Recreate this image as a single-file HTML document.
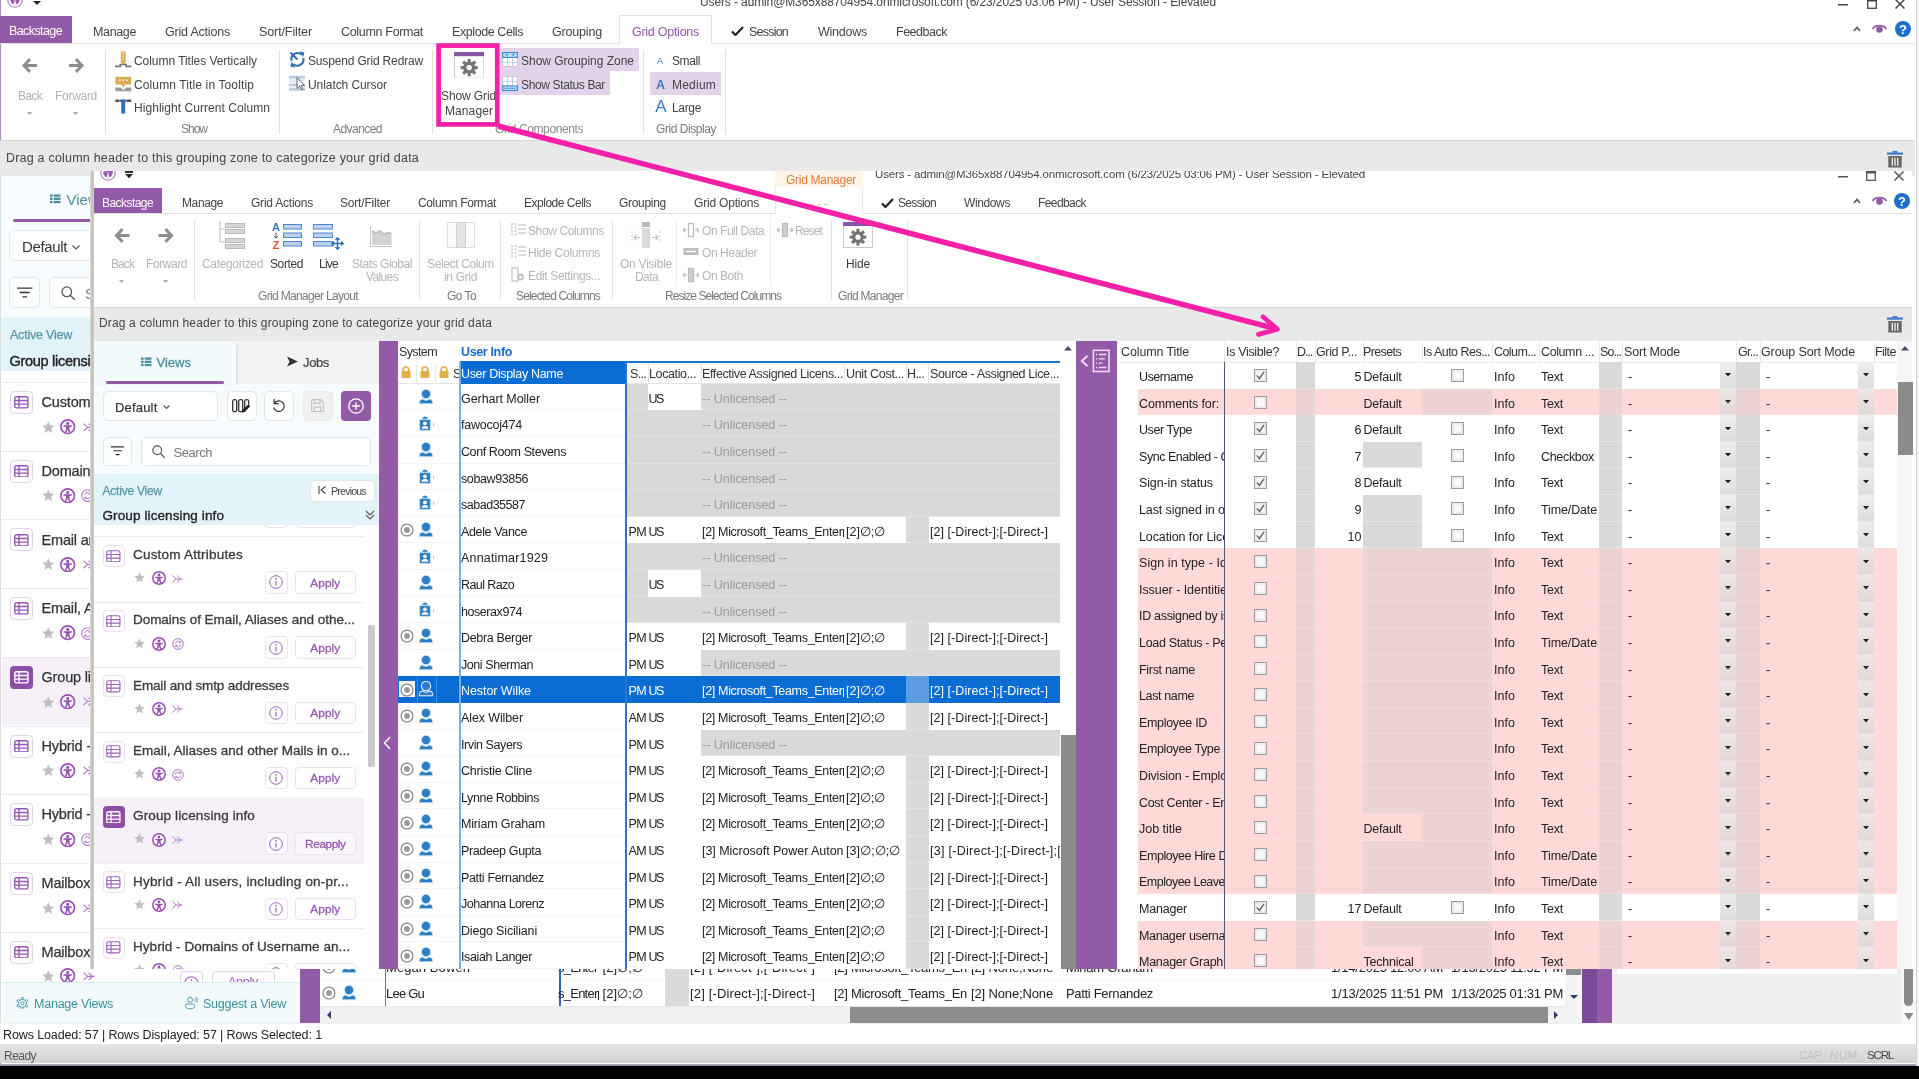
<!DOCTYPE html><html><head><meta charset="utf-8"><title>Grid Manager</title><style>html,body{margin:0;padding:0;background:#fff}
body{width:1919px;height:1079px;position:relative;overflow:hidden;font-family:"Liberation Sans",sans-serif}
#root{position:absolute;left:0;top:0;width:1919px;height:1079px;will-change:transform}
.t{position:absolute;white-space:nowrap}
.r{position:absolute;display:block}
#inner{position:absolute;left:0;top:0;width:1912.7px;height:969px;overflow:hidden;clip-path:inset(171px 0 0 90px)}
</style></head><body><div id="root">
<!-- outer window -->
<div class="r" style="left:0px;top:0px;width:1px;height:1065px;background:#b08cc0;"></div>
<svg class="r" style="left:6.5px;top:-8.5px;" width="16" height="16" viewBox="0 0 20 20"><circle cx="10" cy="10" r="9" fill="#fff" stroke="#b48bc8" stroke-width="1.600"/><circle cx="10" cy="4.800" r="1.800" fill="#9a5db3"/><path d="M4 7.500h12v1.600l-3.200.600z M4 7.500l3.200 2.200-.200 0z" fill="#9a5db3"/><path d="M3.800 8.300Q4 13 8 15.700L9.500 12 9.300 8.300z" fill="#9a5db3"/><path d="M16.200 8.300Q16 13 12 15.700L10.500 12 10.700 8.300z" fill="#9a5db3"/><path d="M9.300 15.800l.7-1.800.7 1.800z" fill="#9a5db3"/></svg>
<svg class="r" style="left:33px;top:1px;" width="8" height="4" viewBox="0 0 8 4"><path d="M0 0h8 L4 4 z" fill="#222"/></svg>
<div class="t" style="left:700.0px;top:-6.3px;font-size:12px;line-height:16px;color:#444;letter-spacing:-0.116px;">Users - admin@M365x88704954.onmicrosoft.com (6/23/2025 03:06 PM) - User Session - Elevated</div>
<svg class="r" style="left:1838px;top:3.5px;" width="10" height="2" viewBox="0 0 10 2"><rect width="10" height="1.500" fill="#444"/></svg><svg class="r" style="left:1867px;top:-1.5px;" width="10" height="10" viewBox="0 0 10 10"><rect x="0.700" y="0.700" width="8.600" height="8.600" fill="none" stroke="#444" stroke-width="1.300"/><rect x="0" y="0" width="10" height="2.500" fill="#444"/></svg><svg class="r" style="left:1895px;top:-1.5px;" width="10" height="10" viewBox="0 0 10 10"><path d="M0.500 0.500l9 9M9.500 0.500l-9 9" stroke="#444" stroke-width="1.500"/></svg>
<div class="r" style="left:0px;top:16px;width:71.6px;height:27px;background:#935ba7;"></div>
<div class="t" style="left:9.0px;top:22.7px;font-size:12.5px;line-height:16px;color:#fff;letter-spacing:-0.597px;">Backstage</div>
<div class="t" style="left:93.0px;top:23.7px;font-size:12.5px;line-height:16px;color:#444;letter-spacing:-0.362px;">Manage</div>
<div class="t" style="left:165.0px;top:23.7px;font-size:12.5px;line-height:16px;color:#444;letter-spacing:-0.199px;">Grid Actions</div>
<div class="t" style="left:259.0px;top:23.7px;font-size:12.5px;line-height:16px;color:#444;letter-spacing:-0.107px;">Sort/Filter</div>
<div class="t" style="left:341.0px;top:23.7px;font-size:12.5px;line-height:16px;color:#444;letter-spacing:-0.318px;">Column Format</div>
<div class="t" style="left:452.0px;top:23.7px;font-size:12.5px;line-height:16px;color:#444;letter-spacing:-0.418px;">Explode Cells</div>
<div class="t" style="left:552.0px;top:23.7px;font-size:12.5px;line-height:16px;color:#444;letter-spacing:-0.178px;">Grouping</div>
<div class="r" style="left:0px;top:43px;width:1915px;height:1px;background:#e0e0e0;"></div>
<div class="r" style="left:619px;top:15px;width:93px;height:29px;background:#fff;border:1px solid #e4e4e4;border-bottom:none;box-sizing:border-box;"></div>
<div class="t" style="left:632.0px;top:23.7px;font-size:12.5px;line-height:16px;color:#9257a8;letter-spacing:-0.264px;">Grid Options</div>
<svg class="r" style="left:731px;top:26px;" width="13" height="10" viewBox="0 0 13 10"><path d="M1 5.500l3.500 3.500L12 1" fill="none" stroke="#222" stroke-width="2.200"/></svg>
<div class="t" style="left:749.0px;top:23.7px;font-size:12.5px;line-height:16px;color:#444;letter-spacing:-0.782px;">Session</div>
<div class="t" style="left:818.0px;top:23.7px;font-size:12.5px;line-height:16px;color:#444;letter-spacing:-0.244px;">Windows</div>
<div class="t" style="left:896.0px;top:23.7px;font-size:12.5px;line-height:16px;color:#444;letter-spacing:-0.487px;">Feedback</div>
<svg class="r" style="left:1853px;top:26px;" width="8" height="6" viewBox="0 0 8 6"><path d="M1 5l3-3.500L7 5" fill="none" stroke="#555" stroke-width="1.600"/></svg>
<svg class="r" style="left:1872px;top:23px;" width="15" height="11" viewBox="0 0 15 11"><path d="M0.500 6C3 1.500 12 1.500 14.500 6" fill="none" stroke="#935ba7" stroke-width="1.600"/><circle cx="7.500" cy="6.500" r="3.300" fill="#935ba7"/></svg>
<svg class="r" style="left:1895px;top:21px;" width="16" height="16" viewBox="0 0 16 16"><circle cx="8" cy="8" r="8" fill="#1e6fcc"/><text x="8" y="12.500" font-size="13" font-weight="700" fill="#fff" text-anchor="middle" font-family="Liberation Sans,sans-serif">?</text></svg>
<svg class="r" style="left:22px;top:58px;" width="15" height="15" viewBox="0 0 15 15"><path d="M15 6H5.5l3.6-3.8L7 0 0 7.5 7 15l2.100-2.200L5.500 9H15z" fill="#8c8c8c"/></svg>
<svg class="r" style="left:69px;top:58px;" width="15" height="15" viewBox="0 0 15 15"><path d="M0 6h9.500L5.900 2.200 8 0l7 7.500L8 15l-2.100-2.200L9.500 9H0z" fill="#8c8c8c"/></svg>
<div class="t" style="left:18.0px;top:87.7px;font-size:12px;line-height:16px;color:#b3b3b3;letter-spacing:-0.670px;">Back</div>
<div class="t" style="left:55.0px;top:87.7px;font-size:12px;line-height:16px;color:#b3b3b3;letter-spacing:-0.287px;">Forward</div>
<svg class="r" style="left:26.5px;top:111.5px;" width="5" height="3" viewBox="0 0 5 3"><path d="M0 0h5 L2.5 3 z" fill="#aaa"/></svg>
<svg class="r" style="left:72.5px;top:111.5px;" width="5" height="3" viewBox="0 0 5 3"><path d="M0 0h5 L2.5 3 z" fill="#aaa"/></svg>
<div class="r" style="left:105px;top:50px;width:1px;height:84px;background:#e1e1e1;"></div>
<div class="r" style="left:279px;top:50px;width:1px;height:84px;background:#e1e1e1;"></div>
<div class="r" style="left:432px;top:50px;width:1px;height:84px;background:#e1e1e1;"></div>
<div class="r" style="left:643px;top:50px;width:1px;height:84px;background:#e1e1e1;"></div>
<div class="r" style="left:725px;top:50px;width:1px;height:84px;background:#e1e1e1;"></div>
<svg class="r" style="left:115px;top:50.5px;" width="17" height="17" viewBox="0 0 17 17"><rect x="5.800" y="0.500" width="4.800" height="10" fill="#dcaa52"/><circle cx="8.200" cy="2.600" r="0.800" fill="#fff"/><circle cx="8.200" cy="5.300" r="0.800" fill="#fff"/><circle cx="8.200" cy="8" r="0.800" fill="#fff"/><path d="M4.800 10.300h6.800L8.200 13.800z" fill="#dcaa52"/><path d="M0 15.300h5.300v-1.800h5.800v1.800h5.300" fill="none" stroke="#777" stroke-width="1.700"/></svg>
<svg class="r" style="left:115px;top:75.5px;" width="17" height="17" viewBox="0 0 17 17"><rect x="0.300" y="0.800" width="16" height="7.700" fill="#dcaa52"/><circle cx="4.700" cy="4.200" r="0.900" fill="#fff"/><circle cx="8.300" cy="4.200" r="0.900" fill="#fff"/><circle cx="11.900" cy="4.200" r="0.900" fill="#fff"/><path d="M5.800 8.400h5L8.300 11.200z" fill="#dcaa52"/><path d="M0.300 11.500h5.200l2.800 2.600 2.800-2.600h5.200v3.800h-16z" fill="#9b9b9b"/></svg>
<svg class="r" style="left:115px;top:99px;" width="17" height="16" viewBox="0 0 17 16"><path d="M0.300 1.800h4.200M12 1.800h4.300" stroke="#555" stroke-width="2.400"/><rect x="6.200" y="0.600" width="4" height="14" fill="#3b6fb3"/><rect x="4.800" y="0.600" width="6.800" height="2.400" fill="#3b6fb3"/></svg>
<div class="t" style="left:134.0px;top:52.7px;font-size:12px;line-height:16px;color:#444;letter-spacing:-0.044px;">Column Titles Vertically</div>
<div class="t" style="left:134.0px;top:76.7px;font-size:12px;line-height:16px;color:#444;letter-spacing:0.123px;">Column Title in Tooltip</div>
<div class="t" style="left:134.0px;top:99.7px;font-size:12px;line-height:16px;color:#444;letter-spacing:0.053px;">Highlight Current Column</div>
<div class="t" style="left:181.0px;top:120.7px;font-size:12px;line-height:16px;color:#7a7a7a;letter-spacing:-1.005px;">Show</div>
<svg class="r" style="left:289px;top:51px;" width="17" height="17" viewBox="0 0 17 17"><path d="M2.600 9.800A6 6 0 0 1 12.300 3.600M14.200 7A6 6 0 0 1 4.600 13.300" fill="none" stroke="#2f6cb5" stroke-width="2"/><path d="M10.500 0.500l5 1-1.500 4.800z" fill="#2f6cb5"/><path d="M6.300 16.400l-5-1 1.500-4.800z" fill="#2f6cb5"/><path d="M1.500 1.500l7 7" stroke="#2f6cb5" stroke-width="2"/></svg>
<svg class="r" style="left:289px;top:75px;" width="17" height="17" viewBox="0 0 17 17"><rect x="0" y="0.500" width="16" height="15.500" fill="#e6edf5"/><path d="M0 2.200h16M0 10h16M0 14.300h16" stroke="#b9cbe0" stroke-width="2.200"/><path d="M8 2.500v11l2.600-2.400 1.900 3.900 1.500-.700-1.900-3.800h3.400z" fill="#fff" stroke="#667" stroke-width="1"/></svg>
<div class="t" style="left:308.0px;top:52.7px;font-size:12px;line-height:16px;color:#444;letter-spacing:-0.161px;">Suspend Grid Redraw</div>
<div class="t" style="left:308.0px;top:76.7px;font-size:12px;line-height:16px;color:#444;letter-spacing:-0.074px;">Unlatch Cursor</div>
<div class="t" style="left:333.0px;top:120.7px;font-size:12px;line-height:16px;color:#7a7a7a;letter-spacing:-0.547px;">Advanced</div>
<svg class="r" style="left:453.6px;top:51.7px;opacity:1;" width="30.4" height="26.8" viewBox="0 0 32 28"><rect x="0.5" y="0.5" width="31" height="27" fill="#fff" stroke="#c6c6c6"/><rect x="0" y="0" width="32" height="4.300" fill="#8a52a6"/>
<g transform="translate(16,16.300)" fill="#757575"><circle r="6.300"/><rect x="-1.700" y="-9" width="3.400" height="18" rx="0.500" transform="rotate(0)"/><rect x="-1.700" y="-9" width="3.400" height="18" rx="0.500" transform="rotate(45)"/><rect x="-1.700" y="-9" width="3.400" height="18" rx="0.500" transform="rotate(90)"/><rect x="-1.700" y="-9" width="3.400" height="18" rx="0.500" transform="rotate(135)"/><circle r="2.800" fill="#fff"/></g></svg>
<div class="t" style="left:441.0px;top:87.7px;font-size:12px;line-height:16px;color:#444;letter-spacing:-0.114px;">Show Grid</div>
<div class="t" style="left:445.0px;top:102.7px;font-size:12px;line-height:16px;color:#444;letter-spacing:0.091px;">Manager</div>
<div class="r" style="left:500px;top:48px;width:139px;height:23px;background:#e2d3ea;"></div>
<div class="r" style="left:500px;top:71px;width:110px;height:23.5px;background:#e2d3ea;"></div>
<svg class="r" style="left:502px;top:52px;" width="16" height="15" viewBox="0 0 16 15"><rect x="0.5" y="0.5" width="15" height="14" fill="#fff" stroke="#c5ccd6"/><path d="M0 10.300h16M5.500 5.500v9.500M10.500 5.500v9.500" stroke="#c5ccd6" fill="none"/><rect x="0.600" y="0.600" width="14.800" height="4.800" fill="#c4e3f7" stroke="#3c8ad6" stroke-width="1.200"/><path d="M3 2.300h3.500l-1.700 1.600zM9.500 2.300H13l-1.700 1.600z" fill="#2f6fb8"/></svg>
<svg class="r" style="left:502px;top:76px;" width="16" height="15" viewBox="0 0 16 15"><rect x="0.5" y="0.5" width="15" height="14" fill="#fff" stroke="#c5ccd6"/><path d="M0 5.300h16M5.500 0v10M10.500 0v10" stroke="#c5ccd6" fill="none"/><rect x="0.600" y="10" width="14.800" height="4.500" fill="#c4e3f7" stroke="#3c8ad6" stroke-width="1.200"/><path d="M2.500 12.300h11" stroke="#5a9ee0" stroke-width="1.200"/></svg>
<div class="t" style="left:521.0px;top:52.7px;font-size:12px;line-height:16px;color:#444;letter-spacing:-0.023px;">Show Grouping Zone</div>
<div class="t" style="left:521.0px;top:76.7px;font-size:12px;line-height:16px;color:#444;letter-spacing:-0.359px;">Show Status Bar</div>
<div class="t" style="left:495.0px;top:120.7px;font-size:12px;line-height:16px;color:#8a8a8a;letter-spacing:-0.403px;">Grid Components</div>
<div class="r" style="left:650px;top:72px;width:71px;height:22.5px;background:#e2d3ea;"></div>
<div class="t" style="left:656.8px;top:54.7px;font-size:9.5px;line-height:12px;color:#3b78c4;">A</div>
<div class="t" style="left:656.0px;top:76.7px;font-size:12.5px;line-height:16px;color:#3b78c4;font-weight:700;">A</div>
<div class="t" style="left:655.3px;top:95.7px;font-size:17px;line-height:22px;color:#3b78c4;">A</div>
<div class="t" style="left:672.0px;top:52.7px;font-size:12px;line-height:16px;color:#444;letter-spacing:-0.402px;">Small</div>
<div class="t" style="left:672.0px;top:76.7px;font-size:12px;line-height:16px;color:#444;letter-spacing:0.220px;">Medium</div>
<div class="t" style="left:672.0px;top:99.7px;font-size:12px;line-height:16px;color:#444;letter-spacing:-0.339px;">Large</div>
<div class="t" style="left:656.0px;top:120.7px;font-size:12px;line-height:16px;color:#7a7a7a;letter-spacing:-0.446px;">Grid Display</div>
<div class="r" style="left:0px;top:140px;width:1915px;height:1px;background:#d4d4d4;"></div>
<div class="r" style="left:0px;top:141px;width:1915px;height:35px;background:#e9e9e9;"></div>
<div class="t" style="left:6.0px;top:149.7px;font-size:12.5px;line-height:16px;color:#444;letter-spacing:0.209px;">Drag a column header to this grouping zone to categorize your grid data</div>
<svg class="r" style="left:1886.5px;top:150.8px;" width="16" height="17" viewBox="0 0 16 17"><path d="M5.500 0h5v1.800h-5z" fill="#3d7cc9"/><rect x="0" y="1.500" width="16" height="2.200" fill="#3d7cc9"/><rect x="1.300" y="5" width="13.400" height="11.500" fill="#666"/><path d="M5.300 6.800v8M8 6.800v8M10.700 6.800v8" stroke="#f2f2f2" stroke-width="1.300"/></svg>
<div class="r" style="left:1px;top:176px;width:299px;height:806px;background:#fff;"></div>
<div class="r" style="left:0px;top:176px;width:1px;height:847px;background:#dcdcdc;"></div>
<div class="r" style="left:1px;top:176px;width:299px;height:141px;background:#f7fcfe;"></div>
<svg class="r" style="left:50px;top:194px;" width="10.5" height="9.625" viewBox="0 0 12 11"><rect x="0" y="0.5" width="3" height="2.600" fill="#4a8c9c"/><rect x="4.200" y="0.5" width="7.800" height="2.600" fill="#4a8c9c"/><rect x="0" y="4.2" width="3" height="2.600" fill="#4a8c9c"/><rect x="4.200" y="4.2" width="7.800" height="2.600" fill="#4a8c9c"/><rect x="0" y="7.9" width="3" height="2.600" fill="#4a8c9c"/><rect x="4.200" y="7.9" width="7.800" height="2.600" fill="#4a8c9c"/></svg>
<div class="t" style="left:66.5px;top:190.2px;font-size:15px;line-height:20px;color:#4d8e9e;">Views</div>
<div class="r" style="left:13px;top:219px;width:117px;height:3px;background:#935ba7;border-radius:2px;"></div>
<div class="r" style="left:9px;top:230px;width:131px;height:31px;background:#fff;border:1px solid #e2e6e8;border-radius:6px;box-sizing:border-box;"></div>
<div class="t" style="left:22.0px;top:236.7px;font-size:15px;line-height:20px;color:#333;letter-spacing:-0.361px;">Default</div>
<svg class="r" style="left:72px;top:245px;" width="8" height="5" viewBox="0 0 8 5"><path d="M0.500 0.500L4 4 L7.5 0.500" fill="none" stroke="#555" stroke-width="1.100"/></svg>
<div class="r" style="left:9px;top:277px;width:31px;height:31px;background:#fff;border:1px solid #e2e6e8;border-radius:6px;box-sizing:border-box;"></div>
<svg class="r" style="left:17.3px;top:287px;" width="15.4" height="11" viewBox="0 0 14 10"><path d="M0 1h14M2.500 5h9M5 9h4" stroke="#333" stroke-width="1.300"/></svg>
<div class="r" style="left:49px;top:277px;width:241px;height:31px;background:#fff;border:1px solid #e2e6e8;border-radius:6px;box-sizing:border-box;"></div>
<svg class="r" style="left:60.65px;top:285.65px;" width="14.7" height="14.7" viewBox="0 0 14 14"><circle cx="5.500" cy="5.500" r="4.600" fill="none" stroke="#555" stroke-width="1.200"/><path d="M9 9l4.500 4.500" stroke="#555" stroke-width="1.300"/></svg>
<div class="t" style="left:85.0px;top:284.7px;font-size:14px;line-height:18px;color:#777;">Search</div>
<div class="r" style="left:1px;top:317px;width:299px;height:54px;background:#e3f3fa;"></div>
<div class="t" style="left:10.0px;top:327.0px;font-size:12.5px;line-height:16px;color:#5797a6;letter-spacing:-0.217px;-webkit-text-stroke:0.25px #5797a6;">Active View</div>
<div class="t" style="left:9.5px;top:351.7px;font-size:14.5px;line-height:19px;color:#222;letter-spacing:-0.288px;-webkit-text-stroke:0.4px #222;">Group licensing info</div>
<div class="r" style="left:2px;top:382px;width:298px;height:1px;background:#ececec;"></div>
<div class="r" style="left:10px;top:391px;width:23px;height:23px;background:#fff;border:1px solid #e3d3ea;border-radius:4px;box-sizing:border-box;"></div>
<svg class="r" style="left:14.15px;top:396.2px;" width="14.7" height="12.6" viewBox="0 0 14 12"><rect x="0.700" y="0.700" width="12.600" height="10.600" rx="1.800" fill="none" stroke="#9a55b3" stroke-width="1.3"/><path d="M0.700 4.300h12.600M0.700 7.800h12.600M4.800 0.700v10.600" stroke="#9a55b3" stroke-width="1.3" fill="none"/></svg>
<div class="t" style="left:41.5px;top:393.2px;font-size:14.5px;line-height:19px;color:#333;letter-spacing:-0.168px;-webkit-text-stroke:0.25px #333;">Custom Attributes</div>
<svg class="r" style="left:41.7px;top:420.7px;" width="12.6" height="12.6" viewBox="0 0 12 12"><path d="M6 0.300l1.700 3.800 4.100.4-3.100 2.800.9 4.100L6 9.300 2.400 11.400l.9-4.100L.2 4.500l4.100-.4z" fill="#c0c0c0"/></svg>
<svg class="r" style="left:60.3px;top:419.3px;" width="15.4" height="15.4" viewBox="0 0 14 14"><circle cx="7" cy="7" r="6.200" fill="#fff" stroke="#9b4fb5" stroke-width="1.500"/><circle cx="7" cy="4" r="1.400" fill="#9b4fb5"/><path d="M3.200 5.700h7.600v1.100l-2.300.6v1.700l1.100 3h-1.400L7 9.500 5.800 12.100H4.400l1.100-3V7.400l-2.300-.6z" fill="#9b4fb5"/></svg>
<svg class="r" style="left:82.95px;top:422.6px;" width="12.1" height="8.8" viewBox="0 0 11 8"><path d="M0.500 0.500l3.700 3.500-3.700 3.500M5 0.500l3.700 3.500L5 7.500M4 4h6.500" fill="none" stroke="#b277c9" stroke-width="1"/></svg>
<div class="r" style="left:2px;top:450.7px;width:298px;height:1px;background:#ececec;"></div>
<div class="r" style="left:10px;top:459.7px;width:23px;height:23px;background:#fff;border:1px solid #e3d3ea;border-radius:4px;box-sizing:border-box;"></div>
<svg class="r" style="left:14.15px;top:464.9px;" width="14.7" height="12.6" viewBox="0 0 14 12"><rect x="0.700" y="0.700" width="12.600" height="10.600" rx="1.800" fill="none" stroke="#9a55b3" stroke-width="1.3"/><path d="M0.700 4.300h12.600M0.700 7.800h12.600M4.800 0.700v10.600" stroke="#9a55b3" stroke-width="1.3" fill="none"/></svg>
<div class="t" style="left:41.5px;top:461.9px;font-size:14.5px;line-height:19px;color:#333;letter-spacing:-0.178px;-webkit-text-stroke:0.25px #333;">Domains of Email</div>
<svg class="r" style="left:41.7px;top:489.4px;" width="12.6" height="12.6" viewBox="0 0 12 12"><path d="M6 0.300l1.700 3.800 4.100.4-3.100 2.800.9 4.100L6 9.300 2.400 11.400l.9-4.100L.2 4.500l4.100-.4z" fill="#c0c0c0"/></svg>
<svg class="r" style="left:60.3px;top:488px;" width="15.4" height="15.4" viewBox="0 0 14 14"><circle cx="7" cy="7" r="6.200" fill="#fff" stroke="#9b4fb5" stroke-width="1.500"/><circle cx="7" cy="4" r="1.400" fill="#9b4fb5"/><path d="M3.200 5.700h7.600v1.100l-2.300.6v1.700l1.100 3h-1.400L7 9.500 5.800 12.100H4.400l1.100-3V7.400l-2.300-.6z" fill="#9b4fb5"/></svg>
<svg class="r" style="left:81.4px;top:489.1px;" width="13.2" height="13.2" viewBox="0 0 12 12"><circle cx="6" cy="6" r="5.300" fill="none" stroke="#b277c9" stroke-width="1"/><path d="M3.300 5.500a2.800 2.800 0 0 1 5-1.200M8.700 6.500a2.800 2.800 0 0 1-5 1.200" fill="none" stroke="#b277c9" stroke-width="0.900"/><path d="M8.600 2.800v1.800H6.800M3.400 9.200V7.400h1.800" fill="none" stroke="#b277c9" stroke-width="0.900"/></svg>
<div class="r" style="left:2px;top:519.4px;width:298px;height:1px;background:#ececec;"></div>
<div class="r" style="left:10px;top:528.4px;width:23px;height:23px;background:#fff;border:1px solid #e3d3ea;border-radius:4px;box-sizing:border-box;"></div>
<svg class="r" style="left:14.15px;top:533.6px;" width="14.7" height="12.6" viewBox="0 0 14 12"><rect x="0.700" y="0.700" width="12.600" height="10.600" rx="1.800" fill="none" stroke="#9a55b3" stroke-width="1.3"/><path d="M0.700 4.300h12.600M0.700 7.800h12.600M4.800 0.700v10.600" stroke="#9a55b3" stroke-width="1.3" fill="none"/></svg>
<div class="t" style="left:41.5px;top:530.6px;font-size:14.5px;line-height:19px;color:#333;letter-spacing:-0.178px;-webkit-text-stroke:0.25px #333;">Email and smtp</div>
<svg class="r" style="left:41.7px;top:558.1px;" width="12.6" height="12.6" viewBox="0 0 12 12"><path d="M6 0.300l1.700 3.800 4.100.4-3.100 2.800.9 4.100L6 9.300 2.400 11.400l.9-4.100L.2 4.500l4.100-.4z" fill="#c0c0c0"/></svg>
<svg class="r" style="left:60.3px;top:556.7px;" width="15.4" height="15.4" viewBox="0 0 14 14"><circle cx="7" cy="7" r="6.200" fill="#fff" stroke="#9b4fb5" stroke-width="1.500"/><circle cx="7" cy="4" r="1.400" fill="#9b4fb5"/><path d="M3.200 5.700h7.600v1.100l-2.300.6v1.700l1.100 3h-1.400L7 9.500 5.800 12.100H4.400l1.100-3V7.400l-2.300-.6z" fill="#9b4fb5"/></svg>
<svg class="r" style="left:82.95px;top:560px;" width="12.1" height="8.8" viewBox="0 0 11 8"><path d="M0.500 0.500l3.700 3.500-3.700 3.500M5 0.500l3.700 3.500L5 7.500M4 4h6.500" fill="none" stroke="#b277c9" stroke-width="1"/></svg>
<div class="r" style="left:2px;top:588.1px;width:298px;height:1px;background:#ececec;"></div>
<div class="r" style="left:10px;top:597.1px;width:23px;height:23px;background:#fff;border:1px solid #e3d3ea;border-radius:4px;box-sizing:border-box;"></div>
<svg class="r" style="left:14.15px;top:602.3px;" width="14.7" height="12.6" viewBox="0 0 14 12"><rect x="0.700" y="0.700" width="12.600" height="10.600" rx="1.800" fill="none" stroke="#9a55b3" stroke-width="1.3"/><path d="M0.700 4.300h12.600M0.700 7.800h12.600M4.800 0.700v10.600" stroke="#9a55b3" stroke-width="1.3" fill="none"/></svg>
<div class="t" style="left:41.5px;top:599.3px;font-size:14.5px;line-height:19px;color:#333;letter-spacing:-0.161px;-webkit-text-stroke:0.25px #333;">Email, Aliases</div>
<svg class="r" style="left:41.7px;top:626.8px;" width="12.6" height="12.6" viewBox="0 0 12 12"><path d="M6 0.300l1.700 3.800 4.100.4-3.100 2.800.9 4.100L6 9.300 2.400 11.400l.9-4.100L.2 4.500l4.100-.4z" fill="#c0c0c0"/></svg>
<svg class="r" style="left:60.3px;top:625.4px;" width="15.4" height="15.4" viewBox="0 0 14 14"><circle cx="7" cy="7" r="6.200" fill="#fff" stroke="#9b4fb5" stroke-width="1.500"/><circle cx="7" cy="4" r="1.400" fill="#9b4fb5"/><path d="M3.200 5.700h7.600v1.100l-2.300.6v1.700l1.100 3h-1.400L7 9.500 5.800 12.100H4.400l1.100-3V7.400l-2.300-.6z" fill="#9b4fb5"/></svg>
<svg class="r" style="left:81.4px;top:626.5px;" width="13.2" height="13.2" viewBox="0 0 12 12"><circle cx="6" cy="6" r="5.300" fill="none" stroke="#b277c9" stroke-width="1"/><path d="M3.300 5.500a2.800 2.800 0 0 1 5-1.200M8.700 6.500a2.800 2.800 0 0 1-5 1.200" fill="none" stroke="#b277c9" stroke-width="0.900"/><path d="M8.600 2.800v1.800H6.800M3.400 9.200V7.400h1.800" fill="none" stroke="#b277c9" stroke-width="0.900"/></svg>
<div class="r" style="left:2px;top:656.8px;width:298px;height:68.7px;background:#f6f0f9;"></div>
<div class="r" style="left:2px;top:656.8px;width:298px;height:1px;background:#ececec;"></div>
<div class="r" style="left:10px;top:665.8px;width:23px;height:23px;background:#8f4fa9;border-radius:4px;"></div>
<svg class="r" style="left:14.15px;top:671px;" width="14.7" height="12.6" viewBox="0 0 14 12"><rect x="0.700" y="0.700" width="12.600" height="10.600" rx="1.800" fill="none" stroke="#fff" stroke-width="1.3"/><path d="M0.700 4.300h12.600M0.700 7.800h12.600M4.800 0.700v10.600" stroke="#fff" stroke-width="1.3" fill="none"/></svg>
<div class="t" style="left:41.5px;top:668.0px;font-size:14.5px;line-height:19px;color:#333;letter-spacing:-0.168px;-webkit-text-stroke:0.25px #333;">Group licensing</div>
<svg class="r" style="left:41.7px;top:695.5px;" width="12.6" height="12.6" viewBox="0 0 12 12"><path d="M6 0.300l1.700 3.800 4.100.4-3.100 2.800.9 4.100L6 9.300 2.400 11.400l.9-4.100L.2 4.500l4.100-.4z" fill="#c0c0c0"/></svg>
<svg class="r" style="left:60.3px;top:694.1px;" width="15.4" height="15.4" viewBox="0 0 14 14"><circle cx="7" cy="7" r="6.200" fill="#fff" stroke="#9b4fb5" stroke-width="1.500"/><circle cx="7" cy="4" r="1.400" fill="#9b4fb5"/><path d="M3.200 5.700h7.600v1.100l-2.300.6v1.700l1.100 3h-1.400L7 9.500 5.800 12.100H4.400l1.100-3V7.400l-2.300-.6z" fill="#9b4fb5"/></svg>
<svg class="r" style="left:82.95px;top:697.4px;" width="12.1" height="8.8" viewBox="0 0 11 8"><path d="M0.500 0.500l3.700 3.500-3.700 3.500M5 0.500l3.700 3.500L5 7.500M4 4h6.500" fill="none" stroke="#b277c9" stroke-width="1"/></svg>
<div class="r" style="left:2px;top:725.5px;width:298px;height:1px;background:#ececec;"></div>
<div class="r" style="left:10px;top:734.5px;width:23px;height:23px;background:#fff;border:1px solid #e3d3ea;border-radius:4px;box-sizing:border-box;"></div>
<svg class="r" style="left:14.15px;top:739.7px;" width="14.7" height="12.6" viewBox="0 0 14 12"><rect x="0.700" y="0.700" width="12.600" height="10.600" rx="1.800" fill="none" stroke="#9a55b3" stroke-width="1.3"/><path d="M0.700 4.300h12.600M0.700 7.800h12.600M4.800 0.700v10.600" stroke="#9a55b3" stroke-width="1.3" fill="none"/></svg>
<div class="t" style="left:41.5px;top:736.7px;font-size:14.5px;line-height:19px;color:#333;letter-spacing:-0.146px;-webkit-text-stroke:0.25px #333;">Hybrid - All</div>
<svg class="r" style="left:41.7px;top:764.2px;" width="12.6" height="12.6" viewBox="0 0 12 12"><path d="M6 0.300l1.700 3.800 4.100.4-3.100 2.800.9 4.100L6 9.300 2.400 11.400l.9-4.100L.2 4.500l4.100-.4z" fill="#c0c0c0"/></svg>
<svg class="r" style="left:60.3px;top:762.8px;" width="15.4" height="15.4" viewBox="0 0 14 14"><circle cx="7" cy="7" r="6.200" fill="#fff" stroke="#9b4fb5" stroke-width="1.500"/><circle cx="7" cy="4" r="1.400" fill="#9b4fb5"/><path d="M3.200 5.700h7.600v1.100l-2.300.6v1.700l1.100 3h-1.400L7 9.500 5.800 12.100H4.400l1.100-3V7.400l-2.300-.6z" fill="#9b4fb5"/></svg>
<svg class="r" style="left:82.95px;top:766.1px;" width="12.1" height="8.8" viewBox="0 0 11 8"><path d="M0.500 0.500l3.700 3.500-3.700 3.500M5 0.500l3.700 3.500L5 7.500M4 4h6.500" fill="none" stroke="#b277c9" stroke-width="1"/></svg>
<div class="r" style="left:2px;top:794.2px;width:298px;height:1px;background:#ececec;"></div>
<div class="r" style="left:10px;top:803.2px;width:23px;height:23px;background:#fff;border:1px solid #e3d3ea;border-radius:4px;box-sizing:border-box;"></div>
<svg class="r" style="left:14.15px;top:808.4px;" width="14.7" height="12.6" viewBox="0 0 14 12"><rect x="0.700" y="0.700" width="12.600" height="10.600" rx="1.800" fill="none" stroke="#9a55b3" stroke-width="1.3"/><path d="M0.700 4.300h12.600M0.700 7.800h12.600M4.800 0.700v10.600" stroke="#9a55b3" stroke-width="1.3" fill="none"/></svg>
<div class="t" style="left:41.5px;top:805.4px;font-size:14.5px;line-height:19px;color:#333;letter-spacing:-0.175px;-webkit-text-stroke:0.25px #333;">Hybrid - Domains</div>
<svg class="r" style="left:41.7px;top:832.9px;" width="12.6" height="12.6" viewBox="0 0 12 12"><path d="M6 0.300l1.700 3.800 4.100.4-3.100 2.800.9 4.100L6 9.300 2.400 11.400l.9-4.100L.2 4.500l4.100-.4z" fill="#c0c0c0"/></svg>
<svg class="r" style="left:60.3px;top:831.5px;" width="15.4" height="15.4" viewBox="0 0 14 14"><circle cx="7" cy="7" r="6.200" fill="#fff" stroke="#9b4fb5" stroke-width="1.500"/><circle cx="7" cy="4" r="1.400" fill="#9b4fb5"/><path d="M3.200 5.700h7.600v1.100l-2.300.6v1.700l1.100 3h-1.400L7 9.500 5.800 12.100H4.400l1.100-3V7.400l-2.300-.6z" fill="#9b4fb5"/></svg>
<svg class="r" style="left:81.4px;top:832.6px;" width="13.2" height="13.2" viewBox="0 0 12 12"><circle cx="6" cy="6" r="5.300" fill="none" stroke="#b277c9" stroke-width="1"/><path d="M3.300 5.500a2.800 2.800 0 0 1 5-1.200M8.700 6.500a2.800 2.800 0 0 1-5 1.200" fill="none" stroke="#b277c9" stroke-width="0.900"/><path d="M8.600 2.800v1.800H6.800M3.400 9.200V7.400h1.800" fill="none" stroke="#b277c9" stroke-width="0.900"/></svg>
<div class="r" style="left:2px;top:862.9px;width:298px;height:1px;background:#ececec;"></div>
<div class="r" style="left:10px;top:871.9px;width:23px;height:23px;background:#fff;border:1px solid #e3d3ea;border-radius:4px;box-sizing:border-box;"></div>
<svg class="r" style="left:14.15px;top:877.1px;" width="14.7" height="12.6" viewBox="0 0 14 12"><rect x="0.700" y="0.700" width="12.600" height="10.600" rx="1.800" fill="none" stroke="#9a55b3" stroke-width="1.3"/><path d="M0.700 4.300h12.600M0.700 7.800h12.600M4.800 0.700v10.600" stroke="#9a55b3" stroke-width="1.3" fill="none"/></svg>
<div class="t" style="left:41.5px;top:874.1px;font-size:14.5px;line-height:19px;color:#333;letter-spacing:-0.178px;-webkit-text-stroke:0.25px #333;">Mailbox</div>
<svg class="r" style="left:41.7px;top:901.6px;" width="12.6" height="12.6" viewBox="0 0 12 12"><path d="M6 0.300l1.700 3.800 4.100.4-3.100 2.800.9 4.100L6 9.300 2.400 11.400l.9-4.100L.2 4.500l4.100-.4z" fill="#c0c0c0"/></svg>
<svg class="r" style="left:60.3px;top:900.2px;" width="15.4" height="15.4" viewBox="0 0 14 14"><circle cx="7" cy="7" r="6.200" fill="#fff" stroke="#9b4fb5" stroke-width="1.500"/><circle cx="7" cy="4" r="1.400" fill="#9b4fb5"/><path d="M3.200 5.700h7.600v1.100l-2.300.6v1.700l1.100 3h-1.400L7 9.500 5.800 12.100H4.400l1.100-3V7.400l-2.300-.6z" fill="#9b4fb5"/></svg>
<svg class="r" style="left:82.95px;top:903.5px;" width="12.1" height="8.8" viewBox="0 0 11 8"><path d="M0.500 0.500l3.700 3.500-3.700 3.500M5 0.500l3.700 3.500L5 7.500M4 4h6.500" fill="none" stroke="#b277c9" stroke-width="1"/></svg>
<div class="r" style="left:2px;top:931.6px;width:298px;height:1px;background:#ececec;"></div>
<div class="r" style="left:10px;top:940.6px;width:23px;height:23px;background:#fff;border:1px solid #e3d3ea;border-radius:4px;box-sizing:border-box;"></div>
<svg class="r" style="left:14.15px;top:945.8px;" width="14.7" height="12.6" viewBox="0 0 14 12"><rect x="0.700" y="0.700" width="12.600" height="10.600" rx="1.800" fill="none" stroke="#9a55b3" stroke-width="1.3"/><path d="M0.700 4.300h12.600M0.700 7.800h12.600M4.800 0.700v10.600" stroke="#9a55b3" stroke-width="1.3" fill="none"/></svg>
<div class="t" style="left:41.5px;top:942.8px;font-size:14.5px;line-height:19px;color:#333;letter-spacing:-0.178px;-webkit-text-stroke:0.25px #333;">Mailbox</div>
<svg class="r" style="left:41.7px;top:970.3px;" width="12.6" height="12.6" viewBox="0 0 12 12"><path d="M6 0.300l1.700 3.800 4.100.4-3.100 2.800.9 4.100L6 9.300 2.400 11.400l.9-4.100L.2 4.500l4.100-.4z" fill="#c0c0c0"/></svg>
<svg class="r" style="left:60.3px;top:968.9px;" width="15.4" height="15.4" viewBox="0 0 14 14"><circle cx="7" cy="7" r="6.200" fill="#fff" stroke="#9b4fb5" stroke-width="1.500"/><circle cx="7" cy="4" r="1.400" fill="#9b4fb5"/><path d="M3.200 5.700h7.600v1.100l-2.300.6v1.700l1.100 3h-1.400L7 9.500 5.800 12.100H4.400l1.100-3V7.400l-2.300-.6z" fill="#9b4fb5"/></svg>
<svg class="r" style="left:82.95px;top:972.2px;" width="12.1" height="8.8" viewBox="0 0 11 8"><path d="M0.500 0.500l3.700 3.500-3.700 3.500M5 0.500l3.700 3.500L5 7.500M4 4h6.500" fill="none" stroke="#b277c9" stroke-width="1"/></svg>
<!-- inner window -->
<div id="inner">
<div class="r" style="left:90.3px;top:171px;width:3.7px;height:798px;background:linear-gradient(90deg,#e2e2e0,#bcbab0 55%,#d2d2d0);"></div>
<div class="r" style="left:94px;top:171px;width:1818px;height:798px;background:#fff;"></div>
<svg class="r" style="left:99.5px;top:164.7px;" width="16" height="16" viewBox="0 0 20 20"><circle cx="10" cy="10" r="9" fill="#fff" stroke="#b48bc8" stroke-width="1.600"/><circle cx="10" cy="4.800" r="1.800" fill="#9a5db3"/><path d="M4 7.500h12v1.600l-3.200.600z M4 7.500l3.200 2.200-.200 0z" fill="#9a5db3"/><path d="M3.800 8.300Q4 13 8 15.700L9.500 12 9.300 8.300z" fill="#9a5db3"/><path d="M16.200 8.300Q16 13 12 15.700L10.500 12 10.700 8.300z" fill="#9a5db3"/><path d="M9.300 15.800l.7-1.800.7 1.800z" fill="#9a5db3"/></svg>
<svg class="r" style="left:124.8px;top:173.7px;" width="8" height="4.2" viewBox="0 0 8 4.2"><path d="M0 0h8 L4 4.2 z" fill="#222"/></svg>
<div class="r" style="left:124.8px;top:171px;width:8px;height:1.6px;background:#333;"></div>
<div class="r" style="left:775px;top:171px;width:88px;height:16px;background:#fef4e8;"></div>
<div class="t" style="left:786.0px;top:171.7px;font-size:12px;line-height:16px;color:#e07b39;letter-spacing:-0.281px;">Grid Manager</div>
<div class="t" style="left:875.0px;top:167.0px;font-size:11.5px;line-height:15px;color:#444;letter-spacing:-0.161px;">Users - admin@M365x88704954.onmicrosoft.com (6/23/2025 03:06 PM) - User Session - Elevated</div>
<svg class="r" style="left:1838px;top:175.5px;" width="10" height="2" viewBox="0 0 10 2"><rect width="10" height="1.500" fill="#555"/></svg><svg class="r" style="left:1866px;top:170.5px;" width="10" height="10" viewBox="0 0 10 10"><rect x="0.700" y="0.700" width="8.600" height="8.600" fill="none" stroke="#555" stroke-width="1.300"/><rect x="0" y="0" width="10" height="2.500" fill="#555"/></svg><svg class="r" style="left:1894px;top:170.5px;" width="10" height="10" viewBox="0 0 10 10"><path d="M0.500 0.500l9 9M9.500 0.500l-9 9" stroke="#555" stroke-width="1.500"/></svg>
<div class="r" style="left:94px;top:188px;width:67.7px;height:25.5px;background:#935ba7;"></div>
<div class="t" style="left:102.0px;top:194.7px;font-size:12px;line-height:16px;color:#fff;letter-spacing:-0.559px;">Backstage</div>
<div class="t" style="left:182.0px;top:194.7px;font-size:12px;line-height:16px;color:#444;letter-spacing:-0.394px;">Manage</div>
<div class="t" style="left:251.0px;top:194.7px;font-size:12px;line-height:16px;color:#444;letter-spacing:-0.225px;">Grid Actions</div>
<div class="t" style="left:340.0px;top:194.7px;font-size:12px;line-height:16px;color:#444;letter-spacing:-0.183px;">Sort/Filter</div>
<div class="t" style="left:418.0px;top:194.7px;font-size:12px;line-height:16px;color:#444;letter-spacing:-0.361px;">Column Format</div>
<div class="t" style="left:524.0px;top:194.7px;font-size:12px;line-height:16px;color:#444;letter-spacing:-0.490px;">Explode Cells</div>
<div class="t" style="left:619.0px;top:194.7px;font-size:12px;line-height:16px;color:#444;letter-spacing:-0.296px;">Grouping</div>
<div class="t" style="left:694.0px;top:194.7px;font-size:12px;line-height:16px;color:#444;letter-spacing:-0.197px;">Grid Options</div>
<div class="t" style="left:898.0px;top:194.7px;font-size:12px;line-height:16px;color:#444;letter-spacing:-0.670px;">Session</div>
<div class="t" style="left:964.0px;top:194.7px;font-size:12px;line-height:16px;color:#444;letter-spacing:-0.383px;">Windows</div>
<div class="t" style="left:1038.0px;top:194.7px;font-size:12px;line-height:16px;color:#444;letter-spacing:-0.588px;">Feedback</div>
<svg class="r" style="left:881px;top:197.5px;" width="13" height="10" viewBox="0 0 13 10"><path d="M1 5.500l3.500 3.500L12 1" fill="none" stroke="#222" stroke-width="2.200"/></svg>
<div class="r" style="left:94px;top:213px;width:1818.7px;height:1px;background:#e0e0e0;"></div>
<div class="r" style="left:775px;top:187px;width:88px;height:27px;background:#fff;border:1px solid #f6e8d8;border-bottom:none;border-top:none;box-sizing:border-box;"></div>
<div class="t" style="left:810.4px;top:195.7px;font-size:11px;line-height:14px;color:#e6b58f;">- - -</div>
<svg class="r" style="left:1853px;top:198px;" width="8" height="6" viewBox="0 0 8 6"><path d="M1 5l3-3.500L7 5" fill="none" stroke="#555" stroke-width="1.600"/></svg>
<svg class="r" style="left:1872px;top:195px;" width="15" height="11" viewBox="0 0 15 11"><path d="M0.500 6C3 1.500 12 1.500 14.500 6" fill="none" stroke="#935ba7" stroke-width="1.600"/><circle cx="7.500" cy="6.500" r="3.300" fill="#935ba7"/></svg>
<svg class="r" style="left:1894px;top:193px;" width="16" height="16" viewBox="0 0 16 16"><circle cx="8" cy="8" r="8" fill="#1e6fcc"/><text x="8" y="12.500" font-size="13" font-weight="700" fill="#fff" text-anchor="middle" font-family="Liberation Sans,sans-serif">?</text></svg>
<svg class="r" style="left:114px;top:228px;" width="16" height="15" viewBox="0 0 15 15"><path d="M15 6H5.5l3.6-3.8L7 0 0 7.5 7 15l2.100-2.200L5.500 9H15z" fill="#8c8c8c"/></svg>
<svg class="r" style="left:158px;top:228px;" width="16" height="15" viewBox="0 0 15 15"><path d="M0 6h9.500L5.900 2.200 8 0l7 7.500L8 15l-2.100-2.200L9.500 9H0z" fill="#8c8c8c"/></svg>
<div class="t" style="left:111.0px;top:255.7px;font-size:12px;line-height:16px;color:#b5b5b5;letter-spacing:-0.920px;">Back</div>
<div class="t" style="left:146.0px;top:255.7px;font-size:12px;line-height:16px;color:#b5b5b5;letter-spacing:-0.430px;">Forward</div>
<svg class="r" style="left:118.5px;top:279.5px;" width="5" height="3" viewBox="0 0 5 3"><path d="M0 0h5 L2.5 3 z" fill="#aaa"/></svg>
<svg class="r" style="left:162.5px;top:279.5px;" width="5" height="3" viewBox="0 0 5 3"><path d="M0 0h5 L2.5 3 z" fill="#aaa"/></svg>
<div class="r" style="left:194px;top:220px;width:1px;height:80px;background:#e1e1e1;"></div>
<div class="r" style="left:419px;top:220px;width:1px;height:80px;background:#e1e1e1;"></div>
<div class="r" style="left:500px;top:220px;width:1px;height:80px;background:#e1e1e1;"></div>
<div class="r" style="left:612px;top:220px;width:1px;height:80px;background:#e1e1e1;"></div>
<div class="r" style="left:831px;top:220px;width:1px;height:80px;background:#e1e1e1;"></div>
<div class="r" style="left:907px;top:220px;width:1px;height:80px;background:#e1e1e1;"></div>
<div class="r" style="left:676px;top:220px;width:1px;height:66px;background:#ececec;"></div>
<div class="r" style="left:770px;top:220px;width:1px;height:66px;background:#ececec;"></div>
<svg class="r" style="left:219px;top:221px;" width="27" height="29" viewBox="0 0 27 29"><path d="M1 0v21h5M1 8h5" fill="none" stroke="#bbb"/><g fill="#d6d6d6" stroke="#bcbcbc"><rect x="6.500" y="2.500" width="19" height="4"/><rect x="6.500" y="8.500" width="19" height="4"/><rect x="6.500" y="17.500" width="19" height="4"/><rect x="6.500" y="23.500" width="19" height="4"/></g></svg>
<div class="t" style="left:202.0px;top:255.7px;font-size:12px;line-height:16px;color:#b5b5b5;letter-spacing:-0.337px;">Categorized</div>
<svg class="r" style="left:272px;top:221px;" width="31" height="29" viewBox="0 0 31 29"><g fill="#bcd3ee" stroke="#4f86c6"><rect x="11.500" y="3.500" width="18" height="4.500"/><rect x="11.500" y="12" width="18" height="4.500"/><rect x="11.500" y="20.500" width="18" height="4.500"/></g><text x="0" y="10" font-size="11" font-weight="700" fill="#3b78c4" font-family="Liberation Sans,sans-serif">A</text><text x="0.500" y="27.500" font-size="11" font-weight="700" fill="#d9532c" font-family="Liberation Sans,sans-serif">Z</text><path d="M4 11.500v5M2.300 15l1.700 2.200L5.700 15" fill="none" stroke="#555" stroke-width="1"/></svg>
<div class="t" style="left:270.0px;top:255.7px;font-size:12px;line-height:16px;color:#3a3a3a;letter-spacing:-0.393px;">Sorted</div>
<svg class="r" style="left:313px;top:222px;" width="32" height="29" viewBox="0 0 32 29"><g fill="#bcd3ee" stroke="#4f86c6"><rect x="0.500" y="2.500" width="19" height="4.500"/><rect x="0.500" y="11" width="19" height="4.500"/><rect x="0.500" y="19.500" width="19" height="4.500"/></g><g stroke="#2f6fb8" stroke-width="1.400" fill="none"><path d="M24.500 16v11M19 21.500h11"/><path d="M22.500 18l2-2.200 2 2.200M22.500 25l2 2.200 2-2.200M21 19.500l-2.200 2 2.200 2M28 19.500l2.200 2-2.200 2"/></g></svg>
<div class="t" style="left:319.0px;top:255.7px;font-size:12px;line-height:16px;color:#3a3a3a;letter-spacing:-0.754px;">Live</div>
<svg class="r" style="left:370px;top:226px;" width="22" height="21" viewBox="0 0 22 21"><path d="M0.500 0v20.500H22" fill="none" stroke="#c4c4c4"/><path d="M2 5l4 2 4-2 4 3 4-1.500 3.500 1V19H2z" fill="#d2d2d2"/><path d="M2 5l4 2 4-2 4 3 4-1.500 3.500 1" fill="none" stroke="#bbb" stroke-width="1.500"/></svg>
<div class="t" style="left:352.0px;top:255.7px;font-size:12px;line-height:16px;color:#b5b5b5;letter-spacing:-0.447px;">Stats Global</div>
<div class="t" style="left:366.0px;top:269.0px;font-size:12px;line-height:16px;color:#b5b5b5;letter-spacing:-0.634px;">Values</div>
<div class="t" style="left:258.0px;top:287.7px;font-size:12px;line-height:16px;color:#7a7a7a;letter-spacing:-0.670px;">Grid Manager Layout</div>
<svg class="r" style="left:447px;top:222px;" width="28" height="27" viewBox="0 0 28 27"><rect x="0.500" y="0.500" width="27" height="25" fill="#fbfbfb" stroke="#dcdcdc"/><rect x="9.500" y="0.500" width="9" height="25" fill="#e3e3e3" stroke="#d0d0d0"/></svg>
<div class="t" style="left:427.0px;top:255.7px;font-size:12px;line-height:16px;color:#b5b5b5;letter-spacing:-0.364px;">Select Colum</div>
<div class="t" style="left:444.0px;top:269.0px;font-size:12px;line-height:16px;color:#b5b5b5;letter-spacing:-0.335px;">in Grid</div>
<div class="t" style="left:447.0px;top:287.7px;font-size:12px;line-height:16px;color:#7a7a7a;letter-spacing:-0.560px;">Go To</div>
<svg class="r" style="left:511px;top:222px;" width="16" height="16" viewBox="0 0 16 16"><path d="M1 1v14M4.500 1v14" stroke="#c6c6c6" stroke-width="1.500" stroke-dasharray="2 1.500"/><path d="M7 3h8M7 7h8M7 11h8" stroke="#cfcfcf" stroke-width="1.500"/></svg>
<svg class="r" style="left:511px;top:244px;" width="16" height="16" viewBox="0 0 16 16"><path d="M1 1v14M4.500 1v14" stroke="#c6c6c6" stroke-width="1.500" stroke-dasharray="2 1.500"/><path d="M7 3h8M7 7h8M7 11h8" stroke="#cfcfcf" stroke-width="1.500"/></svg>
<svg class="r" style="left:511px;top:267px;" width="16" height="16" viewBox="0 0 16 16"><rect x="1" y="1" width="6" height="13" fill="none" stroke="#c6c6c6" stroke-width="1.400"/><circle cx="9.500" cy="10" r="3.600" fill="#c6c6c6"/><circle cx="9.500" cy="10" r="1.300" fill="#fff"/></svg>
<div class="t" style="left:528.0px;top:222.7px;font-size:12px;line-height:16px;color:#b5b5b5;letter-spacing:-0.392px;">Show Columns</div>
<div class="t" style="left:528.0px;top:245.2px;font-size:12px;line-height:16px;color:#b5b5b5;letter-spacing:-0.280px;">Hide Columns</div>
<div class="t" style="left:528.0px;top:267.7px;font-size:12px;line-height:16px;color:#b5b5b5;letter-spacing:-0.336px;">Edit Settings...</div>
<div class="t" style="left:516.0px;top:287.7px;font-size:12px;line-height:16px;color:#7a7a7a;letter-spacing:-0.837px;">Selected Columns</div>
<svg class="r" style="left:631px;top:222px;" width="30" height="28" viewBox="0 0 30 28"><rect x="11" y="0" width="8" height="5" fill="#b8b8b8"/><rect x="11" y="6" width="8" height="20" fill="#d9d9d9"/><path d="M1 9v12M29 9v12" stroke="#c6c6c6" stroke-dasharray="2 2"/><path d="M3 15.500h6M21 15.500h6" stroke="#c0c0c0" stroke-width="1.200"/><path d="M5.500 13L3 15.500 5.500 18M24.500 13l2.500 2.500-2.500 2.500" fill="none" stroke="#c0c0c0" stroke-width="1.200"/></svg>
<div class="t" style="left:620.0px;top:255.7px;font-size:12px;line-height:16px;color:#b5b5b5;letter-spacing:-0.248px;">On Visible</div>
<div class="t" style="left:635.0px;top:269.0px;font-size:12px;line-height:16px;color:#b5b5b5;letter-spacing:-0.587px;">Data</div>
<svg class="r" style="left:683px;top:222px;" width="16" height="16" viewBox="0 0 16 16"><rect x="5.500" y="1.500" width="5" height="13" fill="none" stroke="#bdbdbd" stroke-width="1.300"/><path d="M0 8h4M12 8h4M2 6l-2 2 2 2M14 6l2 2-2 2" fill="none" stroke="#bdbdbd" stroke-width="1.200"/></svg>
<svg class="r" style="left:683px;top:246px;" width="16" height="12" viewBox="0 0 16 12"><rect x="0.500" y="2" width="15" height="7" fill="#bdbdbd"/><path d="M3 5.500h10" stroke="#fff" stroke-width="1.400"/></svg>
<svg class="r" style="left:683px;top:267px;" width="16" height="16" viewBox="0 0 16 16"><rect x="5.500" y="1.500" width="5" height="13" fill="#cfcfcf" stroke="#bdbdbd" stroke-width="1.300"/><path d="M0 8h4M12 8h4M2 6l-2 2 2 2M14 6l2 2-2 2" fill="none" stroke="#bdbdbd" stroke-width="1.200"/></svg>
<div class="t" style="left:702.0px;top:222.7px;font-size:12px;line-height:16px;color:#b5b5b5;letter-spacing:-0.447px;">On Full Data</div>
<div class="t" style="left:702.0px;top:245.2px;font-size:12px;line-height:16px;color:#b5b5b5;letter-spacing:-0.411px;">On Header</div>
<div class="t" style="left:702.0px;top:267.7px;font-size:12px;line-height:16px;color:#b5b5b5;letter-spacing:-0.433px;">On Both</div>
<svg class="r" style="left:777px;top:222px;" width="16" height="16" viewBox="0 0 16 16"><rect x="5.500" y="1.500" width="5" height="13" fill="#cfcfcf" stroke="#bdbdbd" stroke-width="1.300"/><path d="M0 8h4M12 8h4M2 6l-2 2 2 2M14 6l2 2-2 2" fill="none" stroke="#bdbdbd" stroke-width="1.200"/></svg>
<div class="t" style="left:795.0px;top:222.7px;font-size:12px;line-height:16px;color:#b5b5b5;letter-spacing:-0.870px;">Reset</div>
<div class="t" style="left:665.0px;top:287.7px;font-size:12px;line-height:16px;color:#7a7a7a;letter-spacing:-0.930px;">Resize Selected Columns</div>
<svg class="r" style="left:843px;top:222px;opacity:1;" width="30" height="26" viewBox="0 0 32 28"><rect x="0.5" y="0.5" width="31" height="27" fill="#fff" stroke="#c6c6c6"/><rect x="0" y="0" width="32" height="4.300" fill="#8a52a6"/>
<g transform="translate(16,16.300)" fill="#757575"><circle r="6.300"/><rect x="-1.700" y="-9" width="3.400" height="18" rx="0.500" transform="rotate(0)"/><rect x="-1.700" y="-9" width="3.400" height="18" rx="0.500" transform="rotate(45)"/><rect x="-1.700" y="-9" width="3.400" height="18" rx="0.500" transform="rotate(90)"/><rect x="-1.700" y="-9" width="3.400" height="18" rx="0.500" transform="rotate(135)"/><circle r="2.800" fill="#fff"/></g></svg>
<div class="t" style="left:846.0px;top:255.7px;font-size:12px;line-height:16px;color:#3a3a3a;letter-spacing:-0.170px;">Hide</div>
<div class="t" style="left:838.0px;top:287.7px;font-size:12px;line-height:16px;color:#7a7a7a;letter-spacing:-0.697px;">Grid Manager</div>
<div class="r" style="left:94px;top:306.5px;width:1818px;height:1px;background:#d4d4d4;"></div>
<div class="r" style="left:94px;top:307.5px;width:1818px;height:33px;background:#e9e9e9;"></div>
<div class="t" style="left:99.0px;top:315.2px;font-size:12px;line-height:16px;color:#444;letter-spacing:0.152px;">Drag a column header to this grouping zone to categorize your grid data</div>
<svg class="r" style="left:1886.5px;top:315.5px;" width="16" height="17" viewBox="0 0 16 17"><path d="M5.500 0h5v1.800h-5z" fill="#3d7cc9"/><rect x="0" y="1.500" width="16" height="2.200" fill="#3d7cc9"/><rect x="1.300" y="5" width="13.400" height="11.500" fill="#666"/><path d="M5.300 6.800v8M8 6.800v8M10.700 6.800v8" stroke="#f2f2f2" stroke-width="1.300"/></svg>
<div class="r" style="left:94px;top:340.5px;width:285px;height:628.5px;background:#fff;"></div>
<div class="r" style="left:94px;top:384px;width:285px;height:90px;background:#f7fcfe;"></div>
<div class="r" style="left:236px;top:340.5px;width:143px;height:43.5px;background:#f3f3f3;"></div>
<div class="r" style="left:94px;top:340.5px;width:142px;height:43.5px;background:#f3fbfd;border-radius:0 5px 0 0;box-shadow:1px 0 2px rgba(0,0,0,.12);"></div>
<svg class="r" style="left:141px;top:357px;" width="10.5" height="9.625" viewBox="0 0 12 11"><rect x="0" y="0.5" width="3" height="2.600" fill="#4a8e9f"/><rect x="4.200" y="0.5" width="7.800" height="2.600" fill="#4a8e9f"/><rect x="0" y="4.2" width="3" height="2.600" fill="#4a8e9f"/><rect x="4.200" y="4.2" width="7.800" height="2.600" fill="#4a8e9f"/><rect x="0" y="7.9" width="3" height="2.600" fill="#4a8e9f"/><rect x="4.200" y="7.9" width="7.800" height="2.600" fill="#4a8e9f"/></svg>
<div class="t" style="left:156.5px;top:354.4px;font-size:13px;line-height:17px;color:#4a8e9f;letter-spacing:0.011px;-webkit-text-stroke:0.3px #4a8e9f;">Views</div>
<div class="r" style="left:106px;top:381px;width:118px;height:3px;background:#935ba7;border-radius:2px;"></div>
<svg class="r" style="left:287px;top:356px;" width="11" height="11" viewBox="0 0 12 12"><path d="M0 0.500L12 6 0 11.500l2.800-5.500z" fill="#333"/></svg>
<div class="t" style="left:303.0px;top:353.7px;font-size:13px;line-height:17px;color:#444;letter-spacing:-0.365px;-webkit-text-stroke:0.2px #444;">Jobs</div>
<div class="r" style="left:102.5px;top:391px;width:115.5px;height:29.5px;background:#fff;border:1px solid #e2e6e8;border-radius:5px;box-sizing:border-box;"></div>
<div class="t" style="left:115.0px;top:398.5px;font-size:13px;line-height:17px;color:#333;letter-spacing:0.187px;-webkit-text-stroke:0.2px #333;">Default</div>
<svg class="r" style="left:163px;top:405.25px;" width="7" height="4.5" viewBox="0 0 7 4.5"><path d="M0.500 0.500L3.5 3.5 L6.5 0.500" fill="none" stroke="#555" stroke-width="1.100"/></svg>
<div class="r" style="left:226.5px;top:391px;width:30px;height:29.5px;background:#fff;border:1px solid #e2e6e8;border-radius:5px;box-sizing:border-box;"></div>
<svg class="r" style="left:232px;top:398.8px;" width="18" height="14" viewBox="0 0 18 14"><rect x="0.700" y="0.700" width="4" height="12" rx="1.500" fill="none" stroke="#333" stroke-width="1.300"/><rect x="6.700" y="0.700" width="4" height="12" rx="1.500" fill="none" stroke="#333" stroke-width="1.300"/><path d="M12.700 12.700V2.200q0-1.500 2-1.500t2 1.500V5" fill="none" stroke="#333" stroke-width="1.300"/><path d="M10 14l1-3.500 5.500-5.500 2 2-5.500 5.500z" fill="#222"/></svg>
<div class="r" style="left:264px;top:391px;width:30px;height:29.5px;background:#fff;border:1px solid #e2e6e8;border-radius:5px;box-sizing:border-box;"></div>
<svg class="r" style="left:272.35px;top:398.375px;" width="13.3" height="14.25" viewBox="0 0 14 15"><path d="M2.500 5.500A5.600 5.600 0 1 1 1.800 10" fill="none" stroke="#333" stroke-width="1.300"/><path d="M2.300 1v4.800h4.800" fill="none" stroke="#333" stroke-width="1.300"/></svg>
<div class="r" style="left:302.5px;top:391px;width:30.5px;height:29.5px;background:#f1f1f1;border:1px solid #ececec;border-radius:4px;box-sizing:border-box;"></div>
<svg class="r" style="left:310.85px;top:399.15px;" width="13.3" height="13.3" viewBox="0 0 14 14"><path d="M1.700 0.700h8.600l3 3v8.600q0 1-1 1H1.700q-1 0-1-1V1.700q0-1 1-1z" fill="none" stroke="#c4c4c4" stroke-width="1.300"/><path d="M3.500 0.700v3.800h6V0.700M3.500 13.300V8.500h7v4.800" fill="none" stroke="#c4c4c4" stroke-width="1.300"/></svg>
<div class="r" style="left:340.5px;top:391px;width:30.5px;height:29.5px;background:#935ba7;border-radius:4px;"></div>
<svg class="r" style="left:347.5px;top:397.8px;" width="16" height="16" viewBox="0 0 16 16"><circle cx="8" cy="8" r="7.200" fill="none" stroke="#fff" stroke-width="1.300"/><path d="M8 4.200v7.600M4.200 8h7.600" stroke="#fff" stroke-width="1.300"/></svg>
<div class="r" style="left:102.5px;top:436.5px;width:29.5px;height:29.5px;background:#fff;border:1px solid #e2e6e8;border-radius:5px;box-sizing:border-box;"></div>
<svg class="r" style="left:110.85px;top:446.25px;" width="13.3" height="9.5" viewBox="0 0 14 10"><path d="M0 1h14M2.500 5h9M5 9h4" stroke="#333" stroke-width="1.300"/></svg>
<div class="r" style="left:140.5px;top:436.5px;width:230.5px;height:29.5px;background:#fff;border:1px solid #e2e6e8;border-radius:5px;box-sizing:border-box;"></div>
<svg class="r" style="left:151.85px;top:444.85px;" width="13.3" height="13.3" viewBox="0 0 14 14"><circle cx="5.500" cy="5.500" r="4.600" fill="none" stroke="#555" stroke-width="1.200"/><path d="M9 9l4.500 4.500" stroke="#555" stroke-width="1.300"/></svg>
<div class="t" style="left:173.5px;top:444.0px;font-size:13px;line-height:17px;color:#777;letter-spacing:-0.449px;">Search</div>
<div class="r" style="left:94px;top:536.3px;width:270px;height:1px;background:#ececec;"></div>
<div class="r" style="left:102.5px;top:544.8px;width:22.5px;height:22px;background:#fff;border:1px solid #ebe1f0;border-radius:4px;box-sizing:border-box;"></div>
<svg class="r" style="left:106.35px;top:549.5px;" width="14.7" height="12.6" viewBox="0 0 14 12"><rect x="0.700" y="0.700" width="12.600" height="10.600" rx="1.800" fill="none" stroke="#a062b8" stroke-width="1.1"/><path d="M0.700 4.300h12.600M0.700 7.800h12.600M4.800 0.700v10.600" stroke="#a062b8" stroke-width="1.1" fill="none"/></svg>
<div class="t" style="left:133.0px;top:546.0px;font-size:13.5px;line-height:18px;color:#3a3a3a;letter-spacing:0.203px;-webkit-text-stroke:0.3px #3a3a3a;">Custom Attributes</div>
<svg class="r" style="left:134.18px;top:572.28px;" width="11.04" height="11.04" viewBox="0 0 12 12"><path d="M6 0.300l1.700 3.800 4.100.4-3.100 2.800.9 4.100L6 9.300 2.400 11.400l.9-4.100L.2 4.500l4.100-.4z" fill="#c0c0c0"/></svg>
<svg class="r" style="left:151.6px;top:571.3px;" width="14" height="14" viewBox="0 0 14 14"><circle cx="7" cy="7" r="6.200" fill="#fff" stroke="#9b4fb5" stroke-width="1.500"/><circle cx="7" cy="4" r="1.400" fill="#9b4fb5"/><path d="M3.200 5.700h7.600v1.100l-2.300.6v1.700l1.100 3h-1.400L7 9.500 5.800 12.100H4.400l1.100-3V7.400l-2.300-.6z" fill="#9b4fb5"/></svg>
<svg class="r" style="left:172px;top:574.8px;" width="11" height="8" viewBox="0 0 11 8"><path d="M0.500 0.500l3.700 3.500-3.700 3.500M5 0.500l3.700 3.500L5 7.500M4 4h6.500" fill="none" stroke="#b277c9" stroke-width="1"/></svg>
<div class="r" style="left:264.5px;top:571px;width:23px;height:22.6px;background:#fff;border:1px solid #ebe1f0;border-radius:4px;box-sizing:border-box;"></div>
<svg class="r" style="left:269px;top:575.3px;" width="14" height="14" viewBox="0 0 14 14"><circle cx="7" cy="7" r="6.300" fill="none" stroke="#a062b8" stroke-width="1"/><path d="M7 6v4.500" stroke="#a062b8" stroke-width="1.200"/><circle cx="7" cy="3.900" r="0.800" fill="#a062b8"/></svg>
<div class="r" style="left:295px;top:571px;width:60.7px;height:22.6px;background:#fff;border:1px solid #ebe1f0;border-radius:4px;box-sizing:border-box;"></div>
<div class="t" style="left:310.3px;top:575.5px;font-size:11.8px;line-height:15px;color:#9a55b3;letter-spacing:0.096px;-webkit-text-stroke:0.3px #9a55b3;">Apply</div>
<div class="r" style="left:94px;top:601.6px;width:270px;height:1px;background:#ececec;"></div>
<div class="r" style="left:102.5px;top:610.1px;width:22.5px;height:22px;background:#fff;border:1px solid #ebe1f0;border-radius:4px;box-sizing:border-box;"></div>
<svg class="r" style="left:106.35px;top:614.8px;" width="14.7" height="12.6" viewBox="0 0 14 12"><rect x="0.700" y="0.700" width="12.600" height="10.600" rx="1.800" fill="none" stroke="#a062b8" stroke-width="1.1"/><path d="M0.700 4.300h12.600M0.700 7.800h12.600M4.800 0.700v10.600" stroke="#a062b8" stroke-width="1.1" fill="none"/></svg>
<div class="t" style="left:133.0px;top:611.3px;font-size:13.5px;line-height:18px;color:#3a3a3a;letter-spacing:-0.044px;-webkit-text-stroke:0.3px #3a3a3a;">Domains of Email, Aliases and othe...</div>
<svg class="r" style="left:134.18px;top:637.58px;" width="11.04" height="11.04" viewBox="0 0 12 12"><path d="M6 0.300l1.700 3.800 4.100.4-3.100 2.800.9 4.100L6 9.300 2.400 11.400l.9-4.100L.2 4.500l4.100-.4z" fill="#c0c0c0"/></svg>
<svg class="r" style="left:151.6px;top:636.6px;" width="14" height="14" viewBox="0 0 14 14"><circle cx="7" cy="7" r="6.200" fill="#fff" stroke="#9b4fb5" stroke-width="1.500"/><circle cx="7" cy="4" r="1.400" fill="#9b4fb5"/><path d="M3.200 5.700h7.600v1.100l-2.300.6v1.700l1.100 3h-1.400L7 9.500 5.800 12.100H4.400l1.100-3V7.400l-2.300-.6z" fill="#9b4fb5"/></svg>
<svg class="r" style="left:171.5px;top:638.1px;" width="12" height="12" viewBox="0 0 12 12"><circle cx="6" cy="6" r="5.300" fill="none" stroke="#b277c9" stroke-width="1"/><path d="M3.300 5.500a2.800 2.800 0 0 1 5-1.200M8.700 6.500a2.800 2.800 0 0 1-5 1.200" fill="none" stroke="#b277c9" stroke-width="0.900"/><path d="M8.600 2.800v1.800H6.800M3.400 9.200V7.400h1.800" fill="none" stroke="#b277c9" stroke-width="0.900"/></svg>
<div class="r" style="left:264.5px;top:636.3px;width:23px;height:22.6px;background:#fff;border:1px solid #ebe1f0;border-radius:4px;box-sizing:border-box;"></div>
<svg class="r" style="left:269px;top:640.6px;" width="14" height="14" viewBox="0 0 14 14"><circle cx="7" cy="7" r="6.300" fill="none" stroke="#a062b8" stroke-width="1"/><path d="M7 6v4.500" stroke="#a062b8" stroke-width="1.200"/><circle cx="7" cy="3.900" r="0.800" fill="#a062b8"/></svg>
<div class="r" style="left:295px;top:636.3px;width:60.7px;height:22.6px;background:#fff;border:1px solid #ebe1f0;border-radius:4px;box-sizing:border-box;"></div>
<div class="t" style="left:310.3px;top:640.8px;font-size:11.8px;line-height:15px;color:#9a55b3;letter-spacing:0.096px;-webkit-text-stroke:0.3px #9a55b3;">Apply</div>
<div class="r" style="left:94px;top:666.9px;width:270px;height:1px;background:#ececec;"></div>
<div class="r" style="left:102.5px;top:675.4px;width:22.5px;height:22px;background:#fff;border:1px solid #ebe1f0;border-radius:4px;box-sizing:border-box;"></div>
<svg class="r" style="left:106.35px;top:680.1px;" width="14.7" height="12.6" viewBox="0 0 14 12"><rect x="0.700" y="0.700" width="12.600" height="10.600" rx="1.800" fill="none" stroke="#a062b8" stroke-width="1.1"/><path d="M0.700 4.300h12.600M0.700 7.800h12.600M4.800 0.700v10.600" stroke="#a062b8" stroke-width="1.1" fill="none"/></svg>
<div class="t" style="left:133.0px;top:676.6px;font-size:13.5px;line-height:18px;color:#3a3a3a;letter-spacing:-0.128px;-webkit-text-stroke:0.3px #3a3a3a;">Email and smtp addresses</div>
<svg class="r" style="left:134.18px;top:702.88px;" width="11.04" height="11.04" viewBox="0 0 12 12"><path d="M6 0.300l1.700 3.800 4.100.4-3.100 2.800.9 4.100L6 9.300 2.400 11.400l.9-4.100L.2 4.500l4.100-.4z" fill="#c0c0c0"/></svg>
<svg class="r" style="left:151.6px;top:701.9px;" width="14" height="14" viewBox="0 0 14 14"><circle cx="7" cy="7" r="6.200" fill="#fff" stroke="#9b4fb5" stroke-width="1.500"/><circle cx="7" cy="4" r="1.400" fill="#9b4fb5"/><path d="M3.200 5.700h7.600v1.100l-2.300.6v1.700l1.100 3h-1.400L7 9.500 5.800 12.100H4.400l1.100-3V7.400l-2.300-.6z" fill="#9b4fb5"/></svg>
<svg class="r" style="left:172px;top:705.4px;" width="11" height="8" viewBox="0 0 11 8"><path d="M0.500 0.500l3.700 3.500-3.700 3.500M5 0.500l3.700 3.500L5 7.500M4 4h6.500" fill="none" stroke="#b277c9" stroke-width="1"/></svg>
<div class="r" style="left:264.5px;top:701.6px;width:23px;height:22.6px;background:#fff;border:1px solid #ebe1f0;border-radius:4px;box-sizing:border-box;"></div>
<svg class="r" style="left:269px;top:705.9px;" width="14" height="14" viewBox="0 0 14 14"><circle cx="7" cy="7" r="6.300" fill="none" stroke="#a062b8" stroke-width="1"/><path d="M7 6v4.500" stroke="#a062b8" stroke-width="1.200"/><circle cx="7" cy="3.900" r="0.800" fill="#a062b8"/></svg>
<div class="r" style="left:295px;top:701.6px;width:60.7px;height:22.6px;background:#fff;border:1px solid #ebe1f0;border-radius:4px;box-sizing:border-box;"></div>
<div class="t" style="left:310.3px;top:706.1px;font-size:11.8px;line-height:15px;color:#9a55b3;letter-spacing:0.096px;-webkit-text-stroke:0.3px #9a55b3;">Apply</div>
<div class="r" style="left:94px;top:732.2px;width:270px;height:1px;background:#ececec;"></div>
<div class="r" style="left:102.5px;top:740.7px;width:22.5px;height:22px;background:#fff;border:1px solid #ebe1f0;border-radius:4px;box-sizing:border-box;"></div>
<svg class="r" style="left:106.35px;top:745.4px;" width="14.7" height="12.6" viewBox="0 0 14 12"><rect x="0.700" y="0.700" width="12.600" height="10.600" rx="1.800" fill="none" stroke="#a062b8" stroke-width="1.1"/><path d="M0.700 4.300h12.600M0.700 7.800h12.600M4.800 0.700v10.600" stroke="#a062b8" stroke-width="1.1" fill="none"/></svg>
<div class="t" style="left:133.0px;top:741.9px;font-size:13.5px;line-height:18px;color:#3a3a3a;letter-spacing:0.004px;-webkit-text-stroke:0.3px #3a3a3a;">Email, Aliases and other Mails in o...</div>
<svg class="r" style="left:134.18px;top:768.18px;" width="11.04" height="11.04" viewBox="0 0 12 12"><path d="M6 0.300l1.700 3.800 4.100.4-3.100 2.800.9 4.100L6 9.300 2.400 11.400l.9-4.100L.2 4.500l4.100-.4z" fill="#c0c0c0"/></svg>
<svg class="r" style="left:151.6px;top:767.2px;" width="14" height="14" viewBox="0 0 14 14"><circle cx="7" cy="7" r="6.200" fill="#fff" stroke="#9b4fb5" stroke-width="1.500"/><circle cx="7" cy="4" r="1.400" fill="#9b4fb5"/><path d="M3.200 5.700h7.600v1.100l-2.300.6v1.700l1.100 3h-1.400L7 9.500 5.800 12.100H4.400l1.100-3V7.400l-2.300-.6z" fill="#9b4fb5"/></svg>
<svg class="r" style="left:171.5px;top:768.7px;" width="12" height="12" viewBox="0 0 12 12"><circle cx="6" cy="6" r="5.300" fill="none" stroke="#b277c9" stroke-width="1"/><path d="M3.300 5.500a2.800 2.800 0 0 1 5-1.200M8.700 6.500a2.800 2.800 0 0 1-5 1.200" fill="none" stroke="#b277c9" stroke-width="0.900"/><path d="M8.600 2.800v1.800H6.800M3.400 9.200V7.400h1.800" fill="none" stroke="#b277c9" stroke-width="0.900"/></svg>
<div class="r" style="left:264.5px;top:766.9px;width:23px;height:22.6px;background:#fff;border:1px solid #ebe1f0;border-radius:4px;box-sizing:border-box;"></div>
<svg class="r" style="left:269px;top:771.2px;" width="14" height="14" viewBox="0 0 14 14"><circle cx="7" cy="7" r="6.300" fill="none" stroke="#a062b8" stroke-width="1"/><path d="M7 6v4.500" stroke="#a062b8" stroke-width="1.200"/><circle cx="7" cy="3.900" r="0.800" fill="#a062b8"/></svg>
<div class="r" style="left:295px;top:766.9px;width:60.7px;height:22.6px;background:#fff;border:1px solid #ebe1f0;border-radius:4px;box-sizing:border-box;"></div>
<div class="t" style="left:310.3px;top:771.4px;font-size:11.8px;line-height:15px;color:#9a55b3;letter-spacing:0.096px;-webkit-text-stroke:0.3px #9a55b3;">Apply</div>
<div class="r" style="left:94px;top:797.5px;width:270px;height:65.3px;background:#f6f0f9;"></div>
<div class="r" style="left:94px;top:797.5px;width:270px;height:1px;background:#ececec;"></div>
<div class="r" style="left:102.5px;top:806px;width:22.5px;height:22px;background:#8f4fa9;border-radius:4px;"></div>
<svg class="r" style="left:106.35px;top:810.7px;" width="14.7" height="12.6" viewBox="0 0 14 12"><rect x="0.700" y="0.700" width="12.600" height="10.600" rx="1.800" fill="none" stroke="#fff" stroke-width="1.25"/><path d="M0.700 4.300h12.600M0.700 7.800h12.600M4.800 0.700v10.600" stroke="#fff" stroke-width="1.25" fill="none"/></svg>
<div class="t" style="left:133.0px;top:807.2px;font-size:13.5px;line-height:18px;color:#3a3a3a;letter-spacing:0.134px;-webkit-text-stroke:0.3px #3a3a3a;">Group licensing info</div>
<svg class="r" style="left:134.18px;top:833.48px;" width="11.04" height="11.04" viewBox="0 0 12 12"><path d="M6 0.300l1.700 3.800 4.100.4-3.100 2.800.9 4.100L6 9.300 2.400 11.400l.9-4.100L.2 4.500l4.100-.4z" fill="#c0c0c0"/></svg>
<svg class="r" style="left:151.6px;top:832.5px;" width="14" height="14" viewBox="0 0 14 14"><circle cx="7" cy="7" r="6.200" fill="#fff" stroke="#9b4fb5" stroke-width="1.500"/><circle cx="7" cy="4" r="1.400" fill="#9b4fb5"/><path d="M3.200 5.700h7.600v1.100l-2.300.6v1.700l1.100 3h-1.400L7 9.500 5.800 12.100H4.400l1.100-3V7.400l-2.300-.6z" fill="#9b4fb5"/></svg>
<svg class="r" style="left:172px;top:836px;" width="11" height="8" viewBox="0 0 11 8"><path d="M0.500 0.500l3.700 3.500-3.700 3.500M5 0.500l3.700 3.500L5 7.500M4 4h6.500" fill="none" stroke="#b277c9" stroke-width="1"/></svg>
<div class="r" style="left:264.5px;top:832.2px;width:23px;height:22.6px;background:#fbf8fd;border:1px solid #ebe1f0;border-radius:4px;box-sizing:border-box;"></div>
<svg class="r" style="left:269px;top:836.5px;" width="14" height="14" viewBox="0 0 14 14"><circle cx="7" cy="7" r="6.300" fill="none" stroke="#a062b8" stroke-width="1"/><path d="M7 6v4.500" stroke="#a062b8" stroke-width="1.200"/><circle cx="7" cy="3.900" r="0.800" fill="#a062b8"/></svg>
<div class="r" style="left:295px;top:832.2px;width:60.7px;height:22.6px;background:#fbf8fd;border:1px solid #ebe1f0;border-radius:4px;box-sizing:border-box;"></div>
<div class="t" style="left:305.1px;top:836.7px;font-size:11.8px;line-height:15px;color:#9a55b3;letter-spacing:-0.399px;-webkit-text-stroke:0.3px #9a55b3;">Reapply</div>
<div class="r" style="left:94px;top:862.8px;width:270px;height:1px;background:#ececec;"></div>
<div class="r" style="left:102.5px;top:871.3px;width:22.5px;height:22px;background:#fff;border:1px solid #ebe1f0;border-radius:4px;box-sizing:border-box;"></div>
<svg class="r" style="left:106.35px;top:876px;" width="14.7" height="12.6" viewBox="0 0 14 12"><rect x="0.700" y="0.700" width="12.600" height="10.600" rx="1.800" fill="none" stroke="#a062b8" stroke-width="1.1"/><path d="M0.700 4.300h12.600M0.700 7.800h12.600M4.800 0.700v10.600" stroke="#a062b8" stroke-width="1.1" fill="none"/></svg>
<div class="t" style="left:133.0px;top:872.5px;font-size:13.5px;line-height:18px;color:#3a3a3a;letter-spacing:0.195px;-webkit-text-stroke:0.3px #3a3a3a;">Hybrid - All users, including on-pr...</div>
<svg class="r" style="left:134.18px;top:898.78px;" width="11.04" height="11.04" viewBox="0 0 12 12"><path d="M6 0.300l1.700 3.800 4.100.4-3.100 2.800.9 4.100L6 9.300 2.400 11.400l.9-4.100L.2 4.500l4.100-.4z" fill="#c0c0c0"/></svg>
<svg class="r" style="left:151.6px;top:897.8px;" width="14" height="14" viewBox="0 0 14 14"><circle cx="7" cy="7" r="6.200" fill="#fff" stroke="#9b4fb5" stroke-width="1.500"/><circle cx="7" cy="4" r="1.400" fill="#9b4fb5"/><path d="M3.200 5.700h7.600v1.100l-2.300.6v1.700l1.100 3h-1.400L7 9.500 5.800 12.100H4.400l1.100-3V7.400l-2.300-.6z" fill="#9b4fb5"/></svg>
<svg class="r" style="left:172px;top:901.3px;" width="11" height="8" viewBox="0 0 11 8"><path d="M0.500 0.500l3.700 3.500-3.700 3.500M5 0.500l3.700 3.500L5 7.500M4 4h6.500" fill="none" stroke="#b277c9" stroke-width="1"/></svg>
<div class="r" style="left:264.5px;top:897.5px;width:23px;height:22.6px;background:#fff;border:1px solid #ebe1f0;border-radius:4px;box-sizing:border-box;"></div>
<svg class="r" style="left:269px;top:901.8px;" width="14" height="14" viewBox="0 0 14 14"><circle cx="7" cy="7" r="6.300" fill="none" stroke="#a062b8" stroke-width="1"/><path d="M7 6v4.500" stroke="#a062b8" stroke-width="1.200"/><circle cx="7" cy="3.900" r="0.800" fill="#a062b8"/></svg>
<div class="r" style="left:295px;top:897.5px;width:60.7px;height:22.6px;background:#fff;border:1px solid #ebe1f0;border-radius:4px;box-sizing:border-box;"></div>
<div class="t" style="left:310.3px;top:902.0px;font-size:11.8px;line-height:15px;color:#9a55b3;letter-spacing:0.096px;-webkit-text-stroke:0.3px #9a55b3;">Apply</div>
<div class="r" style="left:94px;top:928.1px;width:270px;height:1px;background:#ececec;"></div>
<div class="r" style="left:102.5px;top:936.6px;width:22.5px;height:22px;background:#fff;border:1px solid #ebe1f0;border-radius:4px;box-sizing:border-box;"></div>
<svg class="r" style="left:106.35px;top:941.3px;" width="14.7" height="12.6" viewBox="0 0 14 12"><rect x="0.700" y="0.700" width="12.600" height="10.600" rx="1.800" fill="none" stroke="#a062b8" stroke-width="1.1"/><path d="M0.700 4.300h12.600M0.700 7.800h12.600M4.800 0.700v10.600" stroke="#a062b8" stroke-width="1.1" fill="none"/></svg>
<div class="t" style="left:133.0px;top:937.8px;font-size:13.5px;line-height:18px;color:#3a3a3a;letter-spacing:0.049px;-webkit-text-stroke:0.3px #3a3a3a;">Hybrid - Domains of Username an...</div>
<svg class="r" style="left:134.18px;top:964.08px;" width="11.04" height="11.04" viewBox="0 0 12 12"><path d="M6 0.300l1.700 3.800 4.100.4-3.100 2.800.9 4.100L6 9.300 2.400 11.400l.9-4.100L.2 4.500l4.100-.4z" fill="#c0c0c0"/></svg>
<svg class="r" style="left:151.6px;top:963.1px;" width="14" height="14" viewBox="0 0 14 14"><circle cx="7" cy="7" r="6.200" fill="#fff" stroke="#9b4fb5" stroke-width="1.500"/><circle cx="7" cy="4" r="1.400" fill="#9b4fb5"/><path d="M3.200 5.700h7.600v1.100l-2.300.6v1.700l1.100 3h-1.400L7 9.500 5.800 12.100H4.400l1.100-3V7.400l-2.300-.6z" fill="#9b4fb5"/></svg>
<svg class="r" style="left:171.5px;top:964.6px;" width="12" height="12" viewBox="0 0 12 12"><circle cx="6" cy="6" r="5.300" fill="none" stroke="#b277c9" stroke-width="1"/><path d="M3.300 5.500a2.800 2.800 0 0 1 5-1.200M8.700 6.500a2.800 2.800 0 0 1-5 1.200" fill="none" stroke="#b277c9" stroke-width="0.900"/><path d="M8.600 2.800v1.800H6.800M3.400 9.200V7.400h1.800" fill="none" stroke="#b277c9" stroke-width="0.900"/></svg>
<div class="r" style="left:264.5px;top:962.8px;width:23px;height:22.6px;background:#fff;border:1px solid #ebe1f0;border-radius:4px;box-sizing:border-box;"></div>
<svg class="r" style="left:269px;top:967.1px;" width="14" height="14" viewBox="0 0 14 14"><circle cx="7" cy="7" r="6.300" fill="none" stroke="#a062b8" stroke-width="1"/><path d="M7 6v4.500" stroke="#a062b8" stroke-width="1.200"/><circle cx="7" cy="3.900" r="0.800" fill="#a062b8"/></svg>
<div class="r" style="left:295px;top:962.8px;width:60.7px;height:22.6px;background:#fff;border:1px solid #ebe1f0;border-radius:4px;box-sizing:border-box;"></div>
<div class="t" style="left:310.3px;top:967.3px;font-size:11.8px;line-height:15px;color:#9a55b3;letter-spacing:0.096px;-webkit-text-stroke:0.3px #9a55b3;">Apply</div>
<div class="r" style="left:264.5px;top:515px;width:23px;height:12.5px;background:#fff;border:1px solid #ebe1f0;border-radius:4px;box-sizing:border-box;"></div>
<div class="r" style="left:295px;top:515px;width:60.7px;height:12.5px;background:#fff;border:1px solid #ebe1f0;border-radius:4px;box-sizing:border-box;"></div>
<div class="r" style="left:94px;top:474px;width:285px;height:50.5px;background:#e3f3fa;"></div>
<div class="t" style="left:102.5px;top:483.0px;font-size:12px;line-height:16px;color:#5797a6;letter-spacing:-0.210px;-webkit-text-stroke:0.25px #5797a6;">Active View</div>
<div class="r" style="left:310px;top:480px;width:64.5px;height:21.5px;background:#fff;border:1px solid #e2e6e8;border-radius:5px;box-sizing:border-box;"></div>
<svg class="r" style="left:318px;top:486px;" width="8" height="8" viewBox="0 0 8 8"><path d="M1 0v8" stroke="#444" stroke-width="1.100"/><path d="M7.500 0.500L3 4l4.500 3.500" fill="none" stroke="#444" stroke-width="1.100"/></svg>
<div class="t" style="left:331.0px;top:484.0px;font-size:10.5px;line-height:14px;color:#444;letter-spacing:-0.732px;">Previous</div>
<div class="t" style="left:102.5px;top:506.7px;font-size:13.5px;line-height:18px;color:#222;letter-spacing:0.109px;-webkit-text-stroke:0.35px #222;">Group licensing info</div>
<svg class="r" style="left:364.5px;top:510px;" width="10" height="10" viewBox="0 0 10 10"><path d="M1 1l4 4 4-4M1 5l4 4 4-4" fill="none" stroke="#555" stroke-width="1.100"/></svg>
<div class="r" style="left:364px;top:524.5px;width:15px;height:444.5px;background:#fff;"></div>
<div class="r" style="left:367.5px;top:625px;width:7.2px;height:142px;background:#c9c9c9;border-radius:2px;"></div>
<div class="r" style="left:379px;top:340.5px;width:18.5px;height:628.5px;background:#935ba7;"></div>
<svg class="r" style="left:383px;top:736px;" width="8" height="14" viewBox="0 0 8 14"><path d="M7 1L1.500 7 7 13" fill="none" stroke="#fff" stroke-width="1.400"/></svg>
<div class="r" style="left:397.5px;top:340.5px;width:678.5px;height:628.5px;background:#fff;"></div>
<div class="t" style="left:399.0px;top:344.2px;font-size:12.5px;line-height:16px;color:#333;letter-spacing:-0.613px;">System</div>
<div class="t" style="left:461.0px;top:344.2px;font-size:12.5px;line-height:16px;color:#1769c8;font-weight:700;letter-spacing:-0.353px;">User Info</div>
<div class="r" style="left:460px;top:360.5px;width:600px;height:2px;background:#1a73d6;"></div>
<div class="r" style="left:397.5px;top:383px;width:662.5px;height:1px;background:#e4e4e4;"></div>
<svg class="r" style="left:401px;top:366.3px;" width="10" height="12" viewBox="0 0 10 12"><path d="M2.200 5.500V3.800a2.800 2.800 0 0 1 5.600 0v1.700" fill="none" stroke="#e2b04a" stroke-width="1.700"/><rect x="0.500" y="5" width="9" height="7" rx="1" fill="#e2b04a"/></svg>
<svg class="r" style="left:420px;top:366.3px;" width="10" height="12" viewBox="0 0 10 12"><path d="M2.200 5.500V3.800a2.800 2.800 0 0 1 5.600 0v1.700" fill="none" stroke="#e2b04a" stroke-width="1.700"/><rect x="0.500" y="5" width="9" height="7" rx="1" fill="#e2b04a"/></svg>
<svg class="r" style="left:439px;top:366.3px;" width="10" height="12" viewBox="0 0 10 12"><path d="M2.200 5.500V3.800a2.800 2.800 0 0 1 5.600 0v1.700" fill="none" stroke="#e2b04a" stroke-width="1.700"/><rect x="0.500" y="5" width="9" height="7" rx="1" fill="#e2b04a"/></svg>
<div class="r" style="left:416px;top:364px;width:1px;height:20px;background:#e6e6e6;"></div>
<div class="r" style="left:435px;top:364px;width:1px;height:20px;background:#e6e6e6;"></div>
<div class="t" style="left:453.0px;top:365.7px;font-size:12.5px;line-height:16px;color:#333;">S</div>
<div class="r" style="left:460px;top:361px;width:166px;height:23px;background:#0b6cd4;"></div>
<div class="t" style="left:461.0px;top:365.7px;font-size:12.5px;line-height:16px;color:#fff;letter-spacing:-0.333px;">User Display Name</div>
<div class="t" style="left:630.0px;top:365.7px;font-size:12.5px;line-height:16px;color:#333;letter-spacing:-0.689px;">S...</div>
<div class="t" style="left:649.0px;top:365.7px;font-size:12.5px;line-height:16px;color:#333;letter-spacing:-0.373px;">Locatio...</div>
<div class="t" style="left:702.0px;top:365.7px;font-size:12.5px;line-height:16px;color:#333;letter-spacing:-0.391px;">Effective Assigned Licens...</div>
<div class="t" style="left:846.0px;top:365.7px;font-size:12.5px;line-height:16px;color:#333;letter-spacing:-0.319px;">Unit Cost...</div>
<div class="t" style="left:907.0px;top:365.7px;font-size:12.5px;line-height:16px;color:#333;letter-spacing:-0.611px;">H...</div>
<div class="t" style="left:930.0px;top:365.7px;font-size:12.5px;line-height:16px;color:#333;letter-spacing:-0.371px;">Source - Assigned Lice...</div>
<div class="r" style="left:647.5px;top:364px;width:1px;height:20px;background:#e6e6e6;"></div>
<div class="r" style="left:700.5px;top:364px;width:1px;height:20px;background:#e6e6e6;"></div>
<div class="r" style="left:844px;top:364px;width:1px;height:20px;background:#e6e6e6;"></div>
<div class="r" style="left:905.5px;top:364px;width:1px;height:20px;background:#e6e6e6;"></div>
<div class="r" style="left:928px;top:364px;width:1px;height:20px;background:#e6e6e6;"></div>
<div class="r" style="left:627px;top:384px;width:20.5px;height:26px;background:#d9d9d9;"></div>
<div class="r" style="left:700.5px;top:384px;width:359.5px;height:26px;background:#d9d9d9;"></div>
<div class="r" style="left:397.5px;top:409px;width:662.5px;height:1px;background:rgba(255,255,255,.3);"></div>
<div class="r" style="left:397.5px;top:409px;width:229.5px;height:1px;background:#f3f3f3;"></div>
<svg class="r" style="left:417.5px;top:388.7px;" width="16" height="16" viewBox="0 0 16 16"><g stroke="#cfe6f7" stroke-width="1.800" stroke-linejoin="round"><circle cx="8" cy="5" r="4.300" fill="#2b7ec3"/><path d="M1.600 14.300q0-3.300 2.700-3.900L8 12l3.700-1.600q2.700.6 2.700 3.900z" fill="#2b7ec3"/></g><circle cx="8" cy="5" r="4.150" fill="#2b7ec3"/><path d="M1.600 14.300q0-3.300 2.700-3.900L8 12l3.700-1.600q2.700.6 2.700 3.900z" fill="#2b7ec3"/></svg>
<div class="t" style="left:461.0px;top:390.7px;font-size:12.5px;line-height:16px;color:#222;letter-spacing:-0.063px;">Gerhart Moller</div>
<div class="t" style="left:648.5px;top:390.7px;font-size:12.5px;line-height:16px;color:#222;letter-spacing:-1.433px;">US</div>
<div class="t" style="left:702.0px;top:390.7px;font-size:12.5px;line-height:16px;color:#9a9a9a;letter-spacing:-0.028px;">-- Unlicensed --</div>
<div class="r" style="left:627px;top:410px;width:20.5px;height:27px;background:#d9d9d9;"></div>
<div class="r" style="left:647.5px;top:410px;width:53px;height:27px;background:#d9d9d9;"></div>
<div class="r" style="left:700.5px;top:410px;width:359.5px;height:27px;background:#d9d9d9;"></div>
<div class="r" style="left:397.5px;top:436px;width:662.5px;height:1px;background:rgba(255,255,255,.3);"></div>
<div class="r" style="left:397.5px;top:436px;width:229.5px;height:1px;background:#f3f3f3;"></div>
<svg class="r" style="left:418.5px;top:415.6px;" width="16" height="16" viewBox="0 0 16 16"><path d="M3.500 1.500L6 3.500 8.500 1.500" fill="none" stroke="#2b7ec3" stroke-width="1.400"/><circle cx="6" cy="1.600" r="1.100" fill="#2b7ec3"/><rect x="0.600" y="3.600" width="10.800" height="10.800" rx="1" fill="#2b7ec3" stroke="#cfe6f7" stroke-width="0.800"/><circle cx="6" cy="7.400" r="1.900" fill="#fff"/><path d="M2.600 12.700q0-2.700 3.400-2.700t3.400 2.700z" fill="#fff"/><rect x="14.300" y="7" width="0.800" height="3" fill="#aab"/></svg>
<div class="t" style="left:461.0px;top:417.3px;font-size:12.5px;line-height:16px;color:#222;letter-spacing:-0.224px;">fawocoj474</div>
<div class="t" style="left:702.0px;top:417.3px;font-size:12.5px;line-height:16px;color:#9a9a9a;letter-spacing:-0.028px;">-- Unlicensed --</div>
<div class="r" style="left:627px;top:437px;width:20.5px;height:27px;background:#d9d9d9;"></div>
<div class="r" style="left:647.5px;top:437px;width:53px;height:27px;background:#d9d9d9;"></div>
<div class="r" style="left:700.5px;top:437px;width:359.5px;height:27px;background:#d9d9d9;"></div>
<div class="r" style="left:397.5px;top:463px;width:662.5px;height:1px;background:rgba(255,255,255,.3);"></div>
<div class="r" style="left:397.5px;top:463px;width:229.5px;height:1px;background:#f3f3f3;"></div>
<svg class="r" style="left:417.5px;top:441.9px;" width="16" height="16" viewBox="0 0 16 16"><g stroke="#cfe6f7" stroke-width="1.800" stroke-linejoin="round"><circle cx="8" cy="5" r="4.300" fill="#2b7ec3"/><path d="M1.600 14.300q0-3.300 2.700-3.900L8 12l3.700-1.600q2.700.6 2.700 3.900z" fill="#2b7ec3"/></g><circle cx="8" cy="5" r="4.150" fill="#2b7ec3"/><path d="M1.600 14.300q0-3.300 2.700-3.900L8 12l3.700-1.600q2.700.6 2.700 3.900z" fill="#2b7ec3"/></svg>
<div class="t" style="left:461.0px;top:443.9px;font-size:12.5px;line-height:16px;color:#222;letter-spacing:-0.404px;">Conf Room Stevens</div>
<div class="t" style="left:702.0px;top:443.9px;font-size:12.5px;line-height:16px;color:#9a9a9a;letter-spacing:-0.028px;">-- Unlicensed --</div>
<div class="r" style="left:627px;top:464px;width:20.5px;height:26px;background:#d9d9d9;"></div>
<div class="r" style="left:647.5px;top:464px;width:53px;height:26px;background:#d9d9d9;"></div>
<div class="r" style="left:700.5px;top:464px;width:359.5px;height:26px;background:#d9d9d9;"></div>
<div class="r" style="left:397.5px;top:489px;width:662.5px;height:1px;background:rgba(255,255,255,.3);"></div>
<div class="r" style="left:397.5px;top:489px;width:229.5px;height:1px;background:#f3f3f3;"></div>
<svg class="r" style="left:418.5px;top:468.8px;" width="16" height="16" viewBox="0 0 16 16"><path d="M3.500 1.500L6 3.500 8.500 1.500" fill="none" stroke="#2b7ec3" stroke-width="1.400"/><circle cx="6" cy="1.600" r="1.100" fill="#2b7ec3"/><rect x="0.600" y="3.600" width="10.800" height="10.800" rx="1" fill="#2b7ec3" stroke="#cfe6f7" stroke-width="0.800"/><circle cx="6" cy="7.400" r="1.900" fill="#fff"/><path d="M2.600 12.700q0-2.700 3.400-2.700t3.400 2.700z" fill="#fff"/><rect x="14.300" y="7" width="0.800" height="3" fill="#aab"/></svg>
<div class="t" style="left:461.0px;top:470.5px;font-size:12.5px;line-height:16px;color:#222;letter-spacing:-0.389px;">sobaw93856</div>
<div class="t" style="left:702.0px;top:470.5px;font-size:12.5px;line-height:16px;color:#9a9a9a;letter-spacing:-0.028px;">-- Unlicensed --</div>
<div class="r" style="left:627px;top:490px;width:20.5px;height:27px;background:#d9d9d9;"></div>
<div class="r" style="left:647.5px;top:490px;width:53px;height:27px;background:#d9d9d9;"></div>
<div class="r" style="left:700.5px;top:490px;width:359.5px;height:27px;background:#d9d9d9;"></div>
<div class="r" style="left:397.5px;top:516px;width:662.5px;height:1px;background:rgba(255,255,255,.3);"></div>
<div class="r" style="left:397.5px;top:516px;width:229.5px;height:1px;background:#f3f3f3;"></div>
<svg class="r" style="left:418.5px;top:495.4px;" width="16" height="16" viewBox="0 0 16 16"><path d="M3.500 1.500L6 3.500 8.500 1.500" fill="none" stroke="#2b7ec3" stroke-width="1.400"/><circle cx="6" cy="1.600" r="1.100" fill="#2b7ec3"/><rect x="0.600" y="3.600" width="10.800" height="10.800" rx="1" fill="#2b7ec3" stroke="#cfe6f7" stroke-width="0.800"/><circle cx="6" cy="7.400" r="1.900" fill="#fff"/><path d="M2.600 12.700q0-2.700 3.400-2.700t3.400 2.700z" fill="#fff"/><rect x="14.300" y="7" width="0.800" height="3" fill="#aab"/></svg>
<div class="t" style="left:461.0px;top:497.1px;font-size:12.5px;line-height:16px;color:#222;letter-spacing:-0.482px;">sabad35587</div>
<div class="t" style="left:702.0px;top:497.1px;font-size:12.5px;line-height:16px;color:#9a9a9a;letter-spacing:-0.028px;">-- Unlicensed --</div>
<div class="r" style="left:906px;top:517px;width:22.5px;height:26px;background:#d9d9d9;"></div>
<div class="r" style="left:397.5px;top:542px;width:662.5px;height:1px;background:rgba(255,255,255,.3);"></div>
<div class="r" style="left:397.5px;top:542px;width:229.5px;height:1px;background:#f3f3f3;"></div>
<svg class="r" style="left:399.5px;top:523px;" width="14" height="14" viewBox="0 0 14 14"><circle cx="7" cy="7" r="5.900" fill="#fff" stroke="#8c8c8c" stroke-width="1.300"/><circle cx="7" cy="7" r="2.900" fill="#9a9a9a"/></svg>
<svg class="r" style="left:417.5px;top:521.7px;" width="16" height="16" viewBox="0 0 16 16"><g stroke="#cfe6f7" stroke-width="1.800" stroke-linejoin="round"><circle cx="8" cy="5" r="4.300" fill="#2b7ec3"/><path d="M1.600 14.300q0-3.300 2.700-3.900L8 12l3.700-1.600q2.700.6 2.700 3.900z" fill="#2b7ec3"/></g><circle cx="8" cy="5" r="4.150" fill="#2b7ec3"/><path d="M1.600 14.300q0-3.300 2.700-3.900L8 12l3.700-1.600q2.700.6 2.700 3.900z" fill="#2b7ec3"/></svg>
<div class="t" style="left:461.0px;top:523.7px;font-size:12.5px;line-height:16px;color:#222;letter-spacing:-0.360px;">Adele Vance</div>
<div class="t" style="left:628.5px;top:523.7px;font-size:12.5px;line-height:16px;color:#222;letter-spacing:-0.625px;">PM</div>
<div class="t" style="left:648.5px;top:523.7px;font-size:12.5px;line-height:16px;color:#222;letter-spacing:-1.433px;">US</div>
<div class="t" style="left:702.0px;top:523.7px;font-size:12.5px;line-height:16px;color:#222;letter-spacing:-0.327px;">[2] Microsoft_Teams_Enter</div>
<div class="r" style="left:842.8px;top:528.5px;width:1.1px;height:8.5px;background:#222;"></div>
<div class="t" style="left:846.0px;top:523.7px;font-size:12.5px;line-height:16px;color:#222;letter-spacing:-0.020px;">[2]∅;∅</div>
<div class="t" style="left:930.0px;top:523.7px;font-size:12.5px;line-height:16px;color:#222;letter-spacing:0.053px;">[2] [-Direct-];[-Direct-]</div>
<div class="r" style="left:627px;top:543px;width:20.5px;height:27px;background:#d9d9d9;"></div>
<div class="r" style="left:647.5px;top:543px;width:53px;height:27px;background:#d9d9d9;"></div>
<div class="r" style="left:700.5px;top:543px;width:359.5px;height:27px;background:#d9d9d9;"></div>
<div class="r" style="left:397.5px;top:569px;width:662.5px;height:1px;background:rgba(255,255,255,.3);"></div>
<div class="r" style="left:397.5px;top:569px;width:229.5px;height:1px;background:#f3f3f3;"></div>
<svg class="r" style="left:418.5px;top:548.6px;" width="16" height="16" viewBox="0 0 16 16"><path d="M3.500 1.500L6 3.500 8.500 1.500" fill="none" stroke="#2b7ec3" stroke-width="1.400"/><circle cx="6" cy="1.600" r="1.100" fill="#2b7ec3"/><rect x="0.600" y="3.600" width="10.800" height="10.800" rx="1" fill="#2b7ec3" stroke="#cfe6f7" stroke-width="0.800"/><circle cx="6" cy="7.400" r="1.900" fill="#fff"/><path d="M2.600 12.700q0-2.700 3.400-2.700t3.400 2.700z" fill="#fff"/><rect x="14.300" y="7" width="0.800" height="3" fill="#aab"/></svg>
<div class="t" style="left:461.0px;top:550.3px;font-size:12.5px;line-height:16px;color:#222;letter-spacing:0.171px;">Annatimar1929</div>
<div class="t" style="left:702.0px;top:550.3px;font-size:12.5px;line-height:16px;color:#9a9a9a;letter-spacing:-0.028px;">-- Unlicensed --</div>
<div class="r" style="left:627px;top:570px;width:20.5px;height:27px;background:#d9d9d9;"></div>
<div class="r" style="left:700.5px;top:570px;width:359.5px;height:27px;background:#d9d9d9;"></div>
<div class="r" style="left:397.5px;top:596px;width:662.5px;height:1px;background:rgba(255,255,255,.3);"></div>
<div class="r" style="left:397.5px;top:596px;width:229.5px;height:1px;background:#f3f3f3;"></div>
<svg class="r" style="left:417.5px;top:574.9px;" width="16" height="16" viewBox="0 0 16 16"><g stroke="#cfe6f7" stroke-width="1.800" stroke-linejoin="round"><circle cx="8" cy="5" r="4.300" fill="#2b7ec3"/><path d="M1.600 14.300q0-3.300 2.700-3.900L8 12l3.700-1.600q2.700.6 2.700 3.900z" fill="#2b7ec3"/></g><circle cx="8" cy="5" r="4.150" fill="#2b7ec3"/><path d="M1.600 14.300q0-3.300 2.700-3.900L8 12l3.700-1.600q2.700.6 2.700 3.900z" fill="#2b7ec3"/></svg>
<div class="t" style="left:461.0px;top:576.9px;font-size:12.5px;line-height:16px;color:#222;letter-spacing:-0.596px;">Raul Razo</div>
<div class="t" style="left:648.5px;top:576.9px;font-size:12.5px;line-height:16px;color:#222;letter-spacing:-1.433px;">US</div>
<div class="t" style="left:702.0px;top:576.9px;font-size:12.5px;line-height:16px;color:#9a9a9a;letter-spacing:-0.028px;">-- Unlicensed --</div>
<div class="r" style="left:627px;top:597px;width:20.5px;height:26px;background:#d9d9d9;"></div>
<div class="r" style="left:647.5px;top:597px;width:53px;height:26px;background:#d9d9d9;"></div>
<div class="r" style="left:700.5px;top:597px;width:359.5px;height:26px;background:#d9d9d9;"></div>
<div class="r" style="left:397.5px;top:622px;width:662.5px;height:1px;background:rgba(255,255,255,.3);"></div>
<div class="r" style="left:397.5px;top:622px;width:229.5px;height:1px;background:#f3f3f3;"></div>
<svg class="r" style="left:418.5px;top:601.8px;" width="16" height="16" viewBox="0 0 16 16"><path d="M3.500 1.500L6 3.500 8.500 1.500" fill="none" stroke="#2b7ec3" stroke-width="1.400"/><circle cx="6" cy="1.600" r="1.100" fill="#2b7ec3"/><rect x="0.600" y="3.600" width="10.800" height="10.800" rx="1" fill="#2b7ec3" stroke="#cfe6f7" stroke-width="0.800"/><circle cx="6" cy="7.400" r="1.900" fill="#fff"/><path d="M2.600 12.700q0-2.700 3.400-2.700t3.400 2.700z" fill="#fff"/><rect x="14.300" y="7" width="0.800" height="3" fill="#aab"/></svg>
<div class="t" style="left:461.0px;top:603.5px;font-size:12.5px;line-height:16px;color:#222;letter-spacing:-0.433px;">hoserax974</div>
<div class="t" style="left:702.0px;top:603.5px;font-size:12.5px;line-height:16px;color:#9a9a9a;letter-spacing:-0.028px;">-- Unlicensed --</div>
<div class="r" style="left:906px;top:623px;width:22.5px;height:27px;background:#d9d9d9;"></div>
<div class="r" style="left:397.5px;top:649px;width:662.5px;height:1px;background:rgba(255,255,255,.3);"></div>
<div class="r" style="left:397.5px;top:649px;width:229.5px;height:1px;background:#f3f3f3;"></div>
<svg class="r" style="left:399.5px;top:629.4px;" width="14" height="14" viewBox="0 0 14 14"><circle cx="7" cy="7" r="5.900" fill="#fff" stroke="#8c8c8c" stroke-width="1.300"/><circle cx="7" cy="7" r="2.900" fill="#9a9a9a"/></svg>
<svg class="r" style="left:417.5px;top:628.1px;" width="16" height="16" viewBox="0 0 16 16"><g stroke="#cfe6f7" stroke-width="1.800" stroke-linejoin="round"><circle cx="8" cy="5" r="4.300" fill="#2b7ec3"/><path d="M1.600 14.300q0-3.300 2.700-3.900L8 12l3.700-1.600q2.700.6 2.700 3.900z" fill="#2b7ec3"/></g><circle cx="8" cy="5" r="4.150" fill="#2b7ec3"/><path d="M1.600 14.300q0-3.300 2.700-3.900L8 12l3.700-1.600q2.700.6 2.700 3.900z" fill="#2b7ec3"/></svg>
<div class="t" style="left:461.0px;top:630.1px;font-size:12.5px;line-height:16px;color:#222;letter-spacing:-0.337px;">Debra Berger</div>
<div class="t" style="left:628.5px;top:630.1px;font-size:12.5px;line-height:16px;color:#222;letter-spacing:-0.625px;">PM</div>
<div class="t" style="left:648.5px;top:630.1px;font-size:12.5px;line-height:16px;color:#222;letter-spacing:-1.433px;">US</div>
<div class="t" style="left:702.0px;top:630.1px;font-size:12.5px;line-height:16px;color:#222;letter-spacing:-0.327px;">[2] Microsoft_Teams_Enter</div>
<div class="r" style="left:842.8px;top:634.9px;width:1.1px;height:8.5px;background:#222;"></div>
<div class="t" style="left:846.0px;top:630.1px;font-size:12.5px;line-height:16px;color:#222;letter-spacing:-0.020px;">[2]∅;∅</div>
<div class="t" style="left:930.0px;top:630.1px;font-size:12.5px;line-height:16px;color:#222;letter-spacing:0.053px;">[2] [-Direct-];[-Direct-]</div>
<div class="r" style="left:700.5px;top:650px;width:359.5px;height:26px;background:#d9d9d9;"></div>
<div class="r" style="left:397.5px;top:675px;width:662.5px;height:1px;background:rgba(255,255,255,.3);"></div>
<div class="r" style="left:397.5px;top:675px;width:229.5px;height:1px;background:#f3f3f3;"></div>
<svg class="r" style="left:417.5px;top:654.7px;" width="16" height="16" viewBox="0 0 16 16"><g stroke="#cfe6f7" stroke-width="1.800" stroke-linejoin="round"><circle cx="8" cy="5" r="4.300" fill="#2b7ec3"/><path d="M1.600 14.300q0-3.300 2.700-3.900L8 12l3.700-1.600q2.700.6 2.700 3.900z" fill="#2b7ec3"/></g><circle cx="8" cy="5" r="4.150" fill="#2b7ec3"/><path d="M1.600 14.300q0-3.300 2.700-3.900L8 12l3.700-1.600q2.700.6 2.700 3.900z" fill="#2b7ec3"/></svg>
<div class="t" style="left:461.0px;top:656.7px;font-size:12.5px;line-height:16px;color:#222;letter-spacing:-0.427px;">Joni Sherman</div>
<div class="t" style="left:628.5px;top:656.7px;font-size:12.5px;line-height:16px;color:#222;letter-spacing:-0.625px;">PM</div>
<div class="t" style="left:648.5px;top:656.7px;font-size:12.5px;line-height:16px;color:#222;letter-spacing:-1.433px;">US</div>
<div class="t" style="left:702.0px;top:656.7px;font-size:12.5px;line-height:16px;color:#9a9a9a;letter-spacing:-0.028px;">-- Unlicensed --</div>
<div class="r" style="left:397.5px;top:676px;width:662.5px;height:27px;background:#0b6cd4;"></div>
<div class="r" style="left:906px;top:676px;width:22.5px;height:27px;background:#5c9ce2;"></div>
<div class="r" style="left:399px;top:681px;width:15.5px;height:16px;background:#f6f6f6;"></div>
<div class="r" style="left:416.5px;top:676px;width:1px;height:27px;background:#3f8be0;"></div>
<div class="r" style="left:435.5px;top:676px;width:1px;height:27px;background:#3f8be0;"></div>
<svg class="r" style="left:399.5px;top:682.6px;" width="14" height="14" viewBox="0 0 14 14"><circle cx="7" cy="7" r="5.900" fill="#fff" stroke="#8c8c8c" stroke-width="1.300"/><circle cx="7" cy="7" r="2.900" fill="#9a9a9a"/></svg>
<svg class="r" style="left:417.5px;top:681.3px;" width="16" height="16" viewBox="0 0 16 16"><g stroke="#e8f2fc" stroke-width="1.800" stroke-linejoin="round"><circle cx="8" cy="5" r="4.300" fill="#2e7cc6"/><path d="M1.600 14.300q0-3.300 2.700-3.900L8 12l3.700-1.600q2.700.6 2.700 3.900z" fill="#2e7cc6"/></g><circle cx="8" cy="5" r="4.150" fill="#2e7cc6"/><path d="M1.600 14.300q0-3.300 2.700-3.900L8 12l3.700-1.600q2.700.6 2.700 3.900z" fill="#2e7cc6"/></svg>
<div class="t" style="left:461.0px;top:683.3px;font-size:12.5px;line-height:16px;color:#fff;letter-spacing:-0.070px;">Nestor Wilke</div>
<div class="t" style="left:628.5px;top:683.3px;font-size:12.5px;line-height:16px;color:#fff;letter-spacing:-0.625px;">PM</div>
<div class="t" style="left:648.5px;top:683.3px;font-size:12.5px;line-height:16px;color:#fff;letter-spacing:-1.433px;">US</div>
<div class="t" style="left:702.0px;top:683.3px;font-size:12.5px;line-height:16px;color:#fff;letter-spacing:-0.327px;">[2] Microsoft_Teams_Enter</div>
<div class="r" style="left:842.8px;top:688.1px;width:1.1px;height:8.5px;background:#fff;"></div>
<div class="t" style="left:846.0px;top:683.3px;font-size:12.5px;line-height:16px;color:#fff;letter-spacing:-0.020px;">[2]∅;∅</div>
<div class="t" style="left:930.0px;top:683.3px;font-size:12.5px;line-height:16px;color:#fff;letter-spacing:0.053px;">[2] [-Direct-];[-Direct-]</div>
<div class="r" style="left:906px;top:703px;width:22.5px;height:27px;background:#d9d9d9;"></div>
<div class="r" style="left:397.5px;top:729px;width:662.5px;height:1px;background:rgba(255,255,255,.3);"></div>
<div class="r" style="left:397.5px;top:729px;width:229.5px;height:1px;background:#f3f3f3;"></div>
<svg class="r" style="left:399.5px;top:709.2px;" width="14" height="14" viewBox="0 0 14 14"><circle cx="7" cy="7" r="5.900" fill="#fff" stroke="#8c8c8c" stroke-width="1.300"/><circle cx="7" cy="7" r="2.900" fill="#9a9a9a"/></svg>
<svg class="r" style="left:417.5px;top:707.9px;" width="16" height="16" viewBox="0 0 16 16"><g stroke="#cfe6f7" stroke-width="1.800" stroke-linejoin="round"><circle cx="8" cy="5" r="4.300" fill="#2b7ec3"/><path d="M1.600 14.300q0-3.300 2.700-3.900L8 12l3.700-1.600q2.700.6 2.700 3.900z" fill="#2b7ec3"/></g><circle cx="8" cy="5" r="4.150" fill="#2b7ec3"/><path d="M1.600 14.300q0-3.300 2.700-3.900L8 12l3.700-1.600q2.700.6 2.700 3.900z" fill="#2b7ec3"/></svg>
<div class="t" style="left:461.0px;top:709.9px;font-size:12.5px;line-height:16px;color:#222;letter-spacing:-0.110px;">Alex Wilber</div>
<div class="t" style="left:628.5px;top:709.9px;font-size:12.5px;line-height:16px;color:#222;letter-spacing:-0.625px;">AM</div>
<div class="t" style="left:648.5px;top:709.9px;font-size:12.5px;line-height:16px;color:#222;letter-spacing:-1.433px;">US</div>
<div class="t" style="left:702.0px;top:709.9px;font-size:12.5px;line-height:16px;color:#222;letter-spacing:-0.327px;">[2] Microsoft_Teams_Enter</div>
<div class="r" style="left:842.8px;top:714.7px;width:1.1px;height:8.5px;background:#222;"></div>
<div class="t" style="left:846.0px;top:709.9px;font-size:12.5px;line-height:16px;color:#222;letter-spacing:-0.020px;">[2]∅;∅</div>
<div class="t" style="left:930.0px;top:709.9px;font-size:12.5px;line-height:16px;color:#222;letter-spacing:0.053px;">[2] [-Direct-];[-Direct-]</div>
<div class="r" style="left:700.5px;top:730px;width:359.5px;height:26px;background:#d9d9d9;"></div>
<div class="r" style="left:397.5px;top:755px;width:662.5px;height:1px;background:rgba(255,255,255,.3);"></div>
<div class="r" style="left:397.5px;top:755px;width:229.5px;height:1px;background:#f3f3f3;"></div>
<svg class="r" style="left:417.5px;top:734.5px;" width="16" height="16" viewBox="0 0 16 16"><g stroke="#cfe6f7" stroke-width="1.800" stroke-linejoin="round"><circle cx="8" cy="5" r="4.300" fill="#2b7ec3"/><path d="M1.600 14.300q0-3.300 2.700-3.900L8 12l3.700-1.600q2.700.6 2.700 3.900z" fill="#2b7ec3"/></g><circle cx="8" cy="5" r="4.150" fill="#2b7ec3"/><path d="M1.600 14.300q0-3.300 2.700-3.900L8 12l3.700-1.600q2.700.6 2.700 3.900z" fill="#2b7ec3"/></svg>
<div class="t" style="left:461.0px;top:736.5px;font-size:12.5px;line-height:16px;color:#222;letter-spacing:-0.416px;">Irvin Sayers</div>
<div class="t" style="left:628.5px;top:736.5px;font-size:12.5px;line-height:16px;color:#222;letter-spacing:-0.625px;">PM</div>
<div class="t" style="left:648.5px;top:736.5px;font-size:12.5px;line-height:16px;color:#222;letter-spacing:-1.433px;">US</div>
<div class="t" style="left:702.0px;top:736.5px;font-size:12.5px;line-height:16px;color:#9a9a9a;letter-spacing:-0.028px;">-- Unlicensed --</div>
<div class="r" style="left:906px;top:756px;width:22.5px;height:27px;background:#d9d9d9;"></div>
<div class="r" style="left:397.5px;top:782px;width:662.5px;height:1px;background:rgba(255,255,255,.3);"></div>
<div class="r" style="left:397.5px;top:782px;width:229.5px;height:1px;background:#f3f3f3;"></div>
<svg class="r" style="left:399.5px;top:762.4px;" width="14" height="14" viewBox="0 0 14 14"><circle cx="7" cy="7" r="5.900" fill="#fff" stroke="#8c8c8c" stroke-width="1.300"/><circle cx="7" cy="7" r="2.900" fill="#9a9a9a"/></svg>
<svg class="r" style="left:417.5px;top:761.1px;" width="16" height="16" viewBox="0 0 16 16"><g stroke="#cfe6f7" stroke-width="1.800" stroke-linejoin="round"><circle cx="8" cy="5" r="4.300" fill="#2b7ec3"/><path d="M1.600 14.300q0-3.300 2.700-3.900L8 12l3.700-1.600q2.700.6 2.700 3.900z" fill="#2b7ec3"/></g><circle cx="8" cy="5" r="4.150" fill="#2b7ec3"/><path d="M1.600 14.300q0-3.300 2.700-3.900L8 12l3.700-1.600q2.700.6 2.700 3.900z" fill="#2b7ec3"/></svg>
<div class="t" style="left:461.0px;top:763.1px;font-size:12.5px;line-height:16px;color:#222;letter-spacing:-0.238px;">Christie Cline</div>
<div class="t" style="left:628.5px;top:763.1px;font-size:12.5px;line-height:16px;color:#222;letter-spacing:-0.625px;">PM</div>
<div class="t" style="left:648.5px;top:763.1px;font-size:12.5px;line-height:16px;color:#222;letter-spacing:-1.433px;">US</div>
<div class="t" style="left:702.0px;top:763.1px;font-size:12.5px;line-height:16px;color:#222;letter-spacing:-0.327px;">[2] Microsoft_Teams_Enter</div>
<div class="r" style="left:842.8px;top:767.9px;width:1.1px;height:8.5px;background:#222;"></div>
<div class="t" style="left:846.0px;top:763.1px;font-size:12.5px;line-height:16px;color:#222;letter-spacing:-0.020px;">[2]∅;∅</div>
<div class="t" style="left:930.0px;top:763.1px;font-size:12.5px;line-height:16px;color:#222;letter-spacing:0.053px;">[2] [-Direct-];[-Direct-]</div>
<div class="r" style="left:906px;top:783px;width:22.5px;height:26px;background:#d9d9d9;"></div>
<div class="r" style="left:397.5px;top:808px;width:662.5px;height:1px;background:rgba(255,255,255,.3);"></div>
<div class="r" style="left:397.5px;top:808px;width:229.5px;height:1px;background:#f3f3f3;"></div>
<svg class="r" style="left:399.5px;top:789px;" width="14" height="14" viewBox="0 0 14 14"><circle cx="7" cy="7" r="5.900" fill="#fff" stroke="#8c8c8c" stroke-width="1.300"/><circle cx="7" cy="7" r="2.900" fill="#9a9a9a"/></svg>
<svg class="r" style="left:417.5px;top:787.7px;" width="16" height="16" viewBox="0 0 16 16"><g stroke="#cfe6f7" stroke-width="1.800" stroke-linejoin="round"><circle cx="8" cy="5" r="4.300" fill="#2b7ec3"/><path d="M1.600 14.300q0-3.300 2.700-3.900L8 12l3.700-1.600q2.700.6 2.700 3.900z" fill="#2b7ec3"/></g><circle cx="8" cy="5" r="4.150" fill="#2b7ec3"/><path d="M1.600 14.300q0-3.300 2.700-3.900L8 12l3.700-1.600q2.700.6 2.700 3.900z" fill="#2b7ec3"/></svg>
<div class="t" style="left:461.0px;top:789.7px;font-size:12.5px;line-height:16px;color:#222;letter-spacing:-0.379px;">Lynne Robbins</div>
<div class="t" style="left:628.5px;top:789.7px;font-size:12.5px;line-height:16px;color:#222;letter-spacing:-0.625px;">PM</div>
<div class="t" style="left:648.5px;top:789.7px;font-size:12.5px;line-height:16px;color:#222;letter-spacing:-1.433px;">US</div>
<div class="t" style="left:702.0px;top:789.7px;font-size:12.5px;line-height:16px;color:#222;letter-spacing:-0.327px;">[2] Microsoft_Teams_Enter</div>
<div class="r" style="left:842.8px;top:794.5px;width:1.1px;height:8.5px;background:#222;"></div>
<div class="t" style="left:846.0px;top:789.7px;font-size:12.5px;line-height:16px;color:#222;letter-spacing:-0.020px;">[2]∅;∅</div>
<div class="t" style="left:930.0px;top:789.7px;font-size:12.5px;line-height:16px;color:#222;letter-spacing:0.053px;">[2] [-Direct-];[-Direct-]</div>
<div class="r" style="left:906px;top:809px;width:22.5px;height:27px;background:#d9d9d9;"></div>
<div class="r" style="left:397.5px;top:835px;width:662.5px;height:1px;background:rgba(255,255,255,.3);"></div>
<div class="r" style="left:397.5px;top:835px;width:229.5px;height:1px;background:#f3f3f3;"></div>
<svg class="r" style="left:399.5px;top:815.6px;" width="14" height="14" viewBox="0 0 14 14"><circle cx="7" cy="7" r="5.900" fill="#fff" stroke="#8c8c8c" stroke-width="1.300"/><circle cx="7" cy="7" r="2.900" fill="#9a9a9a"/></svg>
<svg class="r" style="left:417.5px;top:814.3px;" width="16" height="16" viewBox="0 0 16 16"><g stroke="#cfe6f7" stroke-width="1.800" stroke-linejoin="round"><circle cx="8" cy="5" r="4.300" fill="#2b7ec3"/><path d="M1.600 14.300q0-3.300 2.700-3.900L8 12l3.700-1.600q2.700.6 2.700 3.900z" fill="#2b7ec3"/></g><circle cx="8" cy="5" r="4.150" fill="#2b7ec3"/><path d="M1.600 14.300q0-3.300 2.700-3.900L8 12l3.700-1.600q2.700.6 2.700 3.900z" fill="#2b7ec3"/></svg>
<div class="t" style="left:461.0px;top:816.3px;font-size:12.5px;line-height:16px;color:#222;letter-spacing:-0.163px;">Miriam Graham</div>
<div class="t" style="left:628.5px;top:816.3px;font-size:12.5px;line-height:16px;color:#222;letter-spacing:-0.625px;">PM</div>
<div class="t" style="left:648.5px;top:816.3px;font-size:12.5px;line-height:16px;color:#222;letter-spacing:-1.433px;">US</div>
<div class="t" style="left:702.0px;top:816.3px;font-size:12.5px;line-height:16px;color:#222;letter-spacing:-0.327px;">[2] Microsoft_Teams_Enter</div>
<div class="r" style="left:842.8px;top:821.1px;width:1.1px;height:8.5px;background:#222;"></div>
<div class="t" style="left:846.0px;top:816.3px;font-size:12.5px;line-height:16px;color:#222;letter-spacing:-0.020px;">[2]∅;∅</div>
<div class="t" style="left:930.0px;top:816.3px;font-size:12.5px;line-height:16px;color:#222;letter-spacing:0.053px;">[2] [-Direct-];[-Direct-]</div>
<div class="r" style="left:906px;top:836px;width:22.5px;height:27px;background:#d9d9d9;"></div>
<div class="r" style="left:397.5px;top:862px;width:662.5px;height:1px;background:rgba(255,255,255,.3);"></div>
<div class="r" style="left:397.5px;top:862px;width:229.5px;height:1px;background:#f3f3f3;"></div>
<svg class="r" style="left:399.5px;top:842.2px;" width="14" height="14" viewBox="0 0 14 14"><circle cx="7" cy="7" r="5.900" fill="#fff" stroke="#8c8c8c" stroke-width="1.300"/><circle cx="7" cy="7" r="2.900" fill="#9a9a9a"/></svg>
<svg class="r" style="left:417.5px;top:840.9px;" width="16" height="16" viewBox="0 0 16 16"><g stroke="#cfe6f7" stroke-width="1.800" stroke-linejoin="round"><circle cx="8" cy="5" r="4.300" fill="#2b7ec3"/><path d="M1.600 14.300q0-3.300 2.700-3.900L8 12l3.700-1.600q2.700.6 2.700 3.900z" fill="#2b7ec3"/></g><circle cx="8" cy="5" r="4.150" fill="#2b7ec3"/><path d="M1.600 14.300q0-3.300 2.700-3.900L8 12l3.700-1.600q2.700.6 2.700 3.900z" fill="#2b7ec3"/></svg>
<div class="t" style="left:461.0px;top:842.9px;font-size:12.5px;line-height:16px;color:#222;letter-spacing:-0.368px;">Pradeep Gupta</div>
<div class="t" style="left:628.5px;top:842.9px;font-size:12.5px;line-height:16px;color:#222;letter-spacing:-0.625px;">AM</div>
<div class="t" style="left:648.5px;top:842.9px;font-size:12.5px;line-height:16px;color:#222;letter-spacing:-1.433px;">US</div>
<div class="t" style="left:702.0px;top:842.9px;font-size:12.5px;line-height:16px;color:#222;letter-spacing:-0.037px;">[3] Microsoft Power Auton</div>
<div class="t" style="left:846.0px;top:842.9px;font-size:12.5px;line-height:16px;color:#222;letter-spacing:0.067px;">[3]∅;∅;∅</div>
<div class="r" style="left:930px;top:836px;width:130px;height:26px;overflow:hidden"><div class="t" style="left:0.0px;top:6.9px;font-size:12.5px;line-height:16px;color:#222;letter-spacing:0.276px;">[3] [-Direct-];[-Direct-];[-Direct-]</div></div>
<div class="r" style="left:906px;top:863px;width:22.5px;height:26px;background:#d9d9d9;"></div>
<div class="r" style="left:397.5px;top:888px;width:662.5px;height:1px;background:rgba(255,255,255,.3);"></div>
<div class="r" style="left:397.5px;top:888px;width:229.5px;height:1px;background:#f3f3f3;"></div>
<svg class="r" style="left:399.5px;top:868.8px;" width="14" height="14" viewBox="0 0 14 14"><circle cx="7" cy="7" r="5.900" fill="#fff" stroke="#8c8c8c" stroke-width="1.300"/><circle cx="7" cy="7" r="2.900" fill="#9a9a9a"/></svg>
<svg class="r" style="left:417.5px;top:867.5px;" width="16" height="16" viewBox="0 0 16 16"><g stroke="#cfe6f7" stroke-width="1.800" stroke-linejoin="round"><circle cx="8" cy="5" r="4.300" fill="#2b7ec3"/><path d="M1.600 14.300q0-3.300 2.700-3.900L8 12l3.700-1.600q2.700.6 2.700 3.900z" fill="#2b7ec3"/></g><circle cx="8" cy="5" r="4.150" fill="#2b7ec3"/><path d="M1.600 14.300q0-3.300 2.700-3.900L8 12l3.700-1.600q2.700.6 2.700 3.900z" fill="#2b7ec3"/></svg>
<div class="t" style="left:461.0px;top:869.5px;font-size:12.5px;line-height:16px;color:#222;letter-spacing:-0.350px;">Patti Fernandez</div>
<div class="t" style="left:628.5px;top:869.5px;font-size:12.5px;line-height:16px;color:#222;letter-spacing:-0.625px;">PM</div>
<div class="t" style="left:648.5px;top:869.5px;font-size:12.5px;line-height:16px;color:#222;letter-spacing:-1.433px;">US</div>
<div class="t" style="left:702.0px;top:869.5px;font-size:12.5px;line-height:16px;color:#222;letter-spacing:-0.327px;">[2] Microsoft_Teams_Enter</div>
<div class="r" style="left:842.8px;top:874.3px;width:1.1px;height:8.5px;background:#222;"></div>
<div class="t" style="left:846.0px;top:869.5px;font-size:12.5px;line-height:16px;color:#222;letter-spacing:-0.020px;">[2]∅;∅</div>
<div class="t" style="left:930.0px;top:869.5px;font-size:12.5px;line-height:16px;color:#222;letter-spacing:0.053px;">[2] [-Direct-];[-Direct-]</div>
<div class="r" style="left:906px;top:889px;width:22.5px;height:27px;background:#d9d9d9;"></div>
<div class="r" style="left:397.5px;top:915px;width:662.5px;height:1px;background:rgba(255,255,255,.3);"></div>
<div class="r" style="left:397.5px;top:915px;width:229.5px;height:1px;background:#f3f3f3;"></div>
<svg class="r" style="left:399.5px;top:895.4px;" width="14" height="14" viewBox="0 0 14 14"><circle cx="7" cy="7" r="5.900" fill="#fff" stroke="#8c8c8c" stroke-width="1.300"/><circle cx="7" cy="7" r="2.900" fill="#9a9a9a"/></svg>
<svg class="r" style="left:417.5px;top:894.1px;" width="16" height="16" viewBox="0 0 16 16"><g stroke="#cfe6f7" stroke-width="1.800" stroke-linejoin="round"><circle cx="8" cy="5" r="4.300" fill="#2b7ec3"/><path d="M1.600 14.300q0-3.300 2.700-3.900L8 12l3.700-1.600q2.700.6 2.700 3.900z" fill="#2b7ec3"/></g><circle cx="8" cy="5" r="4.150" fill="#2b7ec3"/><path d="M1.600 14.300q0-3.300 2.700-3.900L8 12l3.700-1.600q2.700.6 2.700 3.900z" fill="#2b7ec3"/></svg>
<div class="t" style="left:461.0px;top:896.1px;font-size:12.5px;line-height:16px;color:#222;letter-spacing:-0.476px;">Johanna Lorenz</div>
<div class="t" style="left:628.5px;top:896.1px;font-size:12.5px;line-height:16px;color:#222;letter-spacing:-0.625px;">PM</div>
<div class="t" style="left:648.5px;top:896.1px;font-size:12.5px;line-height:16px;color:#222;letter-spacing:-1.433px;">US</div>
<div class="t" style="left:702.0px;top:896.1px;font-size:12.5px;line-height:16px;color:#222;letter-spacing:-0.327px;">[2] Microsoft_Teams_Enter</div>
<div class="r" style="left:842.8px;top:900.9px;width:1.1px;height:8.5px;background:#222;"></div>
<div class="t" style="left:846.0px;top:896.1px;font-size:12.5px;line-height:16px;color:#222;letter-spacing:-0.020px;">[2]∅;∅</div>
<div class="t" style="left:930.0px;top:896.1px;font-size:12.5px;line-height:16px;color:#222;letter-spacing:0.053px;">[2] [-Direct-];[-Direct-]</div>
<div class="r" style="left:906px;top:916px;width:22.5px;height:26px;background:#d9d9d9;"></div>
<div class="r" style="left:397.5px;top:941px;width:662.5px;height:1px;background:rgba(255,255,255,.3);"></div>
<div class="r" style="left:397.5px;top:941px;width:229.5px;height:1px;background:#f3f3f3;"></div>
<svg class="r" style="left:399.5px;top:922px;" width="14" height="14" viewBox="0 0 14 14"><circle cx="7" cy="7" r="5.900" fill="#fff" stroke="#8c8c8c" stroke-width="1.300"/><circle cx="7" cy="7" r="2.900" fill="#9a9a9a"/></svg>
<svg class="r" style="left:417.5px;top:920.7px;" width="16" height="16" viewBox="0 0 16 16"><g stroke="#cfe6f7" stroke-width="1.800" stroke-linejoin="round"><circle cx="8" cy="5" r="4.300" fill="#2b7ec3"/><path d="M1.600 14.300q0-3.300 2.700-3.900L8 12l3.700-1.600q2.700.6 2.700 3.900z" fill="#2b7ec3"/></g><circle cx="8" cy="5" r="4.150" fill="#2b7ec3"/><path d="M1.600 14.300q0-3.300 2.700-3.900L8 12l3.700-1.600q2.700.6 2.700 3.900z" fill="#2b7ec3"/></svg>
<div class="t" style="left:461.0px;top:922.7px;font-size:12.5px;line-height:16px;color:#222;letter-spacing:-0.168px;">Diego Siciliani</div>
<div class="t" style="left:628.5px;top:922.7px;font-size:12.5px;line-height:16px;color:#222;letter-spacing:-0.625px;">PM</div>
<div class="t" style="left:648.5px;top:922.7px;font-size:12.5px;line-height:16px;color:#222;letter-spacing:-1.433px;">US</div>
<div class="t" style="left:702.0px;top:922.7px;font-size:12.5px;line-height:16px;color:#222;letter-spacing:-0.327px;">[2] Microsoft_Teams_Enter</div>
<div class="r" style="left:842.8px;top:927.5px;width:1.1px;height:8.5px;background:#222;"></div>
<div class="t" style="left:846.0px;top:922.7px;font-size:12.5px;line-height:16px;color:#222;letter-spacing:-0.020px;">[2]∅;∅</div>
<div class="t" style="left:930.0px;top:922.7px;font-size:12.5px;line-height:16px;color:#222;letter-spacing:0.053px;">[2] [-Direct-];[-Direct-]</div>
<div class="r" style="left:906px;top:942px;width:22.5px;height:27px;background:#d9d9d9;"></div>
<div class="r" style="left:397.5px;top:968px;width:662.5px;height:1px;background:rgba(255,255,255,.3);"></div>
<div class="r" style="left:397.5px;top:968px;width:229.5px;height:1px;background:#f3f3f3;"></div>
<svg class="r" style="left:399.5px;top:948.6px;" width="14" height="14" viewBox="0 0 14 14"><circle cx="7" cy="7" r="5.900" fill="#fff" stroke="#8c8c8c" stroke-width="1.300"/><circle cx="7" cy="7" r="2.900" fill="#9a9a9a"/></svg>
<svg class="r" style="left:417.5px;top:947.3px;" width="16" height="16" viewBox="0 0 16 16"><g stroke="#cfe6f7" stroke-width="1.800" stroke-linejoin="round"><circle cx="8" cy="5" r="4.300" fill="#2b7ec3"/><path d="M1.600 14.300q0-3.300 2.700-3.900L8 12l3.700-1.600q2.700.6 2.700 3.900z" fill="#2b7ec3"/></g><circle cx="8" cy="5" r="4.150" fill="#2b7ec3"/><path d="M1.600 14.300q0-3.300 2.700-3.900L8 12l3.700-1.600q2.700.6 2.700 3.900z" fill="#2b7ec3"/></svg>
<div class="t" style="left:461.0px;top:949.3px;font-size:12.5px;line-height:16px;color:#222;letter-spacing:-0.366px;">Isaiah Langer</div>
<div class="t" style="left:628.5px;top:949.3px;font-size:12.5px;line-height:16px;color:#222;letter-spacing:-0.625px;">PM</div>
<div class="t" style="left:648.5px;top:949.3px;font-size:12.5px;line-height:16px;color:#222;letter-spacing:-1.433px;">US</div>
<div class="t" style="left:702.0px;top:949.3px;font-size:12.5px;line-height:16px;color:#222;letter-spacing:-0.327px;">[2] Microsoft_Teams_Enter</div>
<div class="r" style="left:842.8px;top:954.1px;width:1.1px;height:8.5px;background:#222;"></div>
<div class="t" style="left:846.0px;top:949.3px;font-size:12.5px;line-height:16px;color:#222;letter-spacing:-0.020px;">[2]∅;∅</div>
<div class="t" style="left:930.0px;top:949.3px;font-size:12.5px;line-height:16px;color:#222;letter-spacing:0.053px;">[2] [-Direct-];[-Direct-]</div>
<div class="r" style="left:459px;top:362px;width:2px;height:607px;background:#7aaee4;"></div>
<div class="r" style="left:625px;top:362px;width:2px;height:607px;background:#2a76cf;"></div>
<div class="r" style="left:1060px;top:340.5px;width:16px;height:628.5px;background:#fff;"></div>
<svg class="r" style="left:1064px;top:346.05px;" width="8" height="4.5" viewBox="0 0 8 4.5"><path d="M0 4.5 h8 L4 0 z" fill="#454c68"/></svg>
<div class="r" style="left:1060.5px;top:735px;width:15px;height:234px;background:#8b8b8b;"></div>
<div class="r" style="left:1076px;top:340.5px;width:41px;height:628.5px;background:#935ba7;"></div>
<svg class="r" style="left:1080px;top:347px;" width="32" height="28" viewBox="0 0 32 28"><path d="M7.500 8.800L1.800 14 7.500 19.200" fill="none" stroke="#f6dbfa" stroke-width="1.900"/><rect x="13.400" y="3.300" width="15.600" height="21.200" fill="none" stroke="#f6dbfa" stroke-width="1.500"/><path d="M16 7.500h1.200M18.800 7.500h7.500M16 11.800h1.200M18.800 11.800h6M16 16.200h1.200M18.800 16.200h3.500M16 20.500h1.200M18.800 20.500h7.500" stroke="#f6dbfa" stroke-width="1.300"/></svg>
<div class="r" style="left:1117px;top:340.5px;width:795px;height:628.5px;background:#fff;"></div>
<div class="t" style="left:1121.0px;top:344.2px;font-size:12.5px;line-height:16px;color:#333;letter-spacing:-0.123px;">Column Title</div>
<div class="t" style="left:1226.0px;top:344.2px;font-size:12.5px;line-height:16px;color:#333;letter-spacing:-0.341px;">Is Visible?</div>
<div class="t" style="left:1297.0px;top:344.2px;font-size:12.5px;line-height:16px;color:#333;letter-spacing:-1.111px;">D...</div>
<div class="t" style="left:1316.0px;top:344.2px;font-size:12.5px;line-height:16px;color:#333;letter-spacing:-0.359px;">Grid P...</div>
<div class="t" style="left:1363.0px;top:344.2px;font-size:12.5px;line-height:16px;color:#333;letter-spacing:-0.625px;">Presets</div>
<div class="t" style="left:1423.0px;top:344.2px;font-size:12.5px;line-height:16px;color:#333;letter-spacing:-0.524px;">Is Auto Res...</div>
<div class="t" style="left:1494.0px;top:344.2px;font-size:12.5px;line-height:16px;color:#333;letter-spacing:-0.568px;">Colum...</div>
<div class="t" style="left:1541.0px;top:344.2px;font-size:12.5px;line-height:16px;color:#333;letter-spacing:-0.396px;">Column ...</div>
<div class="t" style="left:1600.0px;top:344.2px;font-size:12.5px;line-height:16px;color:#333;letter-spacing:-0.942px;">So...</div>
<div class="t" style="left:1624.0px;top:344.2px;font-size:12.5px;line-height:16px;color:#333;letter-spacing:-0.185px;">Sort Mode</div>
<div class="t" style="left:1738.0px;top:344.2px;font-size:12.5px;line-height:16px;color:#333;letter-spacing:-0.723px;">Gr...</div>
<div class="t" style="left:1761.0px;top:344.2px;font-size:12.5px;line-height:16px;color:#333;letter-spacing:-0.126px;">Group Sort Mode</div>
<div class="t" style="left:1875.0px;top:344.2px;font-size:12.5px;line-height:16px;color:#333;letter-spacing:-0.523px;">Filte</div>
<div class="r" style="left:1224px;top:342px;width:1px;height:20px;background:#e8e8e8;"></div>
<div class="r" style="left:1296px;top:342px;width:1px;height:20px;background:#e8e8e8;"></div>
<div class="r" style="left:1314.5px;top:342px;width:1px;height:20px;background:#e8e8e8;"></div>
<div class="r" style="left:1362.5px;top:342px;width:1px;height:20px;background:#e8e8e8;"></div>
<div class="r" style="left:1421.5px;top:342px;width:1px;height:20px;background:#e8e8e8;"></div>
<div class="r" style="left:1492px;top:342px;width:1px;height:20px;background:#e8e8e8;"></div>
<div class="r" style="left:1538.5px;top:342px;width:1px;height:20px;background:#e8e8e8;"></div>
<div class="r" style="left:1599px;top:342px;width:1px;height:20px;background:#e8e8e8;"></div>
<div class="r" style="left:1622px;top:342px;width:1px;height:20px;background:#e8e8e8;"></div>
<div class="r" style="left:1736px;top:342px;width:1px;height:20px;background:#e8e8e8;"></div>
<div class="r" style="left:1760px;top:342px;width:1px;height:20px;background:#e8e8e8;"></div>
<div class="r" style="left:1874px;top:342px;width:1px;height:20px;background:#e8e8e8;"></div>
<div class="r" style="left:1119px;top:361.5px;width:778px;height:1px;background:#ececec;"></div>
<div class="r" style="left:1296px;top:362px;width:18.5px;height:27px;background:#d9d9d9;"></div>
<div class="r" style="left:1599px;top:362px;width:23px;height:27px;background:#d9d9d9;"></div>
<div class="r" style="left:1736px;top:362px;width:24px;height:27px;background:#d9d9d9;"></div>
<div class="r" style="left:1720px;top:362px;width:16px;height:27px;background:linear-gradient(#eeeeee,#dcdcdc);"></div>
<svg class="r" style="left:1725px;top:373.45px;" width="6" height="3.5" viewBox="0 0 6 3.5"><path d="M0 0h6 L3 3.5 z" fill="#222"/></svg>
<div class="r" style="left:1858px;top:362px;width:16px;height:27px;background:linear-gradient(#eeeeee,#dcdcdc);"></div>
<svg class="r" style="left:1863px;top:373.45px;" width="6" height="3.5" viewBox="0 0 6 3.5"><path d="M0 0h6 L3 3.5 z" fill="#222"/></svg>
<div class="r" style="left:1119px;top:388px;width:778px;height:1px;background:rgba(255,255,255,.35);"></div>
<div class="r" style="left:1139px;top:362px;width:85px;height:26px;overflow:hidden"><div class="t" style="left:0.0px;top:6.9px;font-size:12.5px;line-height:16px;color:#222;letter-spacing:-0.458px;">Username</div></div>
<svg class="r" style="left:1254px;top:369.2px;" width="13" height="13" viewBox="0 0 13 13"><rect x="0.500" y="0.500" width="12" height="12" fill="#f4f4f4" stroke="#9c9c9c"/><rect x="2" y="2" width="9" height="9" fill="#fafafa" stroke="#e0e0e0" stroke-width="1"/><path d="M3 6.500l2.500 3L10 2.800" fill="none" stroke="#666" stroke-width="1.500"/></svg>
<div class="t" style="left:1354.5px;top:368.9px;font-size:12.5px;line-height:16px;color:#222;">5</div>
<div class="t" style="left:1363.5px;top:368.9px;font-size:12.5px;line-height:16px;color:#222;letter-spacing:-0.229px;">Default</div>
<svg class="r" style="left:1451px;top:369.2px;" width="13" height="13" viewBox="0 0 13 13"><rect x="0.500" y="0.500" width="12" height="12" fill="#f4f4f4" stroke="#9c9c9c"/><rect x="2" y="2" width="9" height="9" fill="#fafafa" stroke="#e0e0e0" stroke-width="1"/></svg>
<div class="t" style="left:1494.0px;top:368.9px;font-size:12.5px;line-height:16px;color:#222;letter-spacing:0.038px;">Info</div>
<div class="t" style="left:1541.0px;top:368.9px;font-size:12.5px;line-height:16px;color:#222;letter-spacing:-0.231px;">Text</div>
<div class="t" style="left:1628.0px;top:368.9px;font-size:12.5px;line-height:16px;color:#222;">-</div>
<div class="t" style="left:1766.0px;top:368.9px;font-size:12.5px;line-height:16px;color:#222;">-</div>
<div class="r" style="left:1138px;top:389px;width:759px;height:26px;background:#ffd8d8;"></div>
<div class="r" style="left:1296px;top:389px;width:18.5px;height:26px;background:#ebd3d3;"></div>
<div class="r" style="left:1421.5px;top:389px;width:70.5px;height:26px;background:#ebd3d3;"></div>
<div class="r" style="left:1599px;top:389px;width:23px;height:26px;background:#ebd3d3;"></div>
<div class="r" style="left:1736px;top:389px;width:24px;height:26px;background:#ebd3d3;"></div>
<div class="r" style="left:1720px;top:389px;width:16px;height:26px;background:linear-gradient(#eee8e8,#dfd6d6);"></div>
<svg class="r" style="left:1725px;top:400.05px;" width="6" height="3.5" viewBox="0 0 6 3.5"><path d="M0 0h6 L3 3.5 z" fill="#222"/></svg>
<div class="r" style="left:1858px;top:389px;width:16px;height:26px;background:linear-gradient(#eee8e8,#dfd6d6);"></div>
<svg class="r" style="left:1863px;top:400.05px;" width="6" height="3.5" viewBox="0 0 6 3.5"><path d="M0 0h6 L3 3.5 z" fill="#222"/></svg>
<div class="r" style="left:1138px;top:414px;width:759px;height:1px;background:rgba(255,255,255,.22);"></div>
<div class="r" style="left:1139px;top:389px;width:85px;height:26px;overflow:hidden"><div class="t" style="left:0.0px;top:6.5px;font-size:12.5px;line-height:16px;color:#222;letter-spacing:-0.151px;">Comments for:</div></div>
<svg class="r" style="left:1254px;top:395.8px;" width="13" height="13" viewBox="0 0 13 13"><rect x="0.500" y="0.500" width="12" height="12" fill="#f4f4f4" stroke="#9c9c9c"/><rect x="2" y="2" width="9" height="9" fill="#fafafa" stroke="#e0e0e0" stroke-width="1"/></svg>
<div class="t" style="left:1363.5px;top:395.5px;font-size:12.5px;line-height:16px;color:#222;letter-spacing:-0.229px;">Default</div>
<div class="t" style="left:1494.0px;top:395.5px;font-size:12.5px;line-height:16px;color:#222;letter-spacing:0.038px;">Info</div>
<div class="t" style="left:1541.0px;top:395.5px;font-size:12.5px;line-height:16px;color:#222;letter-spacing:-0.231px;">Text</div>
<div class="t" style="left:1628.0px;top:395.5px;font-size:12.5px;line-height:16px;color:#222;">-</div>
<div class="t" style="left:1766.0px;top:395.5px;font-size:12.5px;line-height:16px;color:#222;">-</div>
<div class="r" style="left:1296px;top:415px;width:18.5px;height:27px;background:#d9d9d9;"></div>
<div class="r" style="left:1599px;top:415px;width:23px;height:27px;background:#d9d9d9;"></div>
<div class="r" style="left:1736px;top:415px;width:24px;height:27px;background:#d9d9d9;"></div>
<div class="r" style="left:1720px;top:415px;width:16px;height:27px;background:linear-gradient(#eeeeee,#dcdcdc);"></div>
<svg class="r" style="left:1725px;top:426.65px;" width="6" height="3.5" viewBox="0 0 6 3.5"><path d="M0 0h6 L3 3.5 z" fill="#222"/></svg>
<div class="r" style="left:1858px;top:415px;width:16px;height:27px;background:linear-gradient(#eeeeee,#dcdcdc);"></div>
<svg class="r" style="left:1863px;top:426.65px;" width="6" height="3.5" viewBox="0 0 6 3.5"><path d="M0 0h6 L3 3.5 z" fill="#222"/></svg>
<div class="r" style="left:1119px;top:441px;width:778px;height:1px;background:rgba(255,255,255,.35);"></div>
<div class="r" style="left:1139px;top:415px;width:85px;height:26px;overflow:hidden"><div class="t" style="left:0.0px;top:7.1px;font-size:12.5px;line-height:16px;color:#222;letter-spacing:-0.416px;">User Type</div></div>
<svg class="r" style="left:1254px;top:422.4px;" width="13" height="13" viewBox="0 0 13 13"><rect x="0.500" y="0.500" width="12" height="12" fill="#f4f4f4" stroke="#9c9c9c"/><rect x="2" y="2" width="9" height="9" fill="#fafafa" stroke="#e0e0e0" stroke-width="1"/><path d="M3 6.500l2.500 3L10 2.800" fill="none" stroke="#666" stroke-width="1.500"/></svg>
<div class="t" style="left:1354.5px;top:422.1px;font-size:12.5px;line-height:16px;color:#222;">6</div>
<div class="t" style="left:1363.5px;top:422.1px;font-size:12.5px;line-height:16px;color:#222;letter-spacing:-0.229px;">Default</div>
<svg class="r" style="left:1451px;top:422.4px;" width="13" height="13" viewBox="0 0 13 13"><rect x="0.500" y="0.500" width="12" height="12" fill="#f4f4f4" stroke="#9c9c9c"/><rect x="2" y="2" width="9" height="9" fill="#fafafa" stroke="#e0e0e0" stroke-width="1"/></svg>
<div class="t" style="left:1494.0px;top:422.1px;font-size:12.5px;line-height:16px;color:#222;letter-spacing:0.038px;">Info</div>
<div class="t" style="left:1541.0px;top:422.1px;font-size:12.5px;line-height:16px;color:#222;letter-spacing:-0.231px;">Text</div>
<div class="t" style="left:1628.0px;top:422.1px;font-size:12.5px;line-height:16px;color:#222;">-</div>
<div class="t" style="left:1766.0px;top:422.1px;font-size:12.5px;line-height:16px;color:#222;">-</div>
<div class="r" style="left:1296px;top:442px;width:18.5px;height:26px;background:#d9d9d9;"></div>
<div class="r" style="left:1362.5px;top:442px;width:59px;height:26px;background:#d9d9d9;"></div>
<div class="r" style="left:1599px;top:442px;width:23px;height:26px;background:#d9d9d9;"></div>
<div class="r" style="left:1736px;top:442px;width:24px;height:26px;background:#d9d9d9;"></div>
<div class="r" style="left:1720px;top:442px;width:16px;height:26px;background:linear-gradient(#eeeeee,#dcdcdc);"></div>
<svg class="r" style="left:1725px;top:453.25px;" width="6" height="3.5" viewBox="0 0 6 3.5"><path d="M0 0h6 L3 3.5 z" fill="#222"/></svg>
<div class="r" style="left:1858px;top:442px;width:16px;height:26px;background:linear-gradient(#eeeeee,#dcdcdc);"></div>
<svg class="r" style="left:1863px;top:453.25px;" width="6" height="3.5" viewBox="0 0 6 3.5"><path d="M0 0h6 L3 3.5 z" fill="#222"/></svg>
<div class="r" style="left:1119px;top:467px;width:778px;height:1px;background:rgba(255,255,255,.35);"></div>
<div class="r" style="left:1139px;top:442px;width:85px;height:26px;overflow:hidden"><div class="t" style="left:0.0px;top:6.7px;font-size:12.5px;line-height:16px;color:#222;letter-spacing:-0.455px;">Sync Enabled - C</div></div>
<svg class="r" style="left:1254px;top:449px;" width="13" height="13" viewBox="0 0 13 13"><rect x="0.500" y="0.500" width="12" height="12" fill="#f4f4f4" stroke="#9c9c9c"/><rect x="2" y="2" width="9" height="9" fill="#fafafa" stroke="#e0e0e0" stroke-width="1"/><path d="M3 6.500l2.500 3L10 2.800" fill="none" stroke="#666" stroke-width="1.500"/></svg>
<div class="t" style="left:1354.5px;top:448.7px;font-size:12.5px;line-height:16px;color:#222;">7</div>
<svg class="r" style="left:1451px;top:449px;" width="13" height="13" viewBox="0 0 13 13"><rect x="0.500" y="0.500" width="12" height="12" fill="#f4f4f4" stroke="#9c9c9c"/><rect x="2" y="2" width="9" height="9" fill="#fafafa" stroke="#e0e0e0" stroke-width="1"/></svg>
<div class="t" style="left:1494.0px;top:448.7px;font-size:12.5px;line-height:16px;color:#222;letter-spacing:0.038px;">Info</div>
<div class="t" style="left:1541.0px;top:448.7px;font-size:12.5px;line-height:16px;color:#222;letter-spacing:-0.323px;">Checkbox</div>
<div class="t" style="left:1628.0px;top:448.7px;font-size:12.5px;line-height:16px;color:#222;">-</div>
<div class="t" style="left:1766.0px;top:448.7px;font-size:12.5px;line-height:16px;color:#222;">-</div>
<div class="r" style="left:1296px;top:468px;width:18.5px;height:27px;background:#d9d9d9;"></div>
<div class="r" style="left:1599px;top:468px;width:23px;height:27px;background:#d9d9d9;"></div>
<div class="r" style="left:1736px;top:468px;width:24px;height:27px;background:#d9d9d9;"></div>
<div class="r" style="left:1720px;top:468px;width:16px;height:27px;background:linear-gradient(#eeeeee,#dcdcdc);"></div>
<svg class="r" style="left:1725px;top:479.85px;" width="6" height="3.5" viewBox="0 0 6 3.5"><path d="M0 0h6 L3 3.5 z" fill="#222"/></svg>
<div class="r" style="left:1858px;top:468px;width:16px;height:27px;background:linear-gradient(#eeeeee,#dcdcdc);"></div>
<svg class="r" style="left:1863px;top:479.85px;" width="6" height="3.5" viewBox="0 0 6 3.5"><path d="M0 0h6 L3 3.5 z" fill="#222"/></svg>
<div class="r" style="left:1119px;top:494px;width:778px;height:1px;background:rgba(255,255,255,.35);"></div>
<div class="r" style="left:1139px;top:468px;width:85px;height:26px;overflow:hidden"><div class="t" style="left:0.0px;top:7.3px;font-size:12.5px;line-height:16px;color:#222;letter-spacing:-0.124px;">Sign-in status</div></div>
<svg class="r" style="left:1254px;top:475.6px;" width="13" height="13" viewBox="0 0 13 13"><rect x="0.500" y="0.500" width="12" height="12" fill="#f4f4f4" stroke="#9c9c9c"/><rect x="2" y="2" width="9" height="9" fill="#fafafa" stroke="#e0e0e0" stroke-width="1"/><path d="M3 6.500l2.500 3L10 2.800" fill="none" stroke="#666" stroke-width="1.500"/></svg>
<div class="t" style="left:1354.5px;top:475.3px;font-size:12.5px;line-height:16px;color:#222;">8</div>
<div class="t" style="left:1363.5px;top:475.3px;font-size:12.5px;line-height:16px;color:#222;letter-spacing:-0.229px;">Default</div>
<svg class="r" style="left:1451px;top:475.6px;" width="13" height="13" viewBox="0 0 13 13"><rect x="0.500" y="0.500" width="12" height="12" fill="#f4f4f4" stroke="#9c9c9c"/><rect x="2" y="2" width="9" height="9" fill="#fafafa" stroke="#e0e0e0" stroke-width="1"/></svg>
<div class="t" style="left:1494.0px;top:475.3px;font-size:12.5px;line-height:16px;color:#222;letter-spacing:0.038px;">Info</div>
<div class="t" style="left:1541.0px;top:475.3px;font-size:12.5px;line-height:16px;color:#222;letter-spacing:-0.231px;">Text</div>
<div class="t" style="left:1628.0px;top:475.3px;font-size:12.5px;line-height:16px;color:#222;">-</div>
<div class="t" style="left:1766.0px;top:475.3px;font-size:12.5px;line-height:16px;color:#222;">-</div>
<div class="r" style="left:1296px;top:495px;width:18.5px;height:27px;background:#d9d9d9;"></div>
<div class="r" style="left:1362.5px;top:495px;width:59px;height:27px;background:#d9d9d9;"></div>
<div class="r" style="left:1599px;top:495px;width:23px;height:27px;background:#d9d9d9;"></div>
<div class="r" style="left:1736px;top:495px;width:24px;height:27px;background:#d9d9d9;"></div>
<div class="r" style="left:1720px;top:495px;width:16px;height:27px;background:linear-gradient(#eeeeee,#dcdcdc);"></div>
<svg class="r" style="left:1725px;top:506.45px;" width="6" height="3.5" viewBox="0 0 6 3.5"><path d="M0 0h6 L3 3.5 z" fill="#222"/></svg>
<div class="r" style="left:1858px;top:495px;width:16px;height:27px;background:linear-gradient(#eeeeee,#dcdcdc);"></div>
<svg class="r" style="left:1863px;top:506.45px;" width="6" height="3.5" viewBox="0 0 6 3.5"><path d="M0 0h6 L3 3.5 z" fill="#222"/></svg>
<div class="r" style="left:1119px;top:521px;width:778px;height:1px;background:rgba(255,255,255,.35);"></div>
<div class="r" style="left:1139px;top:495px;width:85px;height:26px;overflow:hidden"><div class="t" style="left:0.0px;top:6.9px;font-size:12.5px;line-height:16px;color:#222;letter-spacing:-0.102px;">Last signed in or</div></div>
<svg class="r" style="left:1254px;top:502.2px;" width="13" height="13" viewBox="0 0 13 13"><rect x="0.500" y="0.500" width="12" height="12" fill="#f4f4f4" stroke="#9c9c9c"/><rect x="2" y="2" width="9" height="9" fill="#fafafa" stroke="#e0e0e0" stroke-width="1"/><path d="M3 6.500l2.500 3L10 2.800" fill="none" stroke="#666" stroke-width="1.500"/></svg>
<div class="t" style="left:1354.5px;top:501.9px;font-size:12.5px;line-height:16px;color:#222;">9</div>
<svg class="r" style="left:1451px;top:502.2px;" width="13" height="13" viewBox="0 0 13 13"><rect x="0.500" y="0.500" width="12" height="12" fill="#f4f4f4" stroke="#9c9c9c"/><rect x="2" y="2" width="9" height="9" fill="#fafafa" stroke="#e0e0e0" stroke-width="1"/></svg>
<div class="t" style="left:1494.0px;top:501.9px;font-size:12.5px;line-height:16px;color:#222;letter-spacing:0.038px;">Info</div>
<div class="t" style="left:1541.0px;top:501.9px;font-size:12.5px;line-height:16px;color:#222;letter-spacing:-0.132px;">Time/Date</div>
<div class="t" style="left:1628.0px;top:501.9px;font-size:12.5px;line-height:16px;color:#222;">-</div>
<div class="t" style="left:1766.0px;top:501.9px;font-size:12.5px;line-height:16px;color:#222;">-</div>
<div class="r" style="left:1296px;top:522px;width:18.5px;height:26px;background:#d9d9d9;"></div>
<div class="r" style="left:1362.5px;top:522px;width:59px;height:26px;background:#d9d9d9;"></div>
<div class="r" style="left:1599px;top:522px;width:23px;height:26px;background:#d9d9d9;"></div>
<div class="r" style="left:1736px;top:522px;width:24px;height:26px;background:#d9d9d9;"></div>
<div class="r" style="left:1720px;top:522px;width:16px;height:26px;background:linear-gradient(#eeeeee,#dcdcdc);"></div>
<svg class="r" style="left:1725px;top:533.05px;" width="6" height="3.5" viewBox="0 0 6 3.5"><path d="M0 0h6 L3 3.5 z" fill="#222"/></svg>
<div class="r" style="left:1858px;top:522px;width:16px;height:26px;background:linear-gradient(#eeeeee,#dcdcdc);"></div>
<svg class="r" style="left:1863px;top:533.05px;" width="6" height="3.5" viewBox="0 0 6 3.5"><path d="M0 0h6 L3 3.5 z" fill="#222"/></svg>
<div class="r" style="left:1119px;top:547px;width:778px;height:1px;background:rgba(255,255,255,.35);"></div>
<div class="r" style="left:1139px;top:522px;width:85px;height:26px;overflow:hidden"><div class="t" style="left:0.0px;top:6.5px;font-size:12.5px;line-height:16px;color:#222;letter-spacing:-0.102px;">Location for Lice</div></div>
<svg class="r" style="left:1254px;top:528.8px;" width="13" height="13" viewBox="0 0 13 13"><rect x="0.500" y="0.500" width="12" height="12" fill="#f4f4f4" stroke="#9c9c9c"/><rect x="2" y="2" width="9" height="9" fill="#fafafa" stroke="#e0e0e0" stroke-width="1"/><path d="M3 6.500l2.500 3L10 2.800" fill="none" stroke="#666" stroke-width="1.500"/></svg>
<div class="t" style="left:1347.6px;top:528.5px;font-size:12.5px;line-height:16px;color:#222;">10</div>
<svg class="r" style="left:1451px;top:528.8px;" width="13" height="13" viewBox="0 0 13 13"><rect x="0.500" y="0.500" width="12" height="12" fill="#f4f4f4" stroke="#9c9c9c"/><rect x="2" y="2" width="9" height="9" fill="#fafafa" stroke="#e0e0e0" stroke-width="1"/></svg>
<div class="t" style="left:1494.0px;top:528.5px;font-size:12.5px;line-height:16px;color:#222;letter-spacing:0.038px;">Info</div>
<div class="t" style="left:1541.0px;top:528.5px;font-size:12.5px;line-height:16px;color:#222;letter-spacing:-0.231px;">Text</div>
<div class="t" style="left:1628.0px;top:528.5px;font-size:12.5px;line-height:16px;color:#222;">-</div>
<div class="t" style="left:1766.0px;top:528.5px;font-size:12.5px;line-height:16px;color:#222;">-</div>
<div class="r" style="left:1138px;top:548px;width:759px;height:27px;background:#ffd8d8;"></div>
<div class="r" style="left:1296px;top:548px;width:18.5px;height:27px;background:#ebd3d3;"></div>
<div class="r" style="left:1362.5px;top:548px;width:59px;height:27px;background:#ebd3d3;"></div>
<div class="r" style="left:1421.5px;top:548px;width:70.5px;height:27px;background:#ebd3d3;"></div>
<div class="r" style="left:1599px;top:548px;width:23px;height:27px;background:#ebd3d3;"></div>
<div class="r" style="left:1736px;top:548px;width:24px;height:27px;background:#ebd3d3;"></div>
<div class="r" style="left:1720px;top:548px;width:16px;height:27px;background:linear-gradient(#eee8e8,#dfd6d6);"></div>
<svg class="r" style="left:1725px;top:559.65px;" width="6" height="3.5" viewBox="0 0 6 3.5"><path d="M0 0h6 L3 3.5 z" fill="#222"/></svg>
<div class="r" style="left:1858px;top:548px;width:16px;height:27px;background:linear-gradient(#eee8e8,#dfd6d6);"></div>
<svg class="r" style="left:1863px;top:559.65px;" width="6" height="3.5" viewBox="0 0 6 3.5"><path d="M0 0h6 L3 3.5 z" fill="#222"/></svg>
<div class="r" style="left:1138px;top:574px;width:759px;height:1px;background:rgba(255,255,255,.22);"></div>
<div class="r" style="left:1139px;top:548px;width:85px;height:26px;overflow:hidden"><div class="t" style="left:0.0px;top:7.1px;font-size:12.5px;line-height:16px;color:#222;letter-spacing:0.067px;">Sign in type - Id</div></div>
<svg class="r" style="left:1254px;top:555.4px;" width="13" height="13" viewBox="0 0 13 13"><rect x="0.500" y="0.500" width="12" height="12" fill="#f4f4f4" stroke="#9c9c9c"/><rect x="2" y="2" width="9" height="9" fill="#fafafa" stroke="#e0e0e0" stroke-width="1"/></svg>
<div class="t" style="left:1494.0px;top:555.1px;font-size:12.5px;line-height:16px;color:#222;letter-spacing:0.038px;">Info</div>
<div class="t" style="left:1541.0px;top:555.1px;font-size:12.5px;line-height:16px;color:#222;letter-spacing:-0.231px;">Text</div>
<div class="t" style="left:1628.0px;top:555.1px;font-size:12.5px;line-height:16px;color:#222;">-</div>
<div class="t" style="left:1766.0px;top:555.1px;font-size:12.5px;line-height:16px;color:#222;">-</div>
<div class="r" style="left:1138px;top:575px;width:759px;height:27px;background:#ffd8d8;"></div>
<div class="r" style="left:1296px;top:575px;width:18.5px;height:27px;background:#ebd3d3;"></div>
<div class="r" style="left:1362.5px;top:575px;width:59px;height:27px;background:#ebd3d3;"></div>
<div class="r" style="left:1421.5px;top:575px;width:70.5px;height:27px;background:#ebd3d3;"></div>
<div class="r" style="left:1599px;top:575px;width:23px;height:27px;background:#ebd3d3;"></div>
<div class="r" style="left:1736px;top:575px;width:24px;height:27px;background:#ebd3d3;"></div>
<div class="r" style="left:1720px;top:575px;width:16px;height:27px;background:linear-gradient(#eee8e8,#dfd6d6);"></div>
<svg class="r" style="left:1725px;top:586.25px;" width="6" height="3.5" viewBox="0 0 6 3.5"><path d="M0 0h6 L3 3.5 z" fill="#222"/></svg>
<div class="r" style="left:1858px;top:575px;width:16px;height:27px;background:linear-gradient(#eee8e8,#dfd6d6);"></div>
<svg class="r" style="left:1863px;top:586.25px;" width="6" height="3.5" viewBox="0 0 6 3.5"><path d="M0 0h6 L3 3.5 z" fill="#222"/></svg>
<div class="r" style="left:1138px;top:601px;width:759px;height:1px;background:rgba(255,255,255,.22);"></div>
<div class="r" style="left:1139px;top:575px;width:85px;height:26px;overflow:hidden"><div class="t" style="left:0.0px;top:6.7px;font-size:12.5px;line-height:16px;color:#222;letter-spacing:-0.052px;">Issuer - Identitie</div></div>
<svg class="r" style="left:1254px;top:582px;" width="13" height="13" viewBox="0 0 13 13"><rect x="0.500" y="0.500" width="12" height="12" fill="#f4f4f4" stroke="#9c9c9c"/><rect x="2" y="2" width="9" height="9" fill="#fafafa" stroke="#e0e0e0" stroke-width="1"/></svg>
<div class="t" style="left:1494.0px;top:581.7px;font-size:12.5px;line-height:16px;color:#222;letter-spacing:0.038px;">Info</div>
<div class="t" style="left:1541.0px;top:581.7px;font-size:12.5px;line-height:16px;color:#222;letter-spacing:-0.231px;">Text</div>
<div class="t" style="left:1628.0px;top:581.7px;font-size:12.5px;line-height:16px;color:#222;">-</div>
<div class="t" style="left:1766.0px;top:581.7px;font-size:12.5px;line-height:16px;color:#222;">-</div>
<div class="r" style="left:1138px;top:602px;width:759px;height:26px;background:#ffd8d8;"></div>
<div class="r" style="left:1296px;top:602px;width:18.5px;height:26px;background:#ebd3d3;"></div>
<div class="r" style="left:1362.5px;top:602px;width:59px;height:26px;background:#ebd3d3;"></div>
<div class="r" style="left:1421.5px;top:602px;width:70.5px;height:26px;background:#ebd3d3;"></div>
<div class="r" style="left:1599px;top:602px;width:23px;height:26px;background:#ebd3d3;"></div>
<div class="r" style="left:1736px;top:602px;width:24px;height:26px;background:#ebd3d3;"></div>
<div class="r" style="left:1720px;top:602px;width:16px;height:26px;background:linear-gradient(#eee8e8,#dfd6d6);"></div>
<svg class="r" style="left:1725px;top:612.85px;" width="6" height="3.5" viewBox="0 0 6 3.5"><path d="M0 0h6 L3 3.5 z" fill="#222"/></svg>
<div class="r" style="left:1858px;top:602px;width:16px;height:26px;background:linear-gradient(#eee8e8,#dfd6d6);"></div>
<svg class="r" style="left:1863px;top:612.85px;" width="6" height="3.5" viewBox="0 0 6 3.5"><path d="M0 0h6 L3 3.5 z" fill="#222"/></svg>
<div class="r" style="left:1138px;top:627px;width:759px;height:1px;background:rgba(255,255,255,.22);"></div>
<div class="r" style="left:1139px;top:602px;width:85px;height:26px;overflow:hidden"><div class="t" style="left:0.0px;top:6.3px;font-size:12.5px;line-height:16px;color:#222;letter-spacing:-0.305px;">ID assigned by is</div></div>
<svg class="r" style="left:1254px;top:608.6px;" width="13" height="13" viewBox="0 0 13 13"><rect x="0.500" y="0.500" width="12" height="12" fill="#f4f4f4" stroke="#9c9c9c"/><rect x="2" y="2" width="9" height="9" fill="#fafafa" stroke="#e0e0e0" stroke-width="1"/></svg>
<div class="t" style="left:1494.0px;top:608.3px;font-size:12.5px;line-height:16px;color:#222;letter-spacing:0.038px;">Info</div>
<div class="t" style="left:1541.0px;top:608.3px;font-size:12.5px;line-height:16px;color:#222;letter-spacing:-0.231px;">Text</div>
<div class="t" style="left:1628.0px;top:608.3px;font-size:12.5px;line-height:16px;color:#222;">-</div>
<div class="t" style="left:1766.0px;top:608.3px;font-size:12.5px;line-height:16px;color:#222;">-</div>
<div class="r" style="left:1138px;top:628px;width:759px;height:27px;background:#ffd8d8;"></div>
<div class="r" style="left:1296px;top:628px;width:18.5px;height:27px;background:#ebd3d3;"></div>
<div class="r" style="left:1362.5px;top:628px;width:59px;height:27px;background:#ebd3d3;"></div>
<div class="r" style="left:1421.5px;top:628px;width:70.5px;height:27px;background:#ebd3d3;"></div>
<div class="r" style="left:1599px;top:628px;width:23px;height:27px;background:#ebd3d3;"></div>
<div class="r" style="left:1736px;top:628px;width:24px;height:27px;background:#ebd3d3;"></div>
<div class="r" style="left:1720px;top:628px;width:16px;height:27px;background:linear-gradient(#eee8e8,#dfd6d6);"></div>
<svg class="r" style="left:1725px;top:639.45px;" width="6" height="3.5" viewBox="0 0 6 3.5"><path d="M0 0h6 L3 3.5 z" fill="#222"/></svg>
<div class="r" style="left:1858px;top:628px;width:16px;height:27px;background:linear-gradient(#eee8e8,#dfd6d6);"></div>
<svg class="r" style="left:1863px;top:639.45px;" width="6" height="3.5" viewBox="0 0 6 3.5"><path d="M0 0h6 L3 3.5 z" fill="#222"/></svg>
<div class="r" style="left:1138px;top:654px;width:759px;height:1px;background:rgba(255,255,255,.22);"></div>
<div class="r" style="left:1139px;top:628px;width:85px;height:26px;overflow:hidden"><div class="t" style="left:0.0px;top:6.9px;font-size:12.5px;line-height:16px;color:#222;letter-spacing:-0.320px;">Load Status - Pe</div></div>
<svg class="r" style="left:1254px;top:635.2px;" width="13" height="13" viewBox="0 0 13 13"><rect x="0.500" y="0.500" width="12" height="12" fill="#f4f4f4" stroke="#9c9c9c"/><rect x="2" y="2" width="9" height="9" fill="#fafafa" stroke="#e0e0e0" stroke-width="1"/></svg>
<div class="t" style="left:1494.0px;top:634.9px;font-size:12.5px;line-height:16px;color:#222;letter-spacing:0.038px;">Info</div>
<div class="t" style="left:1541.0px;top:634.9px;font-size:12.5px;line-height:16px;color:#222;letter-spacing:-0.132px;">Time/Date</div>
<div class="t" style="left:1628.0px;top:634.9px;font-size:12.5px;line-height:16px;color:#222;">-</div>
<div class="t" style="left:1766.0px;top:634.9px;font-size:12.5px;line-height:16px;color:#222;">-</div>
<div class="r" style="left:1138px;top:655px;width:759px;height:26px;background:#ffd8d8;"></div>
<div class="r" style="left:1296px;top:655px;width:18.5px;height:26px;background:#ebd3d3;"></div>
<div class="r" style="left:1362.5px;top:655px;width:59px;height:26px;background:#ebd3d3;"></div>
<div class="r" style="left:1421.5px;top:655px;width:70.5px;height:26px;background:#ebd3d3;"></div>
<div class="r" style="left:1599px;top:655px;width:23px;height:26px;background:#ebd3d3;"></div>
<div class="r" style="left:1736px;top:655px;width:24px;height:26px;background:#ebd3d3;"></div>
<div class="r" style="left:1720px;top:655px;width:16px;height:26px;background:linear-gradient(#eee8e8,#dfd6d6);"></div>
<svg class="r" style="left:1725px;top:666.05px;" width="6" height="3.5" viewBox="0 0 6 3.5"><path d="M0 0h6 L3 3.5 z" fill="#222"/></svg>
<div class="r" style="left:1858px;top:655px;width:16px;height:26px;background:linear-gradient(#eee8e8,#dfd6d6);"></div>
<svg class="r" style="left:1863px;top:666.05px;" width="6" height="3.5" viewBox="0 0 6 3.5"><path d="M0 0h6 L3 3.5 z" fill="#222"/></svg>
<div class="r" style="left:1138px;top:680px;width:759px;height:1px;background:rgba(255,255,255,.22);"></div>
<div class="r" style="left:1139px;top:655px;width:85px;height:26px;overflow:hidden"><div class="t" style="left:0.0px;top:6.5px;font-size:12.5px;line-height:16px;color:#222;letter-spacing:-0.304px;">First name</div></div>
<svg class="r" style="left:1254px;top:661.8px;" width="13" height="13" viewBox="0 0 13 13"><rect x="0.500" y="0.500" width="12" height="12" fill="#f4f4f4" stroke="#9c9c9c"/><rect x="2" y="2" width="9" height="9" fill="#fafafa" stroke="#e0e0e0" stroke-width="1"/></svg>
<div class="t" style="left:1494.0px;top:661.5px;font-size:12.5px;line-height:16px;color:#222;letter-spacing:0.038px;">Info</div>
<div class="t" style="left:1541.0px;top:661.5px;font-size:12.5px;line-height:16px;color:#222;letter-spacing:-0.231px;">Text</div>
<div class="t" style="left:1628.0px;top:661.5px;font-size:12.5px;line-height:16px;color:#222;">-</div>
<div class="t" style="left:1766.0px;top:661.5px;font-size:12.5px;line-height:16px;color:#222;">-</div>
<div class="r" style="left:1138px;top:681px;width:759px;height:27px;background:#ffd8d8;"></div>
<div class="r" style="left:1296px;top:681px;width:18.5px;height:27px;background:#ebd3d3;"></div>
<div class="r" style="left:1362.5px;top:681px;width:59px;height:27px;background:#ebd3d3;"></div>
<div class="r" style="left:1421.5px;top:681px;width:70.5px;height:27px;background:#ebd3d3;"></div>
<div class="r" style="left:1599px;top:681px;width:23px;height:27px;background:#ebd3d3;"></div>
<div class="r" style="left:1736px;top:681px;width:24px;height:27px;background:#ebd3d3;"></div>
<div class="r" style="left:1720px;top:681px;width:16px;height:27px;background:linear-gradient(#eee8e8,#dfd6d6);"></div>
<svg class="r" style="left:1725px;top:692.65px;" width="6" height="3.5" viewBox="0 0 6 3.5"><path d="M0 0h6 L3 3.5 z" fill="#222"/></svg>
<div class="r" style="left:1858px;top:681px;width:16px;height:27px;background:linear-gradient(#eee8e8,#dfd6d6);"></div>
<svg class="r" style="left:1863px;top:692.65px;" width="6" height="3.5" viewBox="0 0 6 3.5"><path d="M0 0h6 L3 3.5 z" fill="#222"/></svg>
<div class="r" style="left:1138px;top:707px;width:759px;height:1px;background:rgba(255,255,255,.22);"></div>
<div class="r" style="left:1139px;top:681px;width:85px;height:26px;overflow:hidden"><div class="t" style="left:0.0px;top:7.1px;font-size:12.5px;line-height:16px;color:#222;letter-spacing:-0.374px;">Last name</div></div>
<svg class="r" style="left:1254px;top:688.4px;" width="13" height="13" viewBox="0 0 13 13"><rect x="0.500" y="0.500" width="12" height="12" fill="#f4f4f4" stroke="#9c9c9c"/><rect x="2" y="2" width="9" height="9" fill="#fafafa" stroke="#e0e0e0" stroke-width="1"/></svg>
<div class="t" style="left:1494.0px;top:688.1px;font-size:12.5px;line-height:16px;color:#222;letter-spacing:0.038px;">Info</div>
<div class="t" style="left:1541.0px;top:688.1px;font-size:12.5px;line-height:16px;color:#222;letter-spacing:-0.231px;">Text</div>
<div class="t" style="left:1628.0px;top:688.1px;font-size:12.5px;line-height:16px;color:#222;">-</div>
<div class="t" style="left:1766.0px;top:688.1px;font-size:12.5px;line-height:16px;color:#222;">-</div>
<div class="r" style="left:1138px;top:708px;width:759px;height:26px;background:#ffd8d8;"></div>
<div class="r" style="left:1296px;top:708px;width:18.5px;height:26px;background:#ebd3d3;"></div>
<div class="r" style="left:1362.5px;top:708px;width:59px;height:26px;background:#ebd3d3;"></div>
<div class="r" style="left:1421.5px;top:708px;width:70.5px;height:26px;background:#ebd3d3;"></div>
<div class="r" style="left:1599px;top:708px;width:23px;height:26px;background:#ebd3d3;"></div>
<div class="r" style="left:1736px;top:708px;width:24px;height:26px;background:#ebd3d3;"></div>
<div class="r" style="left:1720px;top:708px;width:16px;height:26px;background:linear-gradient(#eee8e8,#dfd6d6);"></div>
<svg class="r" style="left:1725px;top:719.25px;" width="6" height="3.5" viewBox="0 0 6 3.5"><path d="M0 0h6 L3 3.5 z" fill="#222"/></svg>
<div class="r" style="left:1858px;top:708px;width:16px;height:26px;background:linear-gradient(#eee8e8,#dfd6d6);"></div>
<svg class="r" style="left:1863px;top:719.25px;" width="6" height="3.5" viewBox="0 0 6 3.5"><path d="M0 0h6 L3 3.5 z" fill="#222"/></svg>
<div class="r" style="left:1138px;top:733px;width:759px;height:1px;background:rgba(255,255,255,.22);"></div>
<div class="r" style="left:1139px;top:708px;width:85px;height:26px;overflow:hidden"><div class="t" style="left:0.0px;top:6.7px;font-size:12.5px;line-height:16px;color:#222;letter-spacing:-0.324px;">Employee ID</div></div>
<svg class="r" style="left:1254px;top:715px;" width="13" height="13" viewBox="0 0 13 13"><rect x="0.500" y="0.500" width="12" height="12" fill="#f4f4f4" stroke="#9c9c9c"/><rect x="2" y="2" width="9" height="9" fill="#fafafa" stroke="#e0e0e0" stroke-width="1"/></svg>
<div class="t" style="left:1494.0px;top:714.7px;font-size:12.5px;line-height:16px;color:#222;letter-spacing:0.038px;">Info</div>
<div class="t" style="left:1541.0px;top:714.7px;font-size:12.5px;line-height:16px;color:#222;letter-spacing:-0.231px;">Text</div>
<div class="t" style="left:1628.0px;top:714.7px;font-size:12.5px;line-height:16px;color:#222;">-</div>
<div class="t" style="left:1766.0px;top:714.7px;font-size:12.5px;line-height:16px;color:#222;">-</div>
<div class="r" style="left:1138px;top:734px;width:759px;height:27px;background:#ffd8d8;"></div>
<div class="r" style="left:1296px;top:734px;width:18.5px;height:27px;background:#ebd3d3;"></div>
<div class="r" style="left:1362.5px;top:734px;width:59px;height:27px;background:#ebd3d3;"></div>
<div class="r" style="left:1421.5px;top:734px;width:70.5px;height:27px;background:#ebd3d3;"></div>
<div class="r" style="left:1599px;top:734px;width:23px;height:27px;background:#ebd3d3;"></div>
<div class="r" style="left:1736px;top:734px;width:24px;height:27px;background:#ebd3d3;"></div>
<div class="r" style="left:1720px;top:734px;width:16px;height:27px;background:linear-gradient(#eee8e8,#dfd6d6);"></div>
<svg class="r" style="left:1725px;top:745.85px;" width="6" height="3.5" viewBox="0 0 6 3.5"><path d="M0 0h6 L3 3.5 z" fill="#222"/></svg>
<div class="r" style="left:1858px;top:734px;width:16px;height:27px;background:linear-gradient(#eee8e8,#dfd6d6);"></div>
<svg class="r" style="left:1863px;top:745.85px;" width="6" height="3.5" viewBox="0 0 6 3.5"><path d="M0 0h6 L3 3.5 z" fill="#222"/></svg>
<div class="r" style="left:1138px;top:760px;width:759px;height:1px;background:rgba(255,255,255,.22);"></div>
<div class="r" style="left:1139px;top:734px;width:85px;height:26px;overflow:hidden"><div class="t" style="left:0.0px;top:7.3px;font-size:12.5px;line-height:16px;color:#222;letter-spacing:-0.380px;">Employee Type</div></div>
<svg class="r" style="left:1254px;top:741.6px;" width="13" height="13" viewBox="0 0 13 13"><rect x="0.500" y="0.500" width="12" height="12" fill="#f4f4f4" stroke="#9c9c9c"/><rect x="2" y="2" width="9" height="9" fill="#fafafa" stroke="#e0e0e0" stroke-width="1"/></svg>
<div class="t" style="left:1494.0px;top:741.3px;font-size:12.5px;line-height:16px;color:#222;letter-spacing:0.038px;">Info</div>
<div class="t" style="left:1541.0px;top:741.3px;font-size:12.5px;line-height:16px;color:#222;letter-spacing:-0.231px;">Text</div>
<div class="t" style="left:1628.0px;top:741.3px;font-size:12.5px;line-height:16px;color:#222;">-</div>
<div class="t" style="left:1766.0px;top:741.3px;font-size:12.5px;line-height:16px;color:#222;">-</div>
<div class="r" style="left:1138px;top:761px;width:759px;height:27px;background:#ffd8d8;"></div>
<div class="r" style="left:1296px;top:761px;width:18.5px;height:27px;background:#ebd3d3;"></div>
<div class="r" style="left:1362.5px;top:761px;width:59px;height:27px;background:#ebd3d3;"></div>
<div class="r" style="left:1421.5px;top:761px;width:70.5px;height:27px;background:#ebd3d3;"></div>
<div class="r" style="left:1599px;top:761px;width:23px;height:27px;background:#ebd3d3;"></div>
<div class="r" style="left:1736px;top:761px;width:24px;height:27px;background:#ebd3d3;"></div>
<div class="r" style="left:1720px;top:761px;width:16px;height:27px;background:linear-gradient(#eee8e8,#dfd6d6);"></div>
<svg class="r" style="left:1725px;top:772.45px;" width="6" height="3.5" viewBox="0 0 6 3.5"><path d="M0 0h6 L3 3.5 z" fill="#222"/></svg>
<div class="r" style="left:1858px;top:761px;width:16px;height:27px;background:linear-gradient(#eee8e8,#dfd6d6);"></div>
<svg class="r" style="left:1863px;top:772.45px;" width="6" height="3.5" viewBox="0 0 6 3.5"><path d="M0 0h6 L3 3.5 z" fill="#222"/></svg>
<div class="r" style="left:1138px;top:787px;width:759px;height:1px;background:rgba(255,255,255,.22);"></div>
<div class="r" style="left:1139px;top:761px;width:85px;height:26px;overflow:hidden"><div class="t" style="left:0.0px;top:6.9px;font-size:12.5px;line-height:16px;color:#222;letter-spacing:-0.144px;">Division - Emplo</div></div>
<svg class="r" style="left:1254px;top:768.2px;" width="13" height="13" viewBox="0 0 13 13"><rect x="0.500" y="0.500" width="12" height="12" fill="#f4f4f4" stroke="#9c9c9c"/><rect x="2" y="2" width="9" height="9" fill="#fafafa" stroke="#e0e0e0" stroke-width="1"/></svg>
<div class="t" style="left:1494.0px;top:767.9px;font-size:12.5px;line-height:16px;color:#222;letter-spacing:0.038px;">Info</div>
<div class="t" style="left:1541.0px;top:767.9px;font-size:12.5px;line-height:16px;color:#222;letter-spacing:-0.231px;">Text</div>
<div class="t" style="left:1628.0px;top:767.9px;font-size:12.5px;line-height:16px;color:#222;">-</div>
<div class="t" style="left:1766.0px;top:767.9px;font-size:12.5px;line-height:16px;color:#222;">-</div>
<div class="r" style="left:1138px;top:788px;width:759px;height:26px;background:#ffd8d8;"></div>
<div class="r" style="left:1296px;top:788px;width:18.5px;height:26px;background:#ebd3d3;"></div>
<div class="r" style="left:1362.5px;top:788px;width:59px;height:26px;background:#ebd3d3;"></div>
<div class="r" style="left:1421.5px;top:788px;width:70.5px;height:26px;background:#ebd3d3;"></div>
<div class="r" style="left:1599px;top:788px;width:23px;height:26px;background:#ebd3d3;"></div>
<div class="r" style="left:1736px;top:788px;width:24px;height:26px;background:#ebd3d3;"></div>
<div class="r" style="left:1720px;top:788px;width:16px;height:26px;background:linear-gradient(#eee8e8,#dfd6d6);"></div>
<svg class="r" style="left:1725px;top:799.05px;" width="6" height="3.5" viewBox="0 0 6 3.5"><path d="M0 0h6 L3 3.5 z" fill="#222"/></svg>
<div class="r" style="left:1858px;top:788px;width:16px;height:26px;background:linear-gradient(#eee8e8,#dfd6d6);"></div>
<svg class="r" style="left:1863px;top:799.05px;" width="6" height="3.5" viewBox="0 0 6 3.5"><path d="M0 0h6 L3 3.5 z" fill="#222"/></svg>
<div class="r" style="left:1138px;top:813px;width:759px;height:1px;background:rgba(255,255,255,.22);"></div>
<div class="r" style="left:1139px;top:788px;width:85px;height:26px;overflow:hidden"><div class="t" style="left:0.0px;top:6.5px;font-size:12.5px;line-height:16px;color:#222;letter-spacing:-0.318px;">Cost Center - En</div></div>
<svg class="r" style="left:1254px;top:794.8px;" width="13" height="13" viewBox="0 0 13 13"><rect x="0.500" y="0.500" width="12" height="12" fill="#f4f4f4" stroke="#9c9c9c"/><rect x="2" y="2" width="9" height="9" fill="#fafafa" stroke="#e0e0e0" stroke-width="1"/></svg>
<div class="t" style="left:1494.0px;top:794.5px;font-size:12.5px;line-height:16px;color:#222;letter-spacing:0.038px;">Info</div>
<div class="t" style="left:1541.0px;top:794.5px;font-size:12.5px;line-height:16px;color:#222;letter-spacing:-0.231px;">Text</div>
<div class="t" style="left:1628.0px;top:794.5px;font-size:12.5px;line-height:16px;color:#222;">-</div>
<div class="t" style="left:1766.0px;top:794.5px;font-size:12.5px;line-height:16px;color:#222;">-</div>
<div class="r" style="left:1138px;top:814px;width:759px;height:27px;background:#ffd8d8;"></div>
<div class="r" style="left:1296px;top:814px;width:18.5px;height:27px;background:#ebd3d3;"></div>
<div class="r" style="left:1421.5px;top:814px;width:70.5px;height:27px;background:#ebd3d3;"></div>
<div class="r" style="left:1599px;top:814px;width:23px;height:27px;background:#ebd3d3;"></div>
<div class="r" style="left:1736px;top:814px;width:24px;height:27px;background:#ebd3d3;"></div>
<div class="r" style="left:1720px;top:814px;width:16px;height:27px;background:linear-gradient(#eee8e8,#dfd6d6);"></div>
<svg class="r" style="left:1725px;top:825.65px;" width="6" height="3.5" viewBox="0 0 6 3.5"><path d="M0 0h6 L3 3.5 z" fill="#222"/></svg>
<div class="r" style="left:1858px;top:814px;width:16px;height:27px;background:linear-gradient(#eee8e8,#dfd6d6);"></div>
<svg class="r" style="left:1863px;top:825.65px;" width="6" height="3.5" viewBox="0 0 6 3.5"><path d="M0 0h6 L3 3.5 z" fill="#222"/></svg>
<div class="r" style="left:1138px;top:840px;width:759px;height:1px;background:rgba(255,255,255,.22);"></div>
<div class="r" style="left:1139px;top:814px;width:85px;height:26px;overflow:hidden"><div class="t" style="left:0.0px;top:7.1px;font-size:12.5px;line-height:16px;color:#222;letter-spacing:-0.009px;">Job title</div></div>
<svg class="r" style="left:1254px;top:821.4px;" width="13" height="13" viewBox="0 0 13 13"><rect x="0.500" y="0.500" width="12" height="12" fill="#f4f4f4" stroke="#9c9c9c"/><rect x="2" y="2" width="9" height="9" fill="#fafafa" stroke="#e0e0e0" stroke-width="1"/></svg>
<div class="t" style="left:1363.5px;top:821.1px;font-size:12.5px;line-height:16px;color:#222;letter-spacing:-0.229px;">Default</div>
<div class="t" style="left:1494.0px;top:821.1px;font-size:12.5px;line-height:16px;color:#222;letter-spacing:0.038px;">Info</div>
<div class="t" style="left:1541.0px;top:821.1px;font-size:12.5px;line-height:16px;color:#222;letter-spacing:-0.231px;">Text</div>
<div class="t" style="left:1628.0px;top:821.1px;font-size:12.5px;line-height:16px;color:#222;">-</div>
<div class="t" style="left:1766.0px;top:821.1px;font-size:12.5px;line-height:16px;color:#222;">-</div>
<div class="r" style="left:1138px;top:841px;width:759px;height:27px;background:#ffd8d8;"></div>
<div class="r" style="left:1296px;top:841px;width:18.5px;height:27px;background:#ebd3d3;"></div>
<div class="r" style="left:1362.5px;top:841px;width:59px;height:27px;background:#ebd3d3;"></div>
<div class="r" style="left:1421.5px;top:841px;width:70.5px;height:27px;background:#ebd3d3;"></div>
<div class="r" style="left:1599px;top:841px;width:23px;height:27px;background:#ebd3d3;"></div>
<div class="r" style="left:1736px;top:841px;width:24px;height:27px;background:#ebd3d3;"></div>
<div class="r" style="left:1720px;top:841px;width:16px;height:27px;background:linear-gradient(#eee8e8,#dfd6d6);"></div>
<svg class="r" style="left:1725px;top:852.25px;" width="6" height="3.5" viewBox="0 0 6 3.5"><path d="M0 0h6 L3 3.5 z" fill="#222"/></svg>
<div class="r" style="left:1858px;top:841px;width:16px;height:27px;background:linear-gradient(#eee8e8,#dfd6d6);"></div>
<svg class="r" style="left:1863px;top:852.25px;" width="6" height="3.5" viewBox="0 0 6 3.5"><path d="M0 0h6 L3 3.5 z" fill="#222"/></svg>
<div class="r" style="left:1138px;top:867px;width:759px;height:1px;background:rgba(255,255,255,.22);"></div>
<div class="r" style="left:1139px;top:841px;width:85px;height:26px;overflow:hidden"><div class="t" style="left:0.0px;top:6.7px;font-size:12.5px;line-height:16px;color:#222;letter-spacing:-0.432px;">Employee Hire D</div></div>
<svg class="r" style="left:1254px;top:848px;" width="13" height="13" viewBox="0 0 13 13"><rect x="0.500" y="0.500" width="12" height="12" fill="#f4f4f4" stroke="#9c9c9c"/><rect x="2" y="2" width="9" height="9" fill="#fafafa" stroke="#e0e0e0" stroke-width="1"/></svg>
<div class="t" style="left:1494.0px;top:847.7px;font-size:12.5px;line-height:16px;color:#222;letter-spacing:0.038px;">Info</div>
<div class="t" style="left:1541.0px;top:847.7px;font-size:12.5px;line-height:16px;color:#222;letter-spacing:-0.132px;">Time/Date</div>
<div class="t" style="left:1628.0px;top:847.7px;font-size:12.5px;line-height:16px;color:#222;">-</div>
<div class="t" style="left:1766.0px;top:847.7px;font-size:12.5px;line-height:16px;color:#222;">-</div>
<div class="r" style="left:1138px;top:868px;width:759px;height:26px;background:#ffd8d8;"></div>
<div class="r" style="left:1296px;top:868px;width:18.5px;height:26px;background:#ebd3d3;"></div>
<div class="r" style="left:1362.5px;top:868px;width:59px;height:26px;background:#ebd3d3;"></div>
<div class="r" style="left:1421.5px;top:868px;width:70.5px;height:26px;background:#ebd3d3;"></div>
<div class="r" style="left:1599px;top:868px;width:23px;height:26px;background:#ebd3d3;"></div>
<div class="r" style="left:1736px;top:868px;width:24px;height:26px;background:#ebd3d3;"></div>
<div class="r" style="left:1720px;top:868px;width:16px;height:26px;background:linear-gradient(#eee8e8,#dfd6d6);"></div>
<svg class="r" style="left:1725px;top:878.85px;" width="6" height="3.5" viewBox="0 0 6 3.5"><path d="M0 0h6 L3 3.5 z" fill="#222"/></svg>
<div class="r" style="left:1858px;top:868px;width:16px;height:26px;background:linear-gradient(#eee8e8,#dfd6d6);"></div>
<svg class="r" style="left:1863px;top:878.85px;" width="6" height="3.5" viewBox="0 0 6 3.5"><path d="M0 0h6 L3 3.5 z" fill="#222"/></svg>
<div class="r" style="left:1138px;top:893px;width:759px;height:1px;background:rgba(255,255,255,.22);"></div>
<div class="r" style="left:1139px;top:868px;width:85px;height:26px;overflow:hidden"><div class="t" style="left:0.0px;top:6.3px;font-size:12.5px;line-height:16px;color:#222;letter-spacing:-0.508px;">Employee Leave</div></div>
<svg class="r" style="left:1254px;top:874.6px;" width="13" height="13" viewBox="0 0 13 13"><rect x="0.500" y="0.500" width="12" height="12" fill="#f4f4f4" stroke="#9c9c9c"/><rect x="2" y="2" width="9" height="9" fill="#fafafa" stroke="#e0e0e0" stroke-width="1"/></svg>
<div class="t" style="left:1494.0px;top:874.3px;font-size:12.5px;line-height:16px;color:#222;letter-spacing:0.038px;">Info</div>
<div class="t" style="left:1541.0px;top:874.3px;font-size:12.5px;line-height:16px;color:#222;letter-spacing:-0.132px;">Time/Date</div>
<div class="t" style="left:1628.0px;top:874.3px;font-size:12.5px;line-height:16px;color:#222;">-</div>
<div class="t" style="left:1766.0px;top:874.3px;font-size:12.5px;line-height:16px;color:#222;">-</div>
<div class="r" style="left:1296px;top:894px;width:18.5px;height:27px;background:#d9d9d9;"></div>
<div class="r" style="left:1599px;top:894px;width:23px;height:27px;background:#d9d9d9;"></div>
<div class="r" style="left:1736px;top:894px;width:24px;height:27px;background:#d9d9d9;"></div>
<div class="r" style="left:1720px;top:894px;width:16px;height:27px;background:linear-gradient(#eeeeee,#dcdcdc);"></div>
<svg class="r" style="left:1725px;top:905.45px;" width="6" height="3.5" viewBox="0 0 6 3.5"><path d="M0 0h6 L3 3.5 z" fill="#222"/></svg>
<div class="r" style="left:1858px;top:894px;width:16px;height:27px;background:linear-gradient(#eeeeee,#dcdcdc);"></div>
<svg class="r" style="left:1863px;top:905.45px;" width="6" height="3.5" viewBox="0 0 6 3.5"><path d="M0 0h6 L3 3.5 z" fill="#222"/></svg>
<div class="r" style="left:1119px;top:920px;width:778px;height:1px;background:rgba(255,255,255,.35);"></div>
<div class="r" style="left:1139px;top:894px;width:85px;height:26px;overflow:hidden"><div class="t" style="left:0.0px;top:6.9px;font-size:12.5px;line-height:16px;color:#222;letter-spacing:-0.191px;">Manager</div></div>
<svg class="r" style="left:1254px;top:901.2px;" width="13" height="13" viewBox="0 0 13 13"><rect x="0.500" y="0.500" width="12" height="12" fill="#f4f4f4" stroke="#9c9c9c"/><rect x="2" y="2" width="9" height="9" fill="#fafafa" stroke="#e0e0e0" stroke-width="1"/><path d="M3 6.500l2.500 3L10 2.800" fill="none" stroke="#666" stroke-width="1.500"/></svg>
<div class="t" style="left:1347.6px;top:900.9px;font-size:12.5px;line-height:16px;color:#222;">17</div>
<div class="t" style="left:1363.5px;top:900.9px;font-size:12.5px;line-height:16px;color:#222;letter-spacing:-0.229px;">Default</div>
<svg class="r" style="left:1451px;top:901.2px;" width="13" height="13" viewBox="0 0 13 13"><rect x="0.500" y="0.500" width="12" height="12" fill="#f4f4f4" stroke="#9c9c9c"/><rect x="2" y="2" width="9" height="9" fill="#fafafa" stroke="#e0e0e0" stroke-width="1"/></svg>
<div class="t" style="left:1494.0px;top:900.9px;font-size:12.5px;line-height:16px;color:#222;letter-spacing:0.038px;">Info</div>
<div class="t" style="left:1541.0px;top:900.9px;font-size:12.5px;line-height:16px;color:#222;letter-spacing:-0.231px;">Text</div>
<div class="t" style="left:1628.0px;top:900.9px;font-size:12.5px;line-height:16px;color:#222;">-</div>
<div class="t" style="left:1766.0px;top:900.9px;font-size:12.5px;line-height:16px;color:#222;">-</div>
<div class="r" style="left:1138px;top:921px;width:759px;height:26px;background:#ffd8d8;"></div>
<div class="r" style="left:1296px;top:921px;width:18.5px;height:26px;background:#ebd3d3;"></div>
<div class="r" style="left:1362.5px;top:921px;width:59px;height:26px;background:#ebd3d3;"></div>
<div class="r" style="left:1421.5px;top:921px;width:70.5px;height:26px;background:#ebd3d3;"></div>
<div class="r" style="left:1599px;top:921px;width:23px;height:26px;background:#ebd3d3;"></div>
<div class="r" style="left:1736px;top:921px;width:24px;height:26px;background:#ebd3d3;"></div>
<div class="r" style="left:1720px;top:921px;width:16px;height:26px;background:linear-gradient(#eee8e8,#dfd6d6);"></div>
<svg class="r" style="left:1725px;top:932.05px;" width="6" height="3.5" viewBox="0 0 6 3.5"><path d="M0 0h6 L3 3.5 z" fill="#222"/></svg>
<div class="r" style="left:1858px;top:921px;width:16px;height:26px;background:linear-gradient(#eee8e8,#dfd6d6);"></div>
<svg class="r" style="left:1863px;top:932.05px;" width="6" height="3.5" viewBox="0 0 6 3.5"><path d="M0 0h6 L3 3.5 z" fill="#222"/></svg>
<div class="r" style="left:1138px;top:946px;width:759px;height:1px;background:rgba(255,255,255,.22);"></div>
<div class="r" style="left:1139px;top:921px;width:85px;height:26px;overflow:hidden"><div class="t" style="left:0.0px;top:6.5px;font-size:12.5px;line-height:16px;color:#222;letter-spacing:-0.359px;">Manager userna</div></div>
<svg class="r" style="left:1254px;top:927.8px;" width="13" height="13" viewBox="0 0 13 13"><rect x="0.500" y="0.500" width="12" height="12" fill="#f4f4f4" stroke="#9c9c9c"/><rect x="2" y="2" width="9" height="9" fill="#fafafa" stroke="#e0e0e0" stroke-width="1"/></svg>
<div class="t" style="left:1494.0px;top:927.5px;font-size:12.5px;line-height:16px;color:#222;letter-spacing:0.038px;">Info</div>
<div class="t" style="left:1541.0px;top:927.5px;font-size:12.5px;line-height:16px;color:#222;letter-spacing:-0.231px;">Text</div>
<div class="t" style="left:1628.0px;top:927.5px;font-size:12.5px;line-height:16px;color:#222;">-</div>
<div class="t" style="left:1766.0px;top:927.5px;font-size:12.5px;line-height:16px;color:#222;">-</div>
<div class="r" style="left:1138px;top:947px;width:759px;height:27px;background:#ffd8d8;"></div>
<div class="r" style="left:1296px;top:947px;width:18.5px;height:27px;background:#ebd3d3;"></div>
<div class="r" style="left:1421.5px;top:947px;width:70.5px;height:27px;background:#ebd3d3;"></div>
<div class="r" style="left:1599px;top:947px;width:23px;height:27px;background:#ebd3d3;"></div>
<div class="r" style="left:1736px;top:947px;width:24px;height:27px;background:#ebd3d3;"></div>
<div class="r" style="left:1720px;top:947px;width:16px;height:27px;background:linear-gradient(#eee8e8,#dfd6d6);"></div>
<svg class="r" style="left:1725px;top:958.65px;" width="6" height="3.5" viewBox="0 0 6 3.5"><path d="M0 0h6 L3 3.5 z" fill="#222"/></svg>
<div class="r" style="left:1858px;top:947px;width:16px;height:27px;background:linear-gradient(#eee8e8,#dfd6d6);"></div>
<svg class="r" style="left:1863px;top:958.65px;" width="6" height="3.5" viewBox="0 0 6 3.5"><path d="M0 0h6 L3 3.5 z" fill="#222"/></svg>
<div class="r" style="left:1138px;top:973px;width:759px;height:1px;background:rgba(255,255,255,.22);"></div>
<div class="r" style="left:1139px;top:947px;width:85px;height:26px;overflow:hidden"><div class="t" style="left:0.0px;top:7.1px;font-size:12.5px;line-height:16px;color:#222;letter-spacing:-0.273px;">Manager Graph</div></div>
<svg class="r" style="left:1254px;top:954.4px;" width="13" height="13" viewBox="0 0 13 13"><rect x="0.500" y="0.500" width="12" height="12" fill="#f4f4f4" stroke="#9c9c9c"/><rect x="2" y="2" width="9" height="9" fill="#fafafa" stroke="#e0e0e0" stroke-width="1"/></svg>
<div class="t" style="left:1363.5px;top:954.1px;font-size:12.5px;line-height:16px;color:#222;letter-spacing:-0.235px;">Technical</div>
<div class="t" style="left:1494.0px;top:954.1px;font-size:12.5px;line-height:16px;color:#222;letter-spacing:0.038px;">Info</div>
<div class="t" style="left:1541.0px;top:954.1px;font-size:12.5px;line-height:16px;color:#222;letter-spacing:-0.231px;">Text</div>
<div class="t" style="left:1628.0px;top:954.1px;font-size:12.5px;line-height:16px;color:#222;">-</div>
<div class="t" style="left:1766.0px;top:954.1px;font-size:12.5px;line-height:16px;color:#222;">-</div>
<div class="r" style="left:1223.7px;top:362px;width:1.5px;height:607px;background:#4a5878;"></div>
<div class="r" style="left:1897px;top:340.5px;width:15px;height:628.5px;background:#f6f6f6;"></div>
<svg class="r" style="left:1901.3px;top:346.25px;" width="8" height="4.5" viewBox="0 0 8 4.5"><path d="M0 4.5 h8 L4 0 z" fill="#454c68"/></svg>
<div class="r" style="left:1897.5px;top:382.4px;width:15.2px;height:72.2px;background:#8b8b8b;"></div>
</div>
<!-- outer bottom -->
<div class="r" style="left:2px;top:969px;width:298px;height:13px;background:#fff;"></div>
<svg class="r" style="left:41.7px;top:969.7px;" width="12.6" height="12.6" viewBox="0 0 12 12"><path d="M6 0.300l1.700 3.800 4.100.4-3.100 2.800.9 4.100L6 9.300 2.400 11.400l.9-4.100L.2 4.500l4.100-.4z" fill="#c0c0c0"/></svg>
<svg class="r" style="left:60.3px;top:968.3px;" width="15.4" height="15.4" viewBox="0 0 14 14"><circle cx="7" cy="7" r="6.200" fill="#fff" stroke="#9b4fb5" stroke-width="1.500"/><circle cx="7" cy="4" r="1.400" fill="#9b4fb5"/><path d="M3.200 5.700h7.600v1.100l-2.300.6v1.700l1.100 3h-1.400L7 9.500 5.800 12.100H4.400l1.100-3V7.400l-2.300-.6z" fill="#9b4fb5"/></svg>
<svg class="r" style="left:82.95px;top:971.6px;" width="12.1" height="8.8" viewBox="0 0 11 8"><path d="M0.500 0.500l3.700 3.500-3.700 3.500M5 0.500l3.700 3.500L5 7.500M4 4h6.500" fill="none" stroke="#b277c9" stroke-width="1"/></svg>
<div class="r" style="left:0;top:969px;width:300px;height:13px;overflow:hidden"><div class="r" style="left:180px;top:2px;width:23px;height:24px;background:#fff;border:1px solid #e3d3ea;border-radius:4px;box-sizing:border-box;"></div><svg class="r" style="left:184.15px;top:6.65px;" width="14.7" height="14.7" viewBox="0 0 14 14"><circle cx="7" cy="7" r="6.300" fill="none" stroke="#a062b8" stroke-width="1"/><path d="M7 6v4.500" stroke="#a062b8" stroke-width="1.200"/><circle cx="7" cy="3.900" r="0.800" fill="#a062b8"/></svg><div class="r" style="left:212px;top:2px;width:63px;height:24px;background:#fff;border:1px solid #e3d3ea;border-radius:4px;box-sizing:border-box;"></div><div class="t" style="left:228.0px;top:4.7px;font-size:12.5px;line-height:16px;color:#9a55b3;letter-spacing:-0.254px;">Apply</div></div>
<div class="r" style="left:2px;top:982px;width:298px;height:40.5px;background:#f2fafc;border-top:1px solid #d8ecf2;box-sizing:border-box;"></div>
<svg class="r" style="left:15.6px;top:996.6px;" width="12.8" height="12.8" viewBox="0 0 16 16"><g transform="translate(8,8)"><rect x="-1.500" y="-7.500" width="3" height="15" rx="1" transform="rotate(0)" fill="none" stroke="#3f8fa0" stroke-width="1"/><rect x="-1.500" y="-7.500" width="3" height="15" rx="1" transform="rotate(60)" fill="none" stroke="#3f8fa0" stroke-width="1"/><rect x="-1.500" y="-7.500" width="3" height="15" rx="1" transform="rotate(120)" fill="none" stroke="#3f8fa0" stroke-width="1"/><circle r="5" fill="#f2fafc" stroke="#3f8fa0" stroke-width="1"/><circle r="2" fill="none" stroke="#3f8fa0" stroke-width="1"/></g></svg>
<div class="t" style="left:34.0px;top:996.2px;font-size:12.5px;line-height:16px;color:#3f8fa0;letter-spacing:-0.230px;">Manage Views</div>
<svg class="r" style="left:185.2px;top:996.2px;" width="13.6" height="13.6" viewBox="0 0 16 16"><circle cx="6" cy="4.500" r="3" fill="none" stroke="#3f8fa0" stroke-width="1"/><path d="M0.500 11.500q0-2 2-2h7q2 0 2 2 0 3.500-5.500 3.500T0.500 11.500z" fill="none" stroke="#3f8fa0" stroke-width="1"/><path d="M11.500 2.500q1.500 2 0 4M13.500 1q2.500 3.500 0 7" fill="none" stroke="#3f8fa0" stroke-width="1"/></svg>
<div class="t" style="left:203.0px;top:996.2px;font-size:12.5px;line-height:16px;color:#3f8fa0;letter-spacing:-0.260px;">Suggest a View</div>
<div class="r" style="left:300px;top:969px;width:19.5px;height:53.5px;background:#935ba7;"></div>
<div class="r" style="left:319.5px;top:969px;width:1262.5px;height:38px;background:#fff;"></div>
<div class="r" style="left:319.5px;top:1007px;width:1245.5px;height:15.5px;background:#f1f1f1;"></div>
<div class="r" style="left:320px;top:979.5px;width:1245px;height:1px;background:#f5f5f5;"></div>
<div class="r" style="left:320px;top:1006px;width:1245px;height:1px;background:#e6e6e6;"></div>
<div class="r" style="left:0;top:969px;width:1582px;height:6.5px;overflow:hidden"><div class="t" style="left:386.0px;top:-9.6px;font-size:13px;line-height:17px;color:#222;letter-spacing:0.081px;">Megan Bowen</div><div class="t" style="left:558.0px;top:-9.6px;font-size:13px;line-height:17px;color:#222;letter-spacing:-0.758px;">s_Enter</div><div class="t" style="left:602.5px;top:-9.6px;font-size:13px;line-height:17px;color:#222;letter-spacing:0.053px;">[2]∅;∅</div><div class="t" style="left:690.0px;top:-9.6px;font-size:13px;line-height:17px;color:#222;letter-spacing:0.146px;">[2] [-Direct-];[-Direct-]</div><div class="t" style="left:834.0px;top:-9.6px;font-size:13px;line-height:17px;color:#222;letter-spacing:-0.293px;">[2] Microsoft_Teams_En</div><div class="t" style="left:971.0px;top:-9.6px;font-size:13px;line-height:17px;color:#222;letter-spacing:-0.141px;">[2] None;None</div><div class="t" style="left:1066.0px;top:-9.6px;font-size:13px;line-height:17px;color:#222;letter-spacing:-0.198px;">Miriam Graham</div><div class="t" style="left:1331.0px;top:-9.6px;font-size:13px;line-height:17px;color:#222;letter-spacing:-0.243px;">1/14/2025 12:00 AM</div><div class="t" style="left:1451.0px;top:-9.6px;font-size:13px;line-height:17px;color:#222;letter-spacing:-0.229px;">1/13/2025 11:52 PM</div><div class="r" style="left:665px;top:0px;width:24px;height:12px;background:#d9d9d9;"></div><svg class="r" style="left:322px;top:-9.5px;" width="14" height="14" viewBox="0 0 14 14"><circle cx="7" cy="7" r="5.900" fill="#fff" stroke="#8c8c8c" stroke-width="1.300"/><circle cx="7" cy="7" r="2.900" fill="#9a9a9a"/></svg><svg class="r" style="left:341px;top:-10.8px;" width="16" height="16" viewBox="0 0 16 16"><g stroke="#cfe6f7" stroke-width="1.800" stroke-linejoin="round"><circle cx="8" cy="5" r="4.300" fill="#2b7ec3"/><path d="M1.600 14.300q0-3.300 2.700-3.900L8 12l3.700-1.600q2.700.6 2.700 3.900z" fill="#2b7ec3"/></g><circle cx="8" cy="5" r="4.150" fill="#2b7ec3"/><path d="M1.600 14.300q0-3.300 2.700-3.900L8 12l3.700-1.600q2.700.6 2.700 3.900z" fill="#2b7ec3"/></svg></div>
<div class="r" style="left:385px;top:969px;width:1px;height:37px;background:#3b83d6;"></div>
<div class="r" style="left:558.8px;top:969px;width:2px;height:37px;background:#2a66b0;"></div>
<div class="r" style="left:665px;top:969px;width:24px;height:36.5px;background:#d9d9d9;"></div>
<svg class="r" style="left:322px;top:986px;" width="14" height="14" viewBox="0 0 14 14"><circle cx="7" cy="7" r="5.900" fill="#fff" stroke="#8c8c8c" stroke-width="1.300"/><circle cx="7" cy="7" r="2.900" fill="#9a9a9a"/></svg>
<svg class="r" style="left:341px;top:984.7px;" width="16" height="16" viewBox="0 0 16 16"><g stroke="#cfe6f7" stroke-width="1.800" stroke-linejoin="round"><circle cx="8" cy="5" r="4.300" fill="#2b7ec3"/><path d="M1.600 14.300q0-3.300 2.700-3.900L8 12l3.700-1.600q2.700.6 2.700 3.900z" fill="#2b7ec3"/></g><circle cx="8" cy="5" r="4.150" fill="#2b7ec3"/><path d="M1.600 14.300q0-3.300 2.700-3.900L8 12l3.700-1.600q2.700.6 2.700 3.900z" fill="#2b7ec3"/></svg>
<div class="r" style="left:598.2px;top:990.8px;width:1.2px;height:9.2px;background:#222;"></div>
<div class="t" style="left:386.0px;top:985.2px;font-size:13px;line-height:17px;color:#222;letter-spacing:-0.774px;">Lee Gu</div>
<div class="t" style="left:558.0px;top:985.2px;font-size:13px;line-height:17px;color:#222;letter-spacing:-0.758px;">s_Enter</div>
<div class="t" style="left:602.5px;top:985.2px;font-size:13px;line-height:17px;color:#222;letter-spacing:0.053px;">[2]∅;∅</div>
<div class="t" style="left:690.0px;top:985.2px;font-size:13px;line-height:17px;color:#222;letter-spacing:0.146px;">[2] [-Direct-];[-Direct-]</div>
<div class="t" style="left:834.0px;top:985.2px;font-size:13px;line-height:17px;color:#222;letter-spacing:-0.293px;">[2] Microsoft_Teams_En</div>
<div class="t" style="left:971.0px;top:985.2px;font-size:13px;line-height:17px;color:#222;letter-spacing:-0.141px;">[2] None;None</div>
<div class="t" style="left:1066.0px;top:985.2px;font-size:13px;line-height:17px;color:#222;letter-spacing:-0.318px;">Patti Fernandez</div>
<div class="t" style="left:1331.0px;top:985.2px;font-size:13px;line-height:17px;color:#222;letter-spacing:-0.229px;">1/13/2025 11:51 PM</div>
<div class="t" style="left:1451.0px;top:985.2px;font-size:13px;line-height:17px;color:#222;letter-spacing:-0.283px;">1/13/2025 01:31 PM</div>
<svg class="r" style="left:327px;top:1010.5px;" width="4" height="8" viewBox="0 0 4 8"><path d="M4 0v8 L0 4 z" fill="#2b3f66"/></svg>
<div class="r" style="left:850px;top:1007px;width:698px;height:15.5px;background:#8d8d8d;"></div>
<svg class="r" style="left:1554px;top:1010.5px;" width="4" height="8" viewBox="0 0 4 8"><path d="M0 0v8 L4 4 z" fill="#2b3f66"/></svg>
<div class="r" style="left:1565px;top:969px;width:17px;height:53.5px;background:#f3f3f3;"></div>
<div class="r" style="left:1566px;top:969px;width:15px;height:6px;background:#8d8d8d;"></div>
<svg class="r" style="left:1569.5px;top:995px;" width="8" height="4" viewBox="0 0 8 4"><path d="M0 0h8 L4 4 z" fill="#2b3f66"/></svg>
<div class="r" style="left:1582px;top:969px;width:15px;height:53.5px;background:#7b4a99;"></div>
<div class="r" style="left:1597px;top:969px;width:15px;height:53.5px;background:#935ba7;"></div>
<div class="r" style="left:1612px;top:969px;width:288.9px;height:54.8px;background:#efefef;"></div>
<div class="r" style="left:1617px;top:969px;width:279.5px;height:5px;background:#fff;"></div>
<div class="r" style="left:1900.9px;top:969px;width:14.6px;height:54.8px;background:#f8f8f8;"></div>
<div class="r" style="left:1904px;top:969px;width:9px;height:36.7px;background:#8a8a8a;border-radius:0 0 4.5px 4.5px;"></div>
<svg class="r" style="left:1903.95px;top:1012.9px;" width="9.5" height="7" viewBox="0 0 9.5 7"><path d="M0 0h9.5 L4.75 7 z" fill="#8a8a8a"/></svg>
<div class="r" style="left:0px;top:1022.5px;width:1912px;height:21.5px;background:#fff;"></div>
<div class="r" style="left:0px;top:1022.5px;width:1912px;height:1px;background:#f0f0f0;"></div>
<div class="t" style="left:3.0px;top:1026.7px;font-size:12.5px;line-height:16px;color:#222;letter-spacing:-0.117px;">Rows Loaded: 57 | Rows Displayed: 57 | Rows Selected: 1</div>
<div class="r" style="left:0px;top:1043.7px;width:1915.5px;height:19.8px;background:linear-gradient(#e4e4e4,#d3d3d3);"></div>
<div class="t" style="left:4.0px;top:1047.7px;font-size:12px;line-height:16px;color:#555;letter-spacing:-0.538px;">Ready</div>
<div class="t" style="left:1799.0px;top:1048.2px;font-size:11.5px;line-height:15px;color:#c2c2c2;letter-spacing:-0.216px;">CAP</div>
<div class="t" style="left:1830.0px;top:1048.2px;font-size:11.5px;line-height:15px;color:#c2c2c2;letter-spacing:0.603px;">NUM</div>
<div class="t" style="left:1867.0px;top:1048.2px;font-size:11.5px;line-height:15px;color:#444;letter-spacing:-1.169px;">SCRL</div>
<div class="r" style="left:0px;top:1063.5px;width:1915.5px;height:2.3px;background:linear-gradient(#b9a9c4,#8a8a8a);"></div>
<div class="r" style="left:0px;top:1065.8px;width:1919px;height:13.2px;background:#000;"></div>
<div class="r" style="left:1915.5px;top:0px;width:3.5px;height:1066px;background:#f4f4f4;border-left:1px solid #d0d0d0;box-sizing:border-box;"></div>
<svg class="r" style="left:0;top:0" width="1919" height="1079" viewBox="0 0 1919 1079"><rect x="438.600" y="45.600" width="58.700" height="78.800" fill="none" stroke="#f420a8" stroke-width="4.700"/><path d="M498 126L1275.500 328.600" stroke="#f420a8" stroke-width="5.500" fill="none"/><path d="M1263 316.800L1277.500 329.200 1258.500 334.400" stroke="#f420a8" stroke-width="4.800" fill="none" stroke-linecap="round" stroke-linejoin="round"/></svg>
</div></body></html>
